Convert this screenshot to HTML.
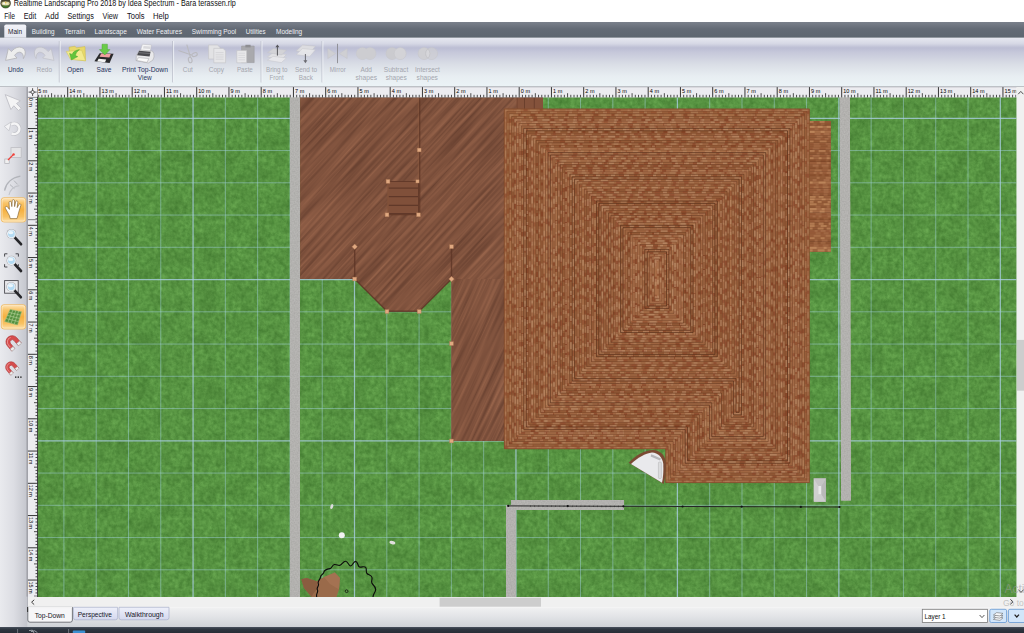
<!DOCTYPE html><html><head><meta charset="utf-8"><title>Realtime Landscaping Pro 2018 by Idea Spectrum - Bara terassen.rlp</title><style>html,body{margin:0;padding:0;background:#fff;overflow:hidden}body{width:1024px;height:633px}</style></head><body><svg width="1024" height="633" viewBox="0 0 1024 633" font-family="'Liberation Sans', sans-serif" style="display:block"><defs>
<filter id="grassF" x="0" y="0" width="100%" height="100%" color-interpolation-filters="sRGB">
 <feTurbulence type="fractalNoise" baseFrequency="0.24" numOctaves="3" seed="3" result="n1"/>
 <feColorMatrix in="n1" type="matrix" values="0.17 0 0 0 0.265  0.19 0 0 0 0.495  0.14 0 0 0 0.195  0 0 0 0 1" result="c1"/>
 <feTurbulence type="fractalNoise" baseFrequency="0.06" numOctaves="3" seed="11" result="n2"/>
 <feColorMatrix in="n2" type="matrix" values="0 0 0 0 0.18  0 0 0 0 0.36  0 0 0 0 0.12  -0.5 0 0 0 0.32" result="c2"/>
 <feComposite in="c2" in2="c1" operator="over"/>
</filter>
<filter id="deckF" x="0" y="0" width="100%" height="100%" color-interpolation-filters="sRGB">
 <feTurbulence type="fractalNoise" baseFrequency="0.35 0.012" numOctaves="2" seed="5" result="n1"/>
 <feColorMatrix in="n1" type="matrix" values="0.27 0 0 0 0.365  0.20 0 0 0 0.222  0.15 0 0 0 0.165  0 0 0 0 1"/>
</filter>
<filter id="pathF" x="0" y="0" width="100%" height="100%" color-interpolation-filters="sRGB">
 <feTurbulence type="fractalNoise" baseFrequency="0.7" numOctaves="1" seed="9" result="n1"/>
 <feColorMatrix in="n1" type="matrix" values="0.1 0 0 0 0.65  0.1 0 0 0 0.645  0.1 0 0 0 0.635  0 0 0 0 1"/>
</filter>
<clipPath id="cv"><rect x="37.5" y="97.3" width="979.1" height="499.7"/></clipPath>
<linearGradient id="tabstrip" x1="0" y1="0" x2="0" y2="1"><stop offset="0" stop-color="#7a808b"/><stop offset="0.45" stop-color="#636a75"/><stop offset="1" stop-color="#5d6670"/></linearGradient>
<linearGradient id="ribbon" x1="0" y1="0" x2="0" y2="1">
 <stop offset="0" stop-color="#e6e8f0"/><stop offset="0.12" stop-color="#d6d8e5"/><stop offset="0.19" stop-color="#c0c2d6"/><stop offset="0.21" stop-color="#bcbed4"/><stop offset="0.3" stop-color="#c6c8da"/><stop offset="0.55" stop-color="#dadee6"/><stop offset="0.8" stop-color="#e8eef2"/><stop offset="1" stop-color="#ebf3f6"/></linearGradient>
<linearGradient id="ltool" x1="0" y1="0" x2="1" y2="0"><stop offset="0" stop-color="#e9eaee"/><stop offset="0.5" stop-color="#dcdde3"/><stop offset="1" stop-color="#c3c5cc"/></linearGradient>
<linearGradient id="btab" x1="0" y1="0" x2="0" y2="1"><stop offset="0" stop-color="#f1f1f2"/><stop offset="0.5" stop-color="#e1e3e6"/><stop offset="1" stop-color="#cfd2d7"/></linearGradient>
<linearGradient id="ptab" x1="0" y1="0" x2="0" y2="1"><stop offset="0" stop-color="#eef0fa"/><stop offset="1" stop-color="#d4d8ee"/></linearGradient>
<linearGradient id="hot" x1="0" y1="0" x2="0" y2="1"><stop offset="0" stop-color="#fde6bc"/><stop offset="0.22" stop-color="#f9c468"/><stop offset="0.5" stop-color="#f5b040"/><stop offset="0.78" stop-color="#f8c264"/><stop offset="1" stop-color="#fde2ae"/></linearGradient>
<linearGradient id="maintab" x1="0" y1="0" x2="0" y2="1"><stop offset="0" stop-color="#f2f3f8"/><stop offset="1" stop-color="#e4e6ef"/></linearGradient>
</defs>
<rect x="0" y="0" width="1024" height="633" fill="#ffffff"/>
<g clip-path="url(#cv)">
<rect x="37.5" y="97.3" width="979.1" height="499.7" fill="#47943c"/>
<rect x="37.5" y="97.3" width="979.1" height="499.7" filter="url(#grassF)"/>
<line x1="63.90" y1="97.3" x2="63.90" y2="597.0" stroke="#a0cfdc" stroke-opacity="0.5" stroke-width="1"/>
<line x1="96.19" y1="97.3" x2="96.19" y2="597.0" stroke="#a0cfdc" stroke-opacity="0.5" stroke-width="1"/>
<line x1="128.48" y1="97.3" x2="128.48" y2="597.0" stroke="#a0cfdc" stroke-opacity="0.5" stroke-width="1"/>
<line x1="160.77" y1="97.3" x2="160.77" y2="597.0" stroke="#a0cfdc" stroke-opacity="0.5" stroke-width="1"/>
<line x1="193.06" y1="97.3" x2="193.06" y2="597.0" stroke="#a9cde2" stroke-opacity="0.8" stroke-width="1.25"/>
<line x1="225.35" y1="97.3" x2="225.35" y2="597.0" stroke="#a0cfdc" stroke-opacity="0.5" stroke-width="1"/>
<line x1="257.64" y1="97.3" x2="257.64" y2="597.0" stroke="#a0cfdc" stroke-opacity="0.5" stroke-width="1"/>
<line x1="289.93" y1="97.3" x2="289.93" y2="597.0" stroke="#a0cfdc" stroke-opacity="0.5" stroke-width="1"/>
<line x1="322.22" y1="97.3" x2="322.22" y2="597.0" stroke="#a0cfdc" stroke-opacity="0.5" stroke-width="1"/>
<line x1="354.51" y1="97.3" x2="354.51" y2="597.0" stroke="#a9cde2" stroke-opacity="0.8" stroke-width="1.25"/>
<line x1="386.80" y1="97.3" x2="386.80" y2="597.0" stroke="#a0cfdc" stroke-opacity="0.5" stroke-width="1"/>
<line x1="419.09" y1="97.3" x2="419.09" y2="597.0" stroke="#a0cfdc" stroke-opacity="0.5" stroke-width="1"/>
<line x1="451.38" y1="97.3" x2="451.38" y2="597.0" stroke="#a0cfdc" stroke-opacity="0.5" stroke-width="1"/>
<line x1="483.67" y1="97.3" x2="483.67" y2="597.0" stroke="#a0cfdc" stroke-opacity="0.5" stroke-width="1"/>
<line x1="515.96" y1="97.3" x2="515.96" y2="597.0" stroke="#a9cde2" stroke-opacity="0.8" stroke-width="1.25"/>
<line x1="548.25" y1="97.3" x2="548.25" y2="597.0" stroke="#a0cfdc" stroke-opacity="0.5" stroke-width="1"/>
<line x1="580.54" y1="97.3" x2="580.54" y2="597.0" stroke="#a0cfdc" stroke-opacity="0.5" stroke-width="1"/>
<line x1="612.83" y1="97.3" x2="612.83" y2="597.0" stroke="#a0cfdc" stroke-opacity="0.5" stroke-width="1"/>
<line x1="645.12" y1="97.3" x2="645.12" y2="597.0" stroke="#a0cfdc" stroke-opacity="0.5" stroke-width="1"/>
<line x1="677.41" y1="97.3" x2="677.41" y2="597.0" stroke="#a9cde2" stroke-opacity="0.8" stroke-width="1.25"/>
<line x1="709.70" y1="97.3" x2="709.70" y2="597.0" stroke="#a0cfdc" stroke-opacity="0.5" stroke-width="1"/>
<line x1="741.99" y1="97.3" x2="741.99" y2="597.0" stroke="#a0cfdc" stroke-opacity="0.5" stroke-width="1"/>
<line x1="774.28" y1="97.3" x2="774.28" y2="597.0" stroke="#a0cfdc" stroke-opacity="0.5" stroke-width="1"/>
<line x1="806.57" y1="97.3" x2="806.57" y2="597.0" stroke="#a0cfdc" stroke-opacity="0.5" stroke-width="1"/>
<line x1="838.86" y1="97.3" x2="838.86" y2="597.0" stroke="#a9cde2" stroke-opacity="0.8" stroke-width="1.25"/>
<line x1="871.15" y1="97.3" x2="871.15" y2="597.0" stroke="#a0cfdc" stroke-opacity="0.5" stroke-width="1"/>
<line x1="903.44" y1="97.3" x2="903.44" y2="597.0" stroke="#a0cfdc" stroke-opacity="0.5" stroke-width="1"/>
<line x1="935.73" y1="97.3" x2="935.73" y2="597.0" stroke="#a0cfdc" stroke-opacity="0.5" stroke-width="1"/>
<line x1="968.02" y1="97.3" x2="968.02" y2="597.0" stroke="#a0cfdc" stroke-opacity="0.5" stroke-width="1"/>
<line x1="1000.31" y1="97.3" x2="1000.31" y2="597.0" stroke="#a9cde2" stroke-opacity="0.8" stroke-width="1.25"/>
<line x1="37.5" y1="118.30" x2="1016.6" y2="118.30" stroke="#a9cde2" stroke-opacity="0.8" stroke-width="1.2"/>
<line x1="37.5" y1="150.55" x2="1016.6" y2="150.55" stroke="#a0cfdc" stroke-opacity="0.5" stroke-width="1"/>
<line x1="37.5" y1="182.80" x2="1016.6" y2="182.80" stroke="#a0cfdc" stroke-opacity="0.5" stroke-width="1"/>
<line x1="37.5" y1="215.05" x2="1016.6" y2="215.05" stroke="#a0cfdc" stroke-opacity="0.5" stroke-width="1"/>
<line x1="37.5" y1="247.30" x2="1016.6" y2="247.30" stroke="#a0cfdc" stroke-opacity="0.5" stroke-width="1"/>
<line x1="37.5" y1="279.55" x2="1016.6" y2="279.55" stroke="#a9cde2" stroke-opacity="0.8" stroke-width="1.2"/>
<line x1="37.5" y1="311.80" x2="1016.6" y2="311.80" stroke="#a0cfdc" stroke-opacity="0.5" stroke-width="1"/>
<line x1="37.5" y1="344.05" x2="1016.6" y2="344.05" stroke="#a0cfdc" stroke-opacity="0.5" stroke-width="1"/>
<line x1="37.5" y1="376.30" x2="1016.6" y2="376.30" stroke="#a0cfdc" stroke-opacity="0.5" stroke-width="1"/>
<line x1="37.5" y1="408.55" x2="1016.6" y2="408.55" stroke="#a0cfdc" stroke-opacity="0.5" stroke-width="1"/>
<line x1="37.5" y1="440.80" x2="1016.6" y2="440.80" stroke="#a9cde2" stroke-opacity="0.8" stroke-width="1.2"/>
<line x1="37.5" y1="473.05" x2="1016.6" y2="473.05" stroke="#a0cfdc" stroke-opacity="0.5" stroke-width="1"/>
<line x1="37.5" y1="505.30" x2="1016.6" y2="505.30" stroke="#a0cfdc" stroke-opacity="0.5" stroke-width="1"/>
<line x1="37.5" y1="537.55" x2="1016.6" y2="537.55" stroke="#a0cfdc" stroke-opacity="0.5" stroke-width="1"/>
<line x1="37.5" y1="569.80" x2="1016.6" y2="569.80" stroke="#a0cfdc" stroke-opacity="0.5" stroke-width="1"/>
<rect x="290" y="97" width="10" height="500" fill="#b2b1ae"/>
<rect x="290" y="97" width="10" height="500" filter="url(#pathF)"/>
<clipPath id="rp"><polygon points="839.8,97 849.9,97 850.9,500.6 841.1,500.6"/></clipPath><g clip-path="url(#rp)">
<rect x="839" y="97" width="13" height="404" fill="#b2b1ae"/>
<rect x="839" y="97" width="13" height="404" filter="url(#pathF)"/>
</g>
<rect x="506.3" y="505" width="9.7" height="92" fill="#b2b1ae"/>
<rect x="506.3" y="505" width="9.7" height="92" filter="url(#pathF)"/>
<rect x="511.1" y="500.2" width="112.5" height="9.7" fill="#b2b1ae"/>
<rect x="511.1" y="500.2" width="112.5" height="9.7" filter="url(#pathF)"/>
<clipPath id="deckc"><polygon points="300.2,97 543,97 543,112 506,112 506,441 451.5,441 451.5,279 419.2,311.3 387,311.3 354.7,279 300.2,279"/></clipPath>
<polygon points="300.2,97 543,97 543,112 506,112 506,441 451.5,441 451.5,279 419.2,311.3 387,311.3 354.7,279 300.2,279" fill="#7f5039"/>
<g clip-path="url(#deckc)">
<g transform="rotate(43 400 250)"><rect x="100" y="-50" width="600" height="600" filter="url(#deckF)"/></g>
<clipPath id="deck2"><rect x="451.5" y="279" width="60" height="165"/></clipPath>
<g clip-path="url(#deck2)"><g transform="rotate(25 480 360)"><rect x="330" y="200" width="300" height="330" filter="url(#deckF)"/></g></g>
<clipPath id="deck3"><rect x="516.7" y="97" width="27" height="15"/></clipPath>
<g clip-path="url(#deck3)"><rect x="500" y="90" width="50" height="30" fill="#84523b"/><path d="M516.9 97 V112 M524.5 97 V112 M534.3 97 V112" stroke="#5d3526" stroke-width="0.8" stroke-opacity="0.8"/></g>
</g>
<line x1="300" y1="97.3" x2="543" y2="97.3" stroke="#4a2b20" stroke-width="1" stroke-opacity="0.8"/>
<line x1="419.6" y1="97" x2="419.6" y2="214.8" stroke="#5d3526" stroke-width="1.6" stroke-opacity="0.75"/>
<line x1="418.3" y1="97" x2="418.3" y2="214.8" stroke="#9a6548" stroke-width="0.6" stroke-opacity="0.8"/>
<rect x="388" y="181.4" width="30.5" height="33.4" fill="#80503a" stroke="#5d3526" stroke-width="0.8"/>
<line x1="388.5" y1="188.1" x2="418" y2="188.1" stroke="#4e2c20" stroke-width="0.9" stroke-opacity="0.85"/>
<line x1="388.5" y1="196.7" x2="418" y2="196.7" stroke="#4e2c20" stroke-width="0.9" stroke-opacity="0.85"/>
<line x1="388.5" y1="205.3" x2="418" y2="205.3" stroke="#4e2c20" stroke-width="0.9" stroke-opacity="0.85"/>
<line x1="388.5" y1="213.7" x2="418" y2="213.7" stroke="#4e2c20" stroke-width="0.9" stroke-opacity="0.85"/>
<line x1="388" y1="181.4" x2="388" y2="214.8" stroke="#9a6548" stroke-width="0.8"/>
<line x1="354.7" y1="246.7" x2="354.7" y2="279" stroke="#5d3526" stroke-width="1.4" stroke-opacity="0.8"/>
<line x1="451.5" y1="246.7" x2="451.5" y2="279" stroke="#5d3526" stroke-width="1.4" stroke-opacity="0.8"/>
<line x1="354.7" y1="279" x2="387" y2="311.3" stroke="#5d3526" stroke-width="1.4" stroke-opacity="0.8"/>
<line x1="387" y1="311.3" x2="419.2" y2="311.3" stroke="#5d3526" stroke-width="1.4" stroke-opacity="0.8"/>
<line x1="419.2" y1="311.3" x2="451.5" y2="279" stroke="#5d3526" stroke-width="1.4" stroke-opacity="0.8"/>
<rect x="417.3" y="148.1" width="3.8" height="3.8" fill="#e0a981" stroke="#b07a55" stroke-width="0.4"/>
<rect x="386.1" y="179.5" width="3.8" height="3.8" fill="#e0a981" stroke="#b07a55" stroke-width="0.4"/>
<rect x="415.9" y="179.8" width="3.2" height="3.2" fill="#e0a981" stroke="#b07a55" stroke-width="0.4"/>
<rect x="385.1" y="212.9" width="3.8" height="3.8" fill="#e0a981" stroke="#b07a55" stroke-width="0.4"/>
<rect x="416.6" y="212.9" width="3.8" height="3.8" fill="#e0a981" stroke="#b07a55" stroke-width="0.4"/>
<rect x="352.8" y="244.8" width="3.8" height="3.8" fill="#e0a981" stroke="#b07a55" stroke-width="0.4" transform="rotate(45 354.7 246.7)"/>
<rect x="449.6" y="244.8" width="3.8" height="3.8" fill="#e0a981" stroke="#b07a55" stroke-width="0.4"/>
<rect x="352.8" y="277.1" width="3.8" height="3.8" fill="#e0a981" stroke="#b07a55" stroke-width="0.4"/>
<rect x="449.6" y="277.1" width="3.8" height="3.8" fill="#e0a981" stroke="#b07a55" stroke-width="0.4" transform="rotate(45 451.5 279)"/>
<rect x="385.1" y="309.6" width="3.8" height="3.8" fill="#e0a981" stroke="#b07a55" stroke-width="0.4"/>
<rect x="417.3" y="309.6" width="3.8" height="3.8" fill="#e0a981" stroke="#b07a55" stroke-width="0.4"/>
<rect x="449.6" y="341.7" width="3.8" height="3.8" fill="#e0a981" stroke="#b07a55" stroke-width="0.4"/>
<rect x="449.6" y="439.1" width="3.8" height="3.8" fill="#e0a981" stroke="#b07a55" stroke-width="0.4"/>
<polygon points="504.4,109.0 809.3,109.0 809.3,482.6 665.8,482.6 665.8,448.8 504.4,448.8" fill="#975e3a"/>
<rect x="809.6" y="121" width="21.2" height="130.8" fill="#975e3a"/>
<polygon points="505.6,110.2 808.1,110.2 808.1,481.4 667.0,481.4 667.0,447.6 505.6,447.6" fill="none" stroke="#a36a46" stroke-width="2.72" stroke-linejoin="miter"/>
<polygon points="505.6,110.2 808.1,110.2 808.1,481.4 667.0,481.4 667.0,447.6 505.6,447.6" fill="none" stroke="#8f4a2e" stroke-opacity="0.65" stroke-width="2.42" stroke-dasharray="4 6 3 7 4 6 5 9 3 7 4 12 3 9 3 12 3 7 3 6" stroke-dashoffset="36"/>
<polygon points="505.6,110.2 808.1,110.2 808.1,481.4 667.0,481.4 667.0,447.6 505.6,447.6" fill="none" stroke="#b68560" stroke-opacity="0.5" stroke-width="2.02" stroke-dasharray="3 8 3 7 5 11 4 6 7 9 7 7 3 8 5 6 7 6 7 5" stroke-dashoffset="39"/>
<polygon points="508.0,112.6 805.7,112.6 805.7,479.0 669.4,479.0 669.4,445.2 508.0,445.2" fill="none" stroke="#975e3a" stroke-width="2.72" stroke-linejoin="miter"/>
<polygon points="508.0,112.6 805.7,112.6 805.7,479.0 669.4,479.0 669.4,445.2 508.0,445.2" fill="none" stroke="#94502f" stroke-opacity="0.65" stroke-width="2.42" stroke-dasharray="5 12 4 13 5 13 4 10 3 8 5 9 3 10 5 13 4 13 4 7" stroke-dashoffset="7"/>
<polygon points="508.0,112.6 805.7,112.6 805.7,479.0 669.4,479.0 669.4,445.2 508.0,445.2" fill="none" stroke="#b68560" stroke-opacity="0.5" stroke-width="2.02" stroke-dasharray="4 10 4 12 6 5 3 10 5 10 7 12 7 12 3 6 5 12 3 5" stroke-dashoffset="46"/>
<polygon points="510.4,115.0 803.2,115.0 803.2,476.6 671.8,476.6 671.8,442.8 510.4,442.8" fill="none" stroke="#a76e48" stroke-width="2.72" stroke-linejoin="miter"/>
<polygon points="510.4,115.0 803.2,115.0 803.2,476.6 671.8,476.6 671.8,442.8 510.4,442.8" fill="none" stroke="#823e22" stroke-opacity="0.65" stroke-width="2.42" stroke-dasharray="5 13 4 12 5 11 3 13 4 8 5 7 4 6 3 10 3 9 4 12" stroke-dashoffset="58"/>
<polygon points="510.4,115.0 803.2,115.0 803.2,476.6 671.8,476.6 671.8,442.8 510.4,442.8" fill="none" stroke="#b68560" stroke-opacity="0.5" stroke-width="2.02" stroke-dasharray="3 7 6 11 7 9 4 11 7 9 6 10 6 8 4 6 4 7 4 8" stroke-dashoffset="0"/>
<polygon points="512.9,117.5 800.8,117.5 800.8,474.1 674.3,474.1 674.3,440.3 512.9,440.3" fill="none" stroke="#925936" stroke-width="2.72" stroke-linejoin="miter"/>
<polygon points="512.9,117.5 800.8,117.5 800.8,474.1 674.3,474.1 674.3,440.3 512.9,440.3" fill="none" stroke="#8f4a2e" stroke-opacity="0.65" stroke-width="2.42" stroke-dasharray="4 10 3 8 4 11 5 11 3 6 4 12 4 12 4 7 4 12 3 9" stroke-dashoffset="4"/>
<polygon points="512.9,117.5 800.8,117.5 800.8,474.1 674.3,474.1 674.3,440.3 512.9,440.3" fill="none" stroke="#bb8b66" stroke-opacity="0.5" stroke-width="2.02" stroke-dasharray="6 7 3 10 7 5 3 5 7 7 7 6 5 5 3 8 7 11 4 9" stroke-dashoffset="22"/>
<polygon points="515.3,119.9 798.4,119.9 798.4,471.7 676.7,471.7 676.7,437.9 515.3,437.9" fill="none" stroke="#9f6642" stroke-width="2.72" stroke-linejoin="miter"/>
<polygon points="515.3,119.9 798.4,119.9 798.4,471.7 676.7,471.7 676.7,437.9 515.3,437.9" fill="none" stroke="#823e22" stroke-opacity="0.65" stroke-width="2.42" stroke-dasharray="4 7 3 13 4 13 4 10 3 8 3 11 5 10 4 8 5 6 3 11" stroke-dashoffset="9"/>
<polygon points="515.3,119.9 798.4,119.9 798.4,471.7 676.7,471.7 676.7,437.9 515.3,437.9" fill="none" stroke="#c29470" stroke-opacity="0.5" stroke-width="2.02" stroke-dasharray="7 9 3 9 7 10 4 10 4 10 4 8 4 11 4 8 7 12 5 5" stroke-dashoffset="1"/>
<polygon points="517.7,122.3 796.0,122.3 796.0,469.3 679.1,469.3 679.1,435.5 517.7,435.5" fill="none" stroke="#a36a46" stroke-width="2.72" stroke-linejoin="miter"/>
<polygon points="517.7,122.3 796.0,122.3 796.0,469.3 679.1,469.3 679.1,435.5 517.7,435.5" fill="none" stroke="#94502f" stroke-opacity="0.65" stroke-width="2.42" stroke-dasharray="4 9 5 11 4 11 4 7 3 7 3 13 3 11 3 13 5 6 4 11" stroke-dashoffset="51"/>
<polygon points="517.7,122.3 796.0,122.3 796.0,469.3 679.1,469.3 679.1,435.5 517.7,435.5" fill="none" stroke="#c29470" stroke-opacity="0.5" stroke-width="2.02" stroke-dasharray="3 11 4 12 4 11 5 6 6 12 6 6 4 7 4 5 4 12 4 12" stroke-dashoffset="42"/>
<polygon points="520.1,124.7 793.6,124.7 793.6,466.9 681.5,466.9 681.5,433.1 520.1,433.1" fill="none" stroke="#a36a46" stroke-width="2.72" stroke-linejoin="miter"/>
<polygon points="520.1,124.7 793.6,124.7 793.6,466.9 681.5,466.9 681.5,433.1 520.1,433.1" fill="none" stroke="#8f4a2e" stroke-opacity="0.65" stroke-width="2.42" stroke-dasharray="5 8 3 6 5 7 5 8 4 9 3 6 4 9 4 9 5 11 4 12" stroke-dashoffset="53"/>
<polygon points="520.1,124.7 793.6,124.7 793.6,466.9 681.5,466.9 681.5,433.1 520.1,433.1" fill="none" stroke="#bb8b66" stroke-opacity="0.5" stroke-width="2.02" stroke-dasharray="3 10 6 11 7 7 7 7 7 5 6 7 7 5 4 7 4 12 7 6" stroke-dashoffset="35"/>
<polygon points="522.5,127.2 791.1,127.2 791.1,464.5 683.9,464.5 683.9,430.7 522.5,430.7" fill="none" stroke="#9d6440" stroke-width="2.72" stroke-linejoin="miter"/>
<polygon points="522.5,127.2 791.1,127.2 791.1,464.5 683.9,464.5 683.9,430.7 522.5,430.7" fill="none" stroke="#823e22" stroke-opacity="0.65" stroke-width="2.42" stroke-dasharray="5 13 3 6 3 9 4 6 3 13 5 6 3 13 4 9 5 10 4 13" stroke-dashoffset="32"/>
<polygon points="522.5,127.2 791.1,127.2 791.1,464.5 683.9,464.5 683.9,430.7 522.5,430.7" fill="none" stroke="#bb8b66" stroke-opacity="0.5" stroke-width="2.02" stroke-dasharray="7 9 7 8 6 7 6 6 6 12 5 6 4 11 3 8 5 6 4 10" stroke-dashoffset="9"/>
<polygon points="525.0,129.6 788.7,129.6 788.7,462.0 686.4,462.0 686.4,428.2 525.0,428.2" fill="none" stroke="#a36a46" stroke-width="2.72" stroke-linejoin="miter"/>
<polygon points="525.0,129.6 788.7,129.6 788.7,462.0 686.4,462.0 686.4,428.2 525.0,428.2" fill="none" stroke="#8f4a2e" stroke-opacity="0.65" stroke-width="2.42" stroke-dasharray="4 9 5 7 4 13 3 9 3 12 5 12 4 12 3 11 4 7 5 11" stroke-dashoffset="1"/>
<polygon points="525.0,129.6 788.7,129.6 788.7,462.0 686.4,462.0 686.4,428.2 525.0,428.2" fill="none" stroke="#c89b78" stroke-opacity="0.5" stroke-width="2.02" stroke-dasharray="7 12 6 5 6 10 7 9 7 6 3 8 3 6 5 9 3 7 5 7" stroke-dashoffset="52"/>
<polygon points="527.4,132.0 786.3,132.0 786.3,459.6 688.8,459.6 688.8,425.8 527.4,425.8" fill="none" stroke="#925936" stroke-width="2.72" stroke-linejoin="miter"/>
<polygon points="527.4,132.0 786.3,132.0 786.3,459.6 688.8,459.6 688.8,425.8 527.4,425.8" fill="none" stroke="#823e22" stroke-opacity="0.65" stroke-width="2.42" stroke-dasharray="4 8 5 13 5 11 3 10 3 8 4 7 4 6 5 7 4 7 5 9" stroke-dashoffset="4"/>
<polygon points="527.4,132.0 786.3,132.0 786.3,459.6 688.8,459.6 688.8,425.8 527.4,425.8" fill="none" stroke="#c89b78" stroke-opacity="0.5" stroke-width="2.02" stroke-dasharray="3 12 3 10 7 11 5 7 3 8 3 7 5 5 4 8 5 9 7 8" stroke-dashoffset="18"/>
<polygon points="529.8,134.4 783.9,134.4 783.9,457.2 691.2,457.2 691.2,423.4 529.8,423.4" fill="none" stroke="#925936" stroke-width="2.72" stroke-linejoin="miter"/>
<polygon points="529.8,134.4 783.9,134.4 783.9,457.2 691.2,457.2 691.2,423.4 529.8,423.4" fill="none" stroke="#8f4a2e" stroke-opacity="0.65" stroke-width="2.42" stroke-dasharray="4 11 3 10 3 6 3 9 5 13 3 13 3 12 5 13 5 12 5 10" stroke-dashoffset="44"/>
<polygon points="529.8,134.4 783.9,134.4 783.9,457.2 691.2,457.2 691.2,423.4 529.8,423.4" fill="none" stroke="#bb8b66" stroke-opacity="0.5" stroke-width="2.02" stroke-dasharray="4 10 4 7 6 10 3 7 3 6 5 11 4 5 3 11 7 9 7 8" stroke-dashoffset="44"/>
<polygon points="532.2,136.8 781.5,136.8 781.5,454.8 693.6,454.8 693.6,421.0 532.2,421.0" fill="none" stroke="#a36a46" stroke-width="2.72" stroke-linejoin="miter"/>
<polygon points="532.2,136.8 781.5,136.8 781.5,454.8 693.6,454.8 693.6,421.0 532.2,421.0" fill="none" stroke="#8a4528" stroke-opacity="0.65" stroke-width="2.42" stroke-dasharray="4 8 3 10 4 6 4 11 4 11 3 6 4 9 4 8 3 11 4 7" stroke-dashoffset="30"/>
<polygon points="532.2,136.8 781.5,136.8 781.5,454.8 693.6,454.8 693.6,421.0 532.2,421.0" fill="none" stroke="#c89b78" stroke-opacity="0.5" stroke-width="2.02" stroke-dasharray="7 8 4 5 3 9 3 7 6 5 6 5 5 9 4 6 7 7 7 11" stroke-dashoffset="48"/>
<polygon points="534.6,139.2 779.0,139.2 779.0,452.4 696.0,452.4 696.0,418.6 534.6,418.6" fill="none" stroke="#a36a46" stroke-width="2.72" stroke-linejoin="miter"/>
<polygon points="534.6,139.2 779.0,139.2 779.0,452.4 696.0,452.4 696.0,418.6 534.6,418.6" fill="none" stroke="#94502f" stroke-opacity="0.65" stroke-width="2.42" stroke-dasharray="3 10 5 8 3 12 5 8 5 6 5 9 3 6 3 8 5 11 3 12" stroke-dashoffset="53"/>
<polygon points="534.6,139.2 779.0,139.2 779.0,452.4 696.0,452.4 696.0,418.6 534.6,418.6" fill="none" stroke="#b68560" stroke-opacity="0.5" stroke-width="2.02" stroke-dasharray="7 5 3 8 6 9 3 12 3 6 7 6 6 9 3 9 4 8 4 12" stroke-dashoffset="31"/>
<polygon points="537.1,141.7 776.6,141.7 776.6,449.9 698.5,449.9 698.5,416.1 537.1,416.1" fill="none" stroke="#925936" stroke-width="2.72" stroke-linejoin="miter"/>
<polygon points="537.1,141.7 776.6,141.7 776.6,449.9 698.5,449.9 698.5,416.1 537.1,416.1" fill="none" stroke="#8a4528" stroke-opacity="0.65" stroke-width="2.42" stroke-dasharray="4 10 3 9 3 8 4 10 5 10 5 8 3 13 3 13 4 7 5 9" stroke-dashoffset="43"/>
<polygon points="537.1,141.7 776.6,141.7 776.6,449.9 698.5,449.9 698.5,416.1 537.1,416.1" fill="none" stroke="#b68560" stroke-opacity="0.5" stroke-width="2.02" stroke-dasharray="5 9 6 12 6 6 7 8 5 6 6 5 5 12 3 12 5 11 4 8" stroke-dashoffset="4"/>
<polygon points="539.5,144.1 774.2,144.1 774.2,447.5 700.9,447.5 700.9,413.7 539.5,413.7" fill="none" stroke="#9f6642" stroke-width="2.72" stroke-linejoin="miter"/>
<polygon points="539.5,144.1 774.2,144.1 774.2,447.5 700.9,447.5 700.9,413.7 539.5,413.7" fill="none" stroke="#8a4528" stroke-opacity="0.65" stroke-width="2.42" stroke-dasharray="3 10 4 8 5 10 3 11 3 13 4 12 3 8 3 13 5 13 4 10" stroke-dashoffset="46"/>
<polygon points="539.5,144.1 774.2,144.1 774.2,447.5 700.9,447.5 700.9,413.7 539.5,413.7" fill="none" stroke="#bb8b66" stroke-opacity="0.5" stroke-width="2.02" stroke-dasharray="6 10 6 10 3 10 3 10 5 11 3 8 3 9 5 10 3 11 6 6" stroke-dashoffset="23"/>
<polygon points="541.9,146.5 771.8,146.5 771.8,445.1 703.3,445.1 703.3,411.3 541.9,411.3" fill="none" stroke="#925936" stroke-width="2.72" stroke-linejoin="miter"/>
<polygon points="541.9,146.5 771.8,146.5 771.8,445.1 703.3,445.1 703.3,411.3 541.9,411.3" fill="none" stroke="#823e22" stroke-opacity="0.65" stroke-width="2.42" stroke-dasharray="3 10 3 6 5 10 5 8 3 10 4 11 3 11 4 6 5 12 5 9" stroke-dashoffset="46"/>
<polygon points="541.9,146.5 771.8,146.5 771.8,445.1 703.3,445.1 703.3,411.3 541.9,411.3" fill="none" stroke="#c29470" stroke-opacity="0.5" stroke-width="2.02" stroke-dasharray="3 11 6 7 5 12 3 7 4 12 6 10 5 9 5 9 6 8 5 12" stroke-dashoffset="35"/>
<polygon points="544.3,148.9 769.4,148.9 769.4,442.7 705.7,442.7 705.7,408.9 544.3,408.9" fill="none" stroke="#a76e48" stroke-width="2.72" stroke-linejoin="miter"/>
<polygon points="544.3,148.9 769.4,148.9 769.4,442.7 705.7,442.7 705.7,408.9 544.3,408.9" fill="none" stroke="#94502f" stroke-opacity="0.65" stroke-width="2.42" stroke-dasharray="3 8 5 8 3 9 5 13 5 9 4 11 4 12 3 9 3 7 3 11" stroke-dashoffset="35"/>
<polygon points="544.3,148.9 769.4,148.9 769.4,442.7 705.7,442.7 705.7,408.9 544.3,408.9" fill="none" stroke="#c29470" stroke-opacity="0.5" stroke-width="2.02" stroke-dasharray="5 8 5 9 7 8 3 11 6 11 7 8 6 9 5 5 6 9 7 10" stroke-dashoffset="8"/>
<polygon points="546.8,151.4 766.9,151.4 766.9,440.2 708.1,440.2 708.1,406.4 546.8,406.4" fill="none" stroke="#a76e48" stroke-width="2.72" stroke-linejoin="miter"/>
<polygon points="546.8,151.4 766.9,151.4 766.9,440.2 708.1,440.2 708.1,406.4 546.8,406.4" fill="none" stroke="#8f4a2e" stroke-opacity="0.65" stroke-width="2.42" stroke-dasharray="3 10 3 12 4 13 4 10 3 8 3 12 5 13 5 13 3 7 4 13" stroke-dashoffset="28"/>
<polygon points="546.8,151.4 766.9,151.4 766.9,440.2 708.1,440.2 708.1,406.4 546.8,406.4" fill="none" stroke="#bb8b66" stroke-opacity="0.5" stroke-width="2.02" stroke-dasharray="3 8 4 7 7 6 6 6 7 5 3 7 4 5 5 7 5 11 3 6" stroke-dashoffset="4"/>
<polygon points="549.2,153.8 764.5,153.8 764.5,437.8 710.6,437.8 710.6,404.0 549.2,404.0" fill="none" stroke="#a36a46" stroke-width="2.72" stroke-linejoin="miter"/>
<polygon points="549.2,153.8 764.5,153.8 764.5,437.8 710.6,437.8 710.6,404.0 549.2,404.0" fill="none" stroke="#8f4a2e" stroke-opacity="0.65" stroke-width="2.42" stroke-dasharray="4 10 3 6 3 10 4 10 4 9 4 9 5 9 3 12 5 10 3 6" stroke-dashoffset="12"/>
<polygon points="549.2,153.8 764.5,153.8 764.5,437.8 710.6,437.8 710.6,404.0 549.2,404.0" fill="none" stroke="#b68560" stroke-opacity="0.5" stroke-width="2.02" stroke-dasharray="6 6 5 8 6 10 4 12 3 10 6 10 6 8 3 9 7 6 4 12" stroke-dashoffset="12"/>
<polygon points="551.6,156.2 762.1,156.2 762.1,435.4 713.0,435.4 713.0,401.6 551.6,401.6" fill="none" stroke="#a36a46" stroke-width="2.72" stroke-linejoin="miter"/>
<polygon points="551.6,156.2 762.1,156.2 762.1,435.4 713.0,435.4 713.0,401.6 551.6,401.6" fill="none" stroke="#8f4a2e" stroke-opacity="0.65" stroke-width="2.42" stroke-dasharray="3 13 3 10 4 7 5 13 5 8 3 13 4 6 5 8 4 6 3 6" stroke-dashoffset="38"/>
<polygon points="551.6,156.2 762.1,156.2 762.1,435.4 713.0,435.4 713.0,401.6 551.6,401.6" fill="none" stroke="#bb8b66" stroke-opacity="0.5" stroke-width="2.02" stroke-dasharray="6 5 3 7 6 12 5 6 3 7 5 8 4 12 3 9 6 10 5 12" stroke-dashoffset="10"/>
<polygon points="554.0,158.6 759.7,158.6 759.7,433.0 715.4,433.0 715.4,399.2 554.0,399.2" fill="none" stroke="#9d6440" stroke-width="2.72" stroke-linejoin="miter"/>
<polygon points="554.0,158.6 759.7,158.6 759.7,433.0 715.4,433.0 715.4,399.2 554.0,399.2" fill="none" stroke="#8a4528" stroke-opacity="0.65" stroke-width="2.42" stroke-dasharray="3 10 3 11 4 7 5 9 4 11 4 12 3 6 5 13 3 11 5 13" stroke-dashoffset="12"/>
<polygon points="554.0,158.6 759.7,158.6 759.7,433.0 715.4,433.0 715.4,399.2 554.0,399.2" fill="none" stroke="#c89b78" stroke-opacity="0.5" stroke-width="2.02" stroke-dasharray="5 12 3 11 4 11 3 11 3 12 3 5 5 8 3 10 5 9 5 5" stroke-dashoffset="16"/>
<polygon points="556.4,161.0 757.3,161.0 757.3,430.6 717.8,430.6 717.8,396.8 556.4,396.8" fill="none" stroke="#a76e48" stroke-width="2.72" stroke-linejoin="miter"/>
<polygon points="556.4,161.0 757.3,161.0 757.3,430.6 717.8,430.6 717.8,396.8 556.4,396.8" fill="none" stroke="#823e22" stroke-opacity="0.65" stroke-width="2.42" stroke-dasharray="4 10 3 7 3 9 3 13 5 13 4 10 4 13 3 13 3 6 5 10" stroke-dashoffset="52"/>
<polygon points="556.4,161.0 757.3,161.0 757.3,430.6 717.8,430.6 717.8,396.8 556.4,396.8" fill="none" stroke="#bb8b66" stroke-opacity="0.5" stroke-width="2.02" stroke-dasharray="7 8 5 10 6 10 7 6 7 8 6 7 4 11 3 5 6 10 4 11" stroke-dashoffset="56"/>
<polygon points="558.9,163.5 754.8,163.5 754.8,428.1 720.2,428.1 720.2,394.3 558.9,394.3" fill="none" stroke="#9d6440" stroke-width="2.72" stroke-linejoin="miter"/>
<polygon points="558.9,163.5 754.8,163.5 754.8,428.1 720.2,428.1 720.2,394.3 558.9,394.3" fill="none" stroke="#8a4528" stroke-opacity="0.65" stroke-width="2.42" stroke-dasharray="4 7 3 7 4 13 5 13 3 9 3 12 4 9 5 7 4 10 4 10" stroke-dashoffset="23"/>
<polygon points="558.9,163.5 754.8,163.5 754.8,428.1 720.2,428.1 720.2,394.3 558.9,394.3" fill="none" stroke="#c89b78" stroke-opacity="0.5" stroke-width="2.02" stroke-dasharray="5 8 6 8 4 8 4 7 5 8 5 6 6 9 4 8 3 12 3 6" stroke-dashoffset="0"/>
<polygon points="561.3,165.9 752.4,165.9 752.4,425.7 722.7,425.7 722.7,391.9 561.3,391.9" fill="none" stroke="#925936" stroke-width="2.72" stroke-linejoin="miter"/>
<polygon points="561.3,165.9 752.4,165.9 752.4,425.7 722.7,425.7 722.7,391.9 561.3,391.9" fill="none" stroke="#8f4a2e" stroke-opacity="0.65" stroke-width="2.42" stroke-dasharray="4 11 3 10 3 7 3 9 5 9 3 11 5 8 4 10 5 6 3 11" stroke-dashoffset="13"/>
<polygon points="561.3,165.9 752.4,165.9 752.4,425.7 722.7,425.7 722.7,391.9 561.3,391.9" fill="none" stroke="#c29470" stroke-opacity="0.5" stroke-width="2.02" stroke-dasharray="5 10 4 5 4 9 3 8 3 10 6 10 4 9 3 8 3 12 7 12" stroke-dashoffset="4"/>
<polygon points="563.7,168.3 750.0,168.3 750.0,423.3 725.1,423.3 725.1,389.5 563.7,389.5" fill="none" stroke="#925936" stroke-width="2.72" stroke-linejoin="miter"/>
<polygon points="563.7,168.3 750.0,168.3 750.0,423.3 725.1,423.3 725.1,389.5 563.7,389.5" fill="none" stroke="#8a4528" stroke-opacity="0.65" stroke-width="2.42" stroke-dasharray="4 8 5 7 5 8 4 10 4 10 5 10 4 6 4 11 4 12 3 11" stroke-dashoffset="41"/>
<polygon points="563.7,168.3 750.0,168.3 750.0,423.3 725.1,423.3 725.1,389.5 563.7,389.5" fill="none" stroke="#bb8b66" stroke-opacity="0.5" stroke-width="2.02" stroke-dasharray="6 11 4 5 6 7 6 6 3 11 7 10 6 7 4 5 3 7 6 6" stroke-dashoffset="36"/>
<polygon points="566.1,170.7 747.6,170.7 747.6,420.9 727.5,420.9 727.5,387.1 566.1,387.1" fill="none" stroke="#9f6642" stroke-width="2.72" stroke-linejoin="miter"/>
<polygon points="566.1,170.7 747.6,170.7 747.6,420.9 727.5,420.9 727.5,387.1 566.1,387.1" fill="none" stroke="#823e22" stroke-opacity="0.65" stroke-width="2.42" stroke-dasharray="5 8 3 11 4 8 5 8 3 7 4 13 3 10 3 6 4 11 3 12" stroke-dashoffset="5"/>
<polygon points="566.1,170.7 747.6,170.7 747.6,420.9 727.5,420.9 727.5,387.1 566.1,387.1" fill="none" stroke="#bb8b66" stroke-opacity="0.5" stroke-width="2.02" stroke-dasharray="4 11 7 8 6 7 7 8 3 11 7 7 6 10 3 7 4 8 3 5" stroke-dashoffset="42"/>
<polygon points="568.5,173.1 745.2,173.1 745.2,418.5 729.9,418.5 729.9,384.7 568.5,384.7" fill="none" stroke="#a36a46" stroke-width="2.72" stroke-linejoin="miter"/>
<polygon points="568.5,173.1 745.2,173.1 745.2,418.5 729.9,418.5 729.9,384.7 568.5,384.7" fill="none" stroke="#8a4528" stroke-opacity="0.65" stroke-width="2.42" stroke-dasharray="4 13 5 10 5 12 4 9 4 12 5 11 4 13 3 6 3 13 4 9" stroke-dashoffset="28"/>
<polygon points="568.5,173.1 745.2,173.1 745.2,418.5 729.9,418.5 729.9,384.7 568.5,384.7" fill="none" stroke="#b68560" stroke-opacity="0.5" stroke-width="2.02" stroke-dasharray="4 12 6 6 3 7 5 11 5 6 6 5 3 7 3 10 7 6 3 11" stroke-dashoffset="41"/>
<polygon points="571.0,175.6 742.7,175.6 742.7,416.1 732.4,416.1 732.4,382.2 571.0,382.2" fill="none" stroke="#975e3a" stroke-width="2.72" stroke-linejoin="miter"/>
<polygon points="571.0,175.6 742.7,175.6 742.7,416.1 732.4,416.1 732.4,382.2 571.0,382.2" fill="none" stroke="#8a4528" stroke-opacity="0.65" stroke-width="2.42" stroke-dasharray="3 7 3 8 4 10 3 9 3 11 5 10 3 11 5 10 4 8 4 13" stroke-dashoffset="13"/>
<polygon points="571.0,175.6 742.7,175.6 742.7,416.1 732.4,416.1 732.4,382.2 571.0,382.2" fill="none" stroke="#c89b78" stroke-opacity="0.5" stroke-width="2.02" stroke-dasharray="7 8 5 10 3 8 4 11 4 9 5 11 4 9 3 5 5 12 7 6" stroke-dashoffset="16"/>
<polygon points="573.4,178.0 740.3,178.0 740.3,413.6 734.8,413.6 734.8,379.8 573.4,379.8" fill="none" stroke="#9f6642" stroke-width="2.72" stroke-linejoin="miter"/>
<polygon points="573.4,178.0 740.3,178.0 740.3,413.6 734.8,413.6 734.8,379.8 573.4,379.8" fill="none" stroke="#94502f" stroke-opacity="0.65" stroke-width="2.42" stroke-dasharray="5 11 4 12 4 8 4 11 3 13 3 8 5 6 4 10 4 11 5 6" stroke-dashoffset="47"/>
<polygon points="573.4,178.0 740.3,178.0 740.3,413.6 734.8,413.6 734.8,379.8 573.4,379.8" fill="none" stroke="#c29470" stroke-opacity="0.5" stroke-width="2.02" stroke-dasharray="4 7 5 11 6 10 3 7 6 8 7 5 3 5 3 10 5 6 7 10" stroke-dashoffset="34"/>
<polygon points="575.8,180.4 737.9,180.4 737.9,411.2 737.2,411.2 737.2,377.4 575.8,377.4" fill="none" stroke="#975e3a" stroke-width="2.72" stroke-linejoin="miter"/>
<polygon points="575.8,180.4 737.9,180.4 737.9,411.2 737.2,411.2 737.2,377.4 575.8,377.4" fill="none" stroke="#94502f" stroke-opacity="0.65" stroke-width="2.42" stroke-dasharray="5 10 5 8 3 11 5 13 3 8 3 9 5 8 4 7 3 8 5 10" stroke-dashoffset="25"/>
<polygon points="575.8,180.4 737.9,180.4 737.9,411.2 737.2,411.2 737.2,377.4 575.8,377.4" fill="none" stroke="#c89b78" stroke-opacity="0.5" stroke-width="2.02" stroke-dasharray="3 5 7 10 7 12 7 12 4 7 3 5 3 5 6 7 4 7 3 6" stroke-dashoffset="0"/>
<polygon points="578.2,182.8 735.5,182.8 735.5,375.0 578.2,375.0" fill="none" stroke="#9f6642" stroke-width="2.72" stroke-linejoin="miter"/>
<polygon points="578.2,182.8 735.5,182.8 735.5,375.0 578.2,375.0" fill="none" stroke="#8f4a2e" stroke-opacity="0.65" stroke-width="2.42" stroke-dasharray="3 12 3 12 5 8 5 10 3 10 5 6 5 13 5 6 4 12 5 13" stroke-dashoffset="5"/>
<polygon points="578.2,182.8 735.5,182.8 735.5,375.0 578.2,375.0" fill="none" stroke="#b68560" stroke-opacity="0.5" stroke-width="2.02" stroke-dasharray="4 8 3 9 4 5 3 10 5 5 5 11 7 9 5 8 3 5 4 9" stroke-dashoffset="57"/>
<polygon points="580.6,185.2 733.1,185.2 733.1,372.6 580.6,372.6" fill="none" stroke="#975e3a" stroke-width="2.72" stroke-linejoin="miter"/>
<polygon points="580.6,185.2 733.1,185.2 733.1,372.6 580.6,372.6" fill="none" stroke="#8f4a2e" stroke-opacity="0.65" stroke-width="2.42" stroke-dasharray="3 11 3 12 4 9 4 13 4 6 3 12 5 9 5 10 3 12 5 7" stroke-dashoffset="36"/>
<polygon points="580.6,185.2 733.1,185.2 733.1,372.6 580.6,372.6" fill="none" stroke="#bb8b66" stroke-opacity="0.5" stroke-width="2.02" stroke-dasharray="4 5 3 6 3 7 5 7 3 5 3 7 3 6 3 6 7 10 4 6" stroke-dashoffset="56"/>
<polygon points="583.0,187.7 730.6,187.7 730.6,370.1 583.0,370.1" fill="none" stroke="#a76e48" stroke-width="2.72" stroke-linejoin="miter"/>
<polygon points="583.0,187.7 730.6,187.7 730.6,370.1 583.0,370.1" fill="none" stroke="#94502f" stroke-opacity="0.65" stroke-width="2.42" stroke-dasharray="3 9 3 9 3 6 3 7 5 10 4 7 3 7 5 9 4 11 4 12" stroke-dashoffset="16"/>
<polygon points="583.0,187.7 730.6,187.7 730.6,370.1 583.0,370.1" fill="none" stroke="#c29470" stroke-opacity="0.5" stroke-width="2.02" stroke-dasharray="5 9 5 5 5 10 7 12 5 5 6 5 6 6 5 12 3 8 3 9" stroke-dashoffset="10"/>
<polygon points="585.5,190.1 728.2,190.1 728.2,367.7 585.5,367.7" fill="none" stroke="#925936" stroke-width="2.72" stroke-linejoin="miter"/>
<polygon points="585.5,190.1 728.2,190.1 728.2,367.7 585.5,367.7" fill="none" stroke="#8a4528" stroke-opacity="0.65" stroke-width="2.42" stroke-dasharray="5 9 4 6 3 11 4 7 4 8 4 11 5 10 5 8 4 9 5 9" stroke-dashoffset="31"/>
<polygon points="585.5,190.1 728.2,190.1 728.2,367.7 585.5,367.7" fill="none" stroke="#bb8b66" stroke-opacity="0.5" stroke-width="2.02" stroke-dasharray="3 6 6 6 5 10 3 11 6 6 6 5 5 8 5 9 6 7 6 8" stroke-dashoffset="60"/>
<polygon points="587.9,192.5 725.8,192.5 725.8,365.3 587.9,365.3" fill="none" stroke="#925936" stroke-width="2.72" stroke-linejoin="miter"/>
<polygon points="587.9,192.5 725.8,192.5 725.8,365.3 587.9,365.3" fill="none" stroke="#8f4a2e" stroke-opacity="0.65" stroke-width="2.42" stroke-dasharray="5 6 4 11 5 8 4 11 3 13 4 10 5 9 3 11 4 9 5 9" stroke-dashoffset="17"/>
<polygon points="587.9,192.5 725.8,192.5 725.8,365.3 587.9,365.3" fill="none" stroke="#c89b78" stroke-opacity="0.5" stroke-width="2.02" stroke-dasharray="7 7 4 8 5 10 4 8 5 8 5 6 4 6 4 11 4 7 5 9" stroke-dashoffset="27"/>
<polygon points="590.3,194.9 723.4,194.9 723.4,362.9 590.3,362.9" fill="none" stroke="#a36a46" stroke-width="2.72" stroke-linejoin="miter"/>
<polygon points="590.3,194.9 723.4,194.9 723.4,362.9 590.3,362.9" fill="none" stroke="#8f4a2e" stroke-opacity="0.65" stroke-width="2.42" stroke-dasharray="3 7 4 9 4 13 3 6 4 12 5 9 5 10 4 6 3 10 5 12" stroke-dashoffset="0"/>
<polygon points="590.3,194.9 723.4,194.9 723.4,362.9 590.3,362.9" fill="none" stroke="#bb8b66" stroke-opacity="0.5" stroke-width="2.02" stroke-dasharray="6 11 4 8 4 6 6 11 5 9 3 11 4 11 4 9 6 12 6 5" stroke-dashoffset="39"/>
<polygon points="592.7,197.3 721.0,197.3 721.0,360.5 592.7,360.5" fill="none" stroke="#925936" stroke-width="2.72" stroke-linejoin="miter"/>
<polygon points="592.7,197.3 721.0,197.3 721.0,360.5 592.7,360.5" fill="none" stroke="#8f4a2e" stroke-opacity="0.65" stroke-width="2.42" stroke-dasharray="5 11 3 12 4 7 3 10 5 9 3 9 5 11 3 13 5 9 5 13" stroke-dashoffset="32"/>
<polygon points="592.7,197.3 721.0,197.3 721.0,360.5 592.7,360.5" fill="none" stroke="#c29470" stroke-opacity="0.5" stroke-width="2.02" stroke-dasharray="5 10 6 12 4 7 6 6 7 10 3 9 5 11 6 5 3 6 6 11" stroke-dashoffset="40"/>
<polygon points="595.1,199.8 718.5,199.8 718.5,358.0 595.1,358.0" fill="none" stroke="#a76e48" stroke-width="2.72" stroke-linejoin="miter"/>
<polygon points="595.1,199.8 718.5,199.8 718.5,358.0 595.1,358.0" fill="none" stroke="#823e22" stroke-opacity="0.65" stroke-width="2.42" stroke-dasharray="5 10 3 9 4 12 5 9 4 13 3 8 3 7 5 9 4 9 3 11" stroke-dashoffset="42"/>
<polygon points="595.1,199.8 718.5,199.8 718.5,358.0 595.1,358.0" fill="none" stroke="#b68560" stroke-opacity="0.5" stroke-width="2.02" stroke-dasharray="6 9 7 7 6 10 4 9 6 9 6 7 6 5 5 10 4 9 5 12" stroke-dashoffset="31"/>
<polygon points="597.6,202.2 716.1,202.2 716.1,355.6 597.6,355.6" fill="none" stroke="#925936" stroke-width="2.72" stroke-linejoin="miter"/>
<polygon points="597.6,202.2 716.1,202.2 716.1,355.6 597.6,355.6" fill="none" stroke="#8a4528" stroke-opacity="0.65" stroke-width="2.42" stroke-dasharray="5 11 3 10 4 6 3 11 3 11 5 6 5 6 3 7 5 10 4 7" stroke-dashoffset="37"/>
<polygon points="597.6,202.2 716.1,202.2 716.1,355.6 597.6,355.6" fill="none" stroke="#bb8b66" stroke-opacity="0.5" stroke-width="2.02" stroke-dasharray="4 7 6 10 4 8 6 7 7 6 7 9 4 12 4 6 6 6 7 6" stroke-dashoffset="16"/>
<polygon points="600.0,204.6 713.7,204.6 713.7,353.2 600.0,353.2" fill="none" stroke="#925936" stroke-width="2.72" stroke-linejoin="miter"/>
<polygon points="600.0,204.6 713.7,204.6 713.7,353.2 600.0,353.2" fill="none" stroke="#8f4a2e" stroke-opacity="0.65" stroke-width="2.42" stroke-dasharray="3 13 4 6 4 13 3 13 3 13 3 6 3 11 4 13 5 10 4 11" stroke-dashoffset="27"/>
<polygon points="600.0,204.6 713.7,204.6 713.7,353.2 600.0,353.2" fill="none" stroke="#b68560" stroke-opacity="0.5" stroke-width="2.02" stroke-dasharray="3 7 5 5 3 5 5 6 7 12 6 7 3 8 6 7 5 6 5 10" stroke-dashoffset="30"/>
<polygon points="602.4,207.0 711.3,207.0 711.3,350.8 602.4,350.8" fill="none" stroke="#9f6642" stroke-width="2.72" stroke-linejoin="miter"/>
<polygon points="602.4,207.0 711.3,207.0 711.3,350.8 602.4,350.8" fill="none" stroke="#8f4a2e" stroke-opacity="0.65" stroke-width="2.42" stroke-dasharray="4 12 4 12 4 6 4 10 4 13 4 11 5 10 5 11 3 13 3 11" stroke-dashoffset="12"/>
<polygon points="602.4,207.0 711.3,207.0 711.3,350.8 602.4,350.8" fill="none" stroke="#c89b78" stroke-opacity="0.5" stroke-width="2.02" stroke-dasharray="5 7 7 6 3 11 7 11 7 5 6 9 3 5 3 8 6 5 7 11" stroke-dashoffset="39"/>
<polygon points="604.8,209.4 708.9,209.4 708.9,348.4 604.8,348.4" fill="none" stroke="#975e3a" stroke-width="2.72" stroke-linejoin="miter"/>
<polygon points="604.8,209.4 708.9,209.4 708.9,348.4 604.8,348.4" fill="none" stroke="#8a4528" stroke-opacity="0.65" stroke-width="2.42" stroke-dasharray="3 6 5 13 5 8 3 8 3 12 3 6 4 8 4 10 4 8 4 6" stroke-dashoffset="20"/>
<polygon points="604.8,209.4 708.9,209.4 708.9,348.4 604.8,348.4" fill="none" stroke="#c29470" stroke-opacity="0.5" stroke-width="2.02" stroke-dasharray="6 5 6 5 3 11 7 11 6 6 3 11 7 7 6 11 7 6 3 12" stroke-dashoffset="13"/>
<polygon points="607.2,211.9 706.4,211.9 706.4,345.9 607.2,345.9" fill="none" stroke="#975e3a" stroke-width="2.72" stroke-linejoin="miter"/>
<polygon points="607.2,211.9 706.4,211.9 706.4,345.9 607.2,345.9" fill="none" stroke="#8a4528" stroke-opacity="0.65" stroke-width="2.42" stroke-dasharray="4 6 3 7 3 9 3 8 4 6 4 9 4 8 3 11 5 8 5 7" stroke-dashoffset="18"/>
<polygon points="607.2,211.9 706.4,211.9 706.4,345.9 607.2,345.9" fill="none" stroke="#b68560" stroke-opacity="0.5" stroke-width="2.02" stroke-dasharray="6 9 3 5 3 5 3 6 6 9 5 7 6 5 5 10 7 12 6 7" stroke-dashoffset="9"/>
<polygon points="609.7,214.3 704.0,214.3 704.0,343.5 609.7,343.5" fill="none" stroke="#9d6440" stroke-width="2.72" stroke-linejoin="miter"/>
<polygon points="609.7,214.3 704.0,214.3 704.0,343.5 609.7,343.5" fill="none" stroke="#823e22" stroke-opacity="0.65" stroke-width="2.42" stroke-dasharray="5 8 5 12 4 12 4 10 5 11 4 10 3 11 5 6 3 10 5 12" stroke-dashoffset="56"/>
<polygon points="609.7,214.3 704.0,214.3 704.0,343.5 609.7,343.5" fill="none" stroke="#bb8b66" stroke-opacity="0.5" stroke-width="2.02" stroke-dasharray="6 11 6 8 6 9 3 10 5 9 6 7 7 5 5 7 7 7 5 12" stroke-dashoffset="22"/>
<polygon points="612.1,216.7 701.6,216.7 701.6,341.1 612.1,341.1" fill="none" stroke="#9f6642" stroke-width="2.72" stroke-linejoin="miter"/>
<polygon points="612.1,216.7 701.6,216.7 701.6,341.1 612.1,341.1" fill="none" stroke="#8a4528" stroke-opacity="0.65" stroke-width="2.42" stroke-dasharray="5 13 4 9 5 9 4 6 5 12 4 9 4 6 4 13 5 7 5 11" stroke-dashoffset="49"/>
<polygon points="612.1,216.7 701.6,216.7 701.6,341.1 612.1,341.1" fill="none" stroke="#c29470" stroke-opacity="0.5" stroke-width="2.02" stroke-dasharray="4 11 7 9 7 10 6 8 4 8 4 6 4 9 5 10 6 7 4 5" stroke-dashoffset="59"/>
<polygon points="614.5,219.1 699.2,219.1 699.2,338.7 614.5,338.7" fill="none" stroke="#925936" stroke-width="2.72" stroke-linejoin="miter"/>
<polygon points="614.5,219.1 699.2,219.1 699.2,338.7 614.5,338.7" fill="none" stroke="#823e22" stroke-opacity="0.65" stroke-width="2.42" stroke-dasharray="3 11 5 13 3 8 4 6 4 10 5 6 3 6 3 13 5 9 4 10" stroke-dashoffset="27"/>
<polygon points="614.5,219.1 699.2,219.1 699.2,338.7 614.5,338.7" fill="none" stroke="#c29470" stroke-opacity="0.5" stroke-width="2.02" stroke-dasharray="6 7 5 5 5 8 4 11 3 5 3 5 7 10 6 12 3 11 3 6" stroke-dashoffset="16"/>
<polygon points="616.9,221.5 696.8,221.5 696.8,336.3 616.9,336.3" fill="none" stroke="#a36a46" stroke-width="2.72" stroke-linejoin="miter"/>
<polygon points="616.9,221.5 696.8,221.5 696.8,336.3 616.9,336.3" fill="none" stroke="#8f4a2e" stroke-opacity="0.65" stroke-width="2.42" stroke-dasharray="5 7 5 12 3 13 3 11 3 9 3 6 4 11 3 6 3 10 5 13" stroke-dashoffset="3"/>
<polygon points="616.9,221.5 696.8,221.5 696.8,336.3 616.9,336.3" fill="none" stroke="#c29470" stroke-opacity="0.5" stroke-width="2.02" stroke-dasharray="4 10 3 8 5 12 3 12 5 10 5 11 3 10 6 11 4 12 4 7" stroke-dashoffset="58"/>
<polygon points="619.4,224.0 694.3,224.0 694.3,333.8 619.4,333.8" fill="none" stroke="#a76e48" stroke-width="2.72" stroke-linejoin="miter"/>
<polygon points="619.4,224.0 694.3,224.0 694.3,333.8 619.4,333.8" fill="none" stroke="#8a4528" stroke-opacity="0.65" stroke-width="2.42" stroke-dasharray="4 9 3 8 3 7 5 11 5 8 4 7 4 6 5 7 4 11 4 9" stroke-dashoffset="30"/>
<polygon points="619.4,224.0 694.3,224.0 694.3,333.8 619.4,333.8" fill="none" stroke="#c29470" stroke-opacity="0.5" stroke-width="2.02" stroke-dasharray="5 7 5 8 3 7 6 7 6 7 5 11 6 8 4 5 5 9 5 7" stroke-dashoffset="16"/>
<polygon points="621.8,226.4 691.9,226.4 691.9,331.4 621.8,331.4" fill="none" stroke="#925936" stroke-width="2.72" stroke-linejoin="miter"/>
<polygon points="621.8,226.4 691.9,226.4 691.9,331.4 621.8,331.4" fill="none" stroke="#8a4528" stroke-opacity="0.65" stroke-width="2.42" stroke-dasharray="4 13 4 7 3 6 5 9 5 13 4 7 4 9 4 12 4 9 3 7" stroke-dashoffset="24"/>
<polygon points="621.8,226.4 691.9,226.4 691.9,331.4 621.8,331.4" fill="none" stroke="#c89b78" stroke-opacity="0.5" stroke-width="2.02" stroke-dasharray="6 7 3 9 4 5 6 10 7 7 6 5 7 9 4 10 6 5 6 8" stroke-dashoffset="17"/>
<polygon points="624.2,228.8 689.5,228.8 689.5,329.0 624.2,329.0" fill="none" stroke="#9f6642" stroke-width="2.72" stroke-linejoin="miter"/>
<polygon points="624.2,228.8 689.5,228.8 689.5,329.0 624.2,329.0" fill="none" stroke="#8f4a2e" stroke-opacity="0.65" stroke-width="2.42" stroke-dasharray="3 8 5 9 5 8 3 7 3 13 4 8 3 8 5 9 5 10 3 6" stroke-dashoffset="4"/>
<polygon points="624.2,228.8 689.5,228.8 689.5,329.0 624.2,329.0" fill="none" stroke="#b68560" stroke-opacity="0.5" stroke-width="2.02" stroke-dasharray="3 10 5 9 6 6 3 11 6 7 5 8 4 10 3 7 5 5 5 12" stroke-dashoffset="33"/>
<polygon points="626.6,231.2 687.1,231.2 687.1,326.6 626.6,326.6" fill="none" stroke="#9d6440" stroke-width="2.72" stroke-linejoin="miter"/>
<polygon points="626.6,231.2 687.1,231.2 687.1,326.6 626.6,326.6" fill="none" stroke="#8a4528" stroke-opacity="0.65" stroke-width="2.42" stroke-dasharray="4 9 4 12 5 6 4 7 5 13 4 6 5 8 3 9 3 9 5 8" stroke-dashoffset="10"/>
<polygon points="626.6,231.2 687.1,231.2 687.1,326.6 626.6,326.6" fill="none" stroke="#c29470" stroke-opacity="0.5" stroke-width="2.02" stroke-dasharray="5 9 7 5 3 6 4 9 3 12 7 8 6 6 5 6 4 5 5 6" stroke-dashoffset="29"/>
<polygon points="629.0,233.6 684.7,233.6 684.7,324.2 629.0,324.2" fill="none" stroke="#925936" stroke-width="2.72" stroke-linejoin="miter"/>
<polygon points="629.0,233.6 684.7,233.6 684.7,324.2 629.0,324.2" fill="none" stroke="#823e22" stroke-opacity="0.65" stroke-width="2.42" stroke-dasharray="3 7 3 12 3 9 3 8 5 13 5 12 3 6 5 12 5 12 5 6" stroke-dashoffset="25"/>
<polygon points="629.0,233.6 684.7,233.6 684.7,324.2 629.0,324.2" fill="none" stroke="#c29470" stroke-opacity="0.5" stroke-width="2.02" stroke-dasharray="5 10 6 8 5 11 7 10 6 5 5 7 5 8 6 5 5 6 7 7" stroke-dashoffset="4"/>
<polygon points="631.5,236.1 682.2,236.1 682.2,321.7 631.5,321.7" fill="none" stroke="#a36a46" stroke-width="2.72" stroke-linejoin="miter"/>
<polygon points="631.5,236.1 682.2,236.1 682.2,321.7 631.5,321.7" fill="none" stroke="#94502f" stroke-opacity="0.65" stroke-width="2.42" stroke-dasharray="3 6 3 8 4 12 4 6 3 6 5 10 5 10 5 6 5 7 4 7" stroke-dashoffset="33"/>
<polygon points="631.5,236.1 682.2,236.1 682.2,321.7 631.5,321.7" fill="none" stroke="#c29470" stroke-opacity="0.5" stroke-width="2.02" stroke-dasharray="6 8 3 9 3 9 5 7 3 5 7 9 3 12 7 7 6 6 7 7" stroke-dashoffset="56"/>
<polygon points="633.9,238.5 679.8,238.5 679.8,319.3 633.9,319.3" fill="none" stroke="#a36a46" stroke-width="2.72" stroke-linejoin="miter"/>
<polygon points="633.9,238.5 679.8,238.5 679.8,319.3 633.9,319.3" fill="none" stroke="#94502f" stroke-opacity="0.65" stroke-width="2.42" stroke-dasharray="5 10 4 9 5 7 5 10 4 9 5 12 3 11 4 10 5 13 4 10" stroke-dashoffset="1"/>
<polygon points="633.9,238.5 679.8,238.5 679.8,319.3 633.9,319.3" fill="none" stroke="#bb8b66" stroke-opacity="0.5" stroke-width="2.02" stroke-dasharray="5 8 4 11 7 11 3 10 4 8 5 10 6 9 5 8 5 5 3 7" stroke-dashoffset="35"/>
<polygon points="636.3,240.9 677.4,240.9 677.4,316.9 636.3,316.9" fill="none" stroke="#9d6440" stroke-width="2.72" stroke-linejoin="miter"/>
<polygon points="636.3,240.9 677.4,240.9 677.4,316.9 636.3,316.9" fill="none" stroke="#823e22" stroke-opacity="0.65" stroke-width="2.42" stroke-dasharray="4 6 5 12 4 11 5 7 5 9 5 8 4 11 5 11 3 9 5 10" stroke-dashoffset="52"/>
<polygon points="636.3,240.9 677.4,240.9 677.4,316.9 636.3,316.9" fill="none" stroke="#c29470" stroke-opacity="0.5" stroke-width="2.02" stroke-dasharray="6 9 4 11 3 5 6 6 6 11 7 7 6 9 7 6 6 12 6 9" stroke-dashoffset="46"/>
<polygon points="638.7,243.3 675.0,243.3 675.0,314.5 638.7,314.5" fill="none" stroke="#a36a46" stroke-width="2.72" stroke-linejoin="miter"/>
<polygon points="638.7,243.3 675.0,243.3 675.0,314.5 638.7,314.5" fill="none" stroke="#823e22" stroke-opacity="0.65" stroke-width="2.42" stroke-dasharray="4 12 5 12 5 11 3 13 4 13 4 8 5 10 3 12 5 12 5 9" stroke-dashoffset="5"/>
<polygon points="638.7,243.3 675.0,243.3 675.0,314.5 638.7,314.5" fill="none" stroke="#c89b78" stroke-opacity="0.5" stroke-width="2.02" stroke-dasharray="5 8 5 8 6 5 3 5 5 12 5 9 7 11 7 11 6 12 5 5" stroke-dashoffset="38"/>
<polygon points="641.1,245.7 672.6,245.7 672.6,312.1 641.1,312.1" fill="none" stroke="#a76e48" stroke-width="2.72" stroke-linejoin="miter"/>
<polygon points="641.1,245.7 672.6,245.7 672.6,312.1 641.1,312.1" fill="none" stroke="#823e22" stroke-opacity="0.65" stroke-width="2.42" stroke-dasharray="4 6 5 7 5 9 3 12 4 12 5 8 3 12 4 12 4 11 5 7" stroke-dashoffset="10"/>
<polygon points="641.1,245.7 672.6,245.7 672.6,312.1 641.1,312.1" fill="none" stroke="#c89b78" stroke-opacity="0.5" stroke-width="2.02" stroke-dasharray="5 10 3 9 7 7 3 9 5 11 4 9 7 8 7 8 6 7 3 6" stroke-dashoffset="22"/>
<polygon points="643.5,248.2 670.1,248.2 670.1,309.6 643.5,309.6" fill="none" stroke="#9f6642" stroke-width="2.72" stroke-linejoin="miter"/>
<polygon points="643.5,248.2 670.1,248.2 670.1,309.6 643.5,309.6" fill="none" stroke="#8a4528" stroke-opacity="0.65" stroke-width="2.42" stroke-dasharray="5 12 3 6 4 6 4 12 3 6 5 6 3 8 4 10 5 8 5 9" stroke-dashoffset="26"/>
<polygon points="643.5,248.2 670.1,248.2 670.1,309.6 643.5,309.6" fill="none" stroke="#c29470" stroke-opacity="0.5" stroke-width="2.02" stroke-dasharray="4 7 7 6 3 6 3 7 7 12 6 11 3 5 7 10 4 8 5 9" stroke-dashoffset="10"/>
<polygon points="646.0,250.6 667.7,250.6 667.7,307.2 646.0,307.2" fill="none" stroke="#9d6440" stroke-width="2.72" stroke-linejoin="miter"/>
<polygon points="646.0,250.6 667.7,250.6 667.7,307.2 646.0,307.2" fill="none" stroke="#823e22" stroke-opacity="0.65" stroke-width="2.42" stroke-dasharray="5 7 5 7 4 9 4 12 3 6 3 12 5 6 4 6 5 9 3 9" stroke-dashoffset="2"/>
<polygon points="646.0,250.6 667.7,250.6 667.7,307.2 646.0,307.2" fill="none" stroke="#bb8b66" stroke-opacity="0.5" stroke-width="2.02" stroke-dasharray="7 7 5 5 6 9 6 9 6 6 4 11 7 8 6 9 6 12 3 8" stroke-dashoffset="5"/>
<polygon points="648.4,253.0 665.3,253.0 665.3,304.8 648.4,304.8" fill="none" stroke="#975e3a" stroke-width="2.72" stroke-linejoin="miter"/>
<polygon points="648.4,253.0 665.3,253.0 665.3,304.8 648.4,304.8" fill="none" stroke="#8f4a2e" stroke-opacity="0.65" stroke-width="2.42" stroke-dasharray="4 12 3 6 4 12 5 11 3 11 5 12 4 12 5 7 3 12 4 9" stroke-dashoffset="24"/>
<polygon points="648.4,253.0 665.3,253.0 665.3,304.8 648.4,304.8" fill="none" stroke="#bb8b66" stroke-opacity="0.5" stroke-width="2.02" stroke-dasharray="6 9 5 8 6 5 5 5 5 7 4 7 3 8 5 7 7 12 6 8" stroke-dashoffset="10"/>
<polygon points="650.8,255.4 662.9,255.4 662.9,302.4 650.8,302.4" fill="none" stroke="#a36a46" stroke-width="2.72" stroke-linejoin="miter"/>
<polygon points="650.8,255.4 662.9,255.4 662.9,302.4 650.8,302.4" fill="none" stroke="#823e22" stroke-opacity="0.65" stroke-width="2.42" stroke-dasharray="3 12 4 9 4 13 5 9 3 13 5 8 5 10 5 13 5 11 5 9" stroke-dashoffset="25"/>
<polygon points="650.8,255.4 662.9,255.4 662.9,302.4 650.8,302.4" fill="none" stroke="#bb8b66" stroke-opacity="0.5" stroke-width="2.02" stroke-dasharray="4 6 7 6 7 9 6 5 7 7 5 5 6 6 4 8 5 8 3 6" stroke-dashoffset="35"/>
<polygon points="653.2,257.8 660.5,257.8 660.5,300.0 653.2,300.0" fill="none" stroke="#a36a46" stroke-width="2.72" stroke-linejoin="miter"/>
<polygon points="653.2,257.8 660.5,257.8 660.5,300.0 653.2,300.0" fill="none" stroke="#823e22" stroke-opacity="0.65" stroke-width="2.42" stroke-dasharray="3 7 5 10 3 9 4 8 5 12 4 11 4 13 5 8 4 8 3 11" stroke-dashoffset="43"/>
<polygon points="653.2,257.8 660.5,257.8 660.5,300.0 653.2,300.0" fill="none" stroke="#c89b78" stroke-opacity="0.5" stroke-width="2.02" stroke-dasharray="6 5 6 8 6 10 3 7 5 6 5 8 3 11 3 7 6 8 5 7" stroke-dashoffset="24"/>
<polygon points="655.6,260.2 658.0,260.2 658.0,297.6 655.6,297.6" fill="none" stroke="#a76e48" stroke-width="2.72" stroke-linejoin="miter"/>
<polygon points="655.6,260.2 658.0,260.2 658.0,297.6 655.6,297.6" fill="none" stroke="#8a4528" stroke-opacity="0.65" stroke-width="2.42" stroke-dasharray="5 10 5 8 5 9 5 13 5 10 4 11 3 7 5 10 3 6 3 7" stroke-dashoffset="2"/>
<polygon points="655.6,260.2 658.0,260.2 658.0,297.6 655.6,297.6" fill="none" stroke="#c89b78" stroke-opacity="0.5" stroke-width="2.02" stroke-dasharray="4 10 3 11 6 8 5 6 5 11 6 10 7 12 7 5 4 11 7 7" stroke-dashoffset="31"/>
<polygon points="504.4,109.0 809.3,109.0 809.3,482.6 665.8,482.6 665.8,448.8 504.4,448.8" fill="none" stroke="#3a1c0e" stroke-opacity="0.32" stroke-width="0.6"/>
<polygon points="506.8,111.4 806.9,111.4 806.9,480.2 668.2,480.2 668.2,446.4 506.8,446.4" fill="none" stroke="#3a1c0e" stroke-opacity="0.25" stroke-width="0.6"/>
<polygon points="509.2,113.8 804.5,113.8 804.5,477.8 670.6,477.8 670.6,444.0 509.2,444.0" fill="none" stroke="#3a1c0e" stroke-opacity="0.4" stroke-width="0.6"/>
<polygon points="511.7,116.3 802.0,116.3 802.0,475.3 673.1,475.3 673.1,441.5 511.7,441.5" fill="none" stroke="#3a1c0e" stroke-opacity="0.32" stroke-width="0.6"/>
<polygon points="514.1,118.7 799.6,118.7 799.6,472.9 675.5,472.9 675.5,439.1 514.1,439.1" fill="none" stroke="#3a1c0e" stroke-opacity="0.32" stroke-width="0.6"/>
<polygon points="516.5,121.1 797.2,121.1 797.2,470.5 677.9,470.5 677.9,436.7 516.5,436.7" fill="none" stroke="#3a1c0e" stroke-opacity="0.32" stroke-width="0.6"/>
<polygon points="518.9,123.5 794.8,123.5 794.8,468.1 680.3,468.1 680.3,434.3 518.9,434.3" fill="none" stroke="#3a1c0e" stroke-opacity="0.4" stroke-width="0.6"/>
<polygon points="521.3,125.9 792.4,125.9 792.4,465.7 682.7,465.7 682.7,431.9 521.3,431.9" fill="none" stroke="#3a1c0e" stroke-opacity="0.32" stroke-width="0.6"/>
<polygon points="523.8,128.4 789.9,128.4 789.9,463.2 685.2,463.2 685.2,429.4 523.8,429.4" fill="none" stroke="#3a1c0e" stroke-opacity="0.7" stroke-width="0.65"/>
<polygon points="526.2,130.8 787.5,130.8 787.5,460.8 687.6,460.8 687.6,427.0 526.2,427.0" fill="none" stroke="#3a1c0e" stroke-opacity="0.7" stroke-width="0.65"/>
<polygon points="528.6,133.2 785.1,133.2 785.1,458.4 690.0,458.4 690.0,424.6 528.6,424.6" fill="none" stroke="#3a1c0e" stroke-opacity="0.25" stroke-width="0.6"/>
<polygon points="531.0,135.6 782.7,135.6 782.7,456.0 692.4,456.0 692.4,422.2 531.0,422.2" fill="none" stroke="#3a1c0e" stroke-opacity="0.32" stroke-width="0.6"/>
<polygon points="533.4,138.0 780.3,138.0 780.3,453.6 694.8,453.6 694.8,419.8 533.4,419.8" fill="none" stroke="#3a1c0e" stroke-opacity="0.4" stroke-width="0.6"/>
<polygon points="535.9,140.5 777.8,140.5 777.8,451.1 697.3,451.1 697.3,417.3 535.9,417.3" fill="none" stroke="#3a1c0e" stroke-opacity="0.4" stroke-width="0.6"/>
<polygon points="538.3,142.9 775.4,142.9 775.4,448.7 699.7,448.7 699.7,414.9 538.3,414.9" fill="none" stroke="#3a1c0e" stroke-opacity="0.48" stroke-width="0.6"/>
<polygon points="540.7,145.3 773.0,145.3 773.0,446.3 702.1,446.3 702.1,412.5 540.7,412.5" fill="none" stroke="#3a1c0e" stroke-opacity="0.25" stroke-width="0.6"/>
<polygon points="543.1,147.7 770.6,147.7 770.6,443.9 704.5,443.9 704.5,410.1 543.1,410.1" fill="none" stroke="#3a1c0e" stroke-opacity="0.32" stroke-width="0.6"/>
<polygon points="545.5,150.1 768.2,150.1 768.2,441.5 706.9,441.5 706.9,407.7 545.5,407.7" fill="none" stroke="#3a1c0e" stroke-opacity="0.4" stroke-width="0.6"/>
<polygon points="548.0,152.6 765.7,152.6 765.7,439.0 709.4,439.0 709.4,405.2 548.0,405.2" fill="none" stroke="#3a1c0e" stroke-opacity="0.7" stroke-width="0.65"/>
<polygon points="550.4,155.0 763.3,155.0 763.3,436.6 711.8,436.6 711.8,402.8 550.4,402.8" fill="none" stroke="#3a1c0e" stroke-opacity="0.7" stroke-width="0.65"/>
<polygon points="552.8,157.4 760.9,157.4 760.9,434.2 714.2,434.2 714.2,400.4 552.8,400.4" fill="none" stroke="#3a1c0e" stroke-opacity="0.32" stroke-width="0.6"/>
<polygon points="555.2,159.8 758.5,159.8 758.5,431.8 716.6,431.8 716.6,398.0 555.2,398.0" fill="none" stroke="#3a1c0e" stroke-opacity="0.32" stroke-width="0.6"/>
<polygon points="557.6,162.2 756.1,162.2 756.1,429.4 719.0,429.4 719.0,395.6 557.6,395.6" fill="none" stroke="#3a1c0e" stroke-opacity="0.48" stroke-width="0.6"/>
<polygon points="560.1,164.7 753.6,164.7 753.6,426.9 721.5,426.9 721.5,393.1 560.1,393.1" fill="none" stroke="#3a1c0e" stroke-opacity="0.48" stroke-width="0.6"/>
<polygon points="562.5,167.1 751.2,167.1 751.2,424.5 723.9,424.5 723.9,390.7 562.5,390.7" fill="none" stroke="#3a1c0e" stroke-opacity="0.32" stroke-width="0.6"/>
<polygon points="564.9,169.5 748.8,169.5 748.8,422.1 726.3,422.1 726.3,388.3 564.9,388.3" fill="none" stroke="#3a1c0e" stroke-opacity="0.32" stroke-width="0.6"/>
<polygon points="567.3,171.9 746.4,171.9 746.4,419.7 728.7,419.7 728.7,385.9 567.3,385.9" fill="none" stroke="#3a1c0e" stroke-opacity="0.25" stroke-width="0.6"/>
<polygon points="569.7,174.3 744.0,174.3 744.0,417.3 731.1,417.3 731.1,383.5 569.7,383.5" fill="none" stroke="#3a1c0e" stroke-opacity="0.48" stroke-width="0.6"/>
<polygon points="572.2,176.8 741.5,176.8 741.5,414.8 733.6,414.8 733.6,381.0 572.2,381.0" fill="none" stroke="#3a1c0e" stroke-opacity="0.7" stroke-width="0.65"/>
<polygon points="574.6,179.2 739.1,179.2 739.1,412.4 736.0,412.4 736.0,378.6 574.6,378.6" fill="none" stroke="#3a1c0e" stroke-opacity="0.7" stroke-width="0.65"/>
<polygon points="577.0,181.6 736.7,181.6 736.7,376.2 577.0,376.2" fill="none" stroke="#3a1c0e" stroke-opacity="0.32" stroke-width="0.6"/>
<polygon points="579.4,184.0 734.3,184.0 734.3,373.8 579.4,373.8" fill="none" stroke="#3a1c0e" stroke-opacity="0.4" stroke-width="0.6"/>
<polygon points="581.8,186.4 731.9,186.4 731.9,371.4 581.8,371.4" fill="none" stroke="#3a1c0e" stroke-opacity="0.4" stroke-width="0.6"/>
<polygon points="584.3,188.9 729.4,188.9 729.4,368.9 584.3,368.9" fill="none" stroke="#3a1c0e" stroke-opacity="0.32" stroke-width="0.6"/>
<polygon points="586.7,191.3 727.0,191.3 727.0,366.5 586.7,366.5" fill="none" stroke="#3a1c0e" stroke-opacity="0.32" stroke-width="0.6"/>
<polygon points="589.1,193.7 724.6,193.7 724.6,364.1 589.1,364.1" fill="none" stroke="#3a1c0e" stroke-opacity="0.32" stroke-width="0.6"/>
<polygon points="591.5,196.1 722.2,196.1 722.2,361.7 591.5,361.7" fill="none" stroke="#3a1c0e" stroke-opacity="0.4" stroke-width="0.6"/>
<polygon points="593.9,198.5 719.8,198.5 719.8,359.3 593.9,359.3" fill="none" stroke="#3a1c0e" stroke-opacity="0.25" stroke-width="0.6"/>
<polygon points="596.4,201.0 717.3,201.0 717.3,356.8 596.4,356.8" fill="none" stroke="#3a1c0e" stroke-opacity="0.7" stroke-width="0.65"/>
<polygon points="598.8,203.4 714.9,203.4 714.9,354.4 598.8,354.4" fill="none" stroke="#3a1c0e" stroke-opacity="0.7" stroke-width="0.65"/>
<polygon points="601.2,205.8 712.5,205.8 712.5,352.0 601.2,352.0" fill="none" stroke="#3a1c0e" stroke-opacity="0.48" stroke-width="0.6"/>
<polygon points="603.6,208.2 710.1,208.2 710.1,349.6 603.6,349.6" fill="none" stroke="#3a1c0e" stroke-opacity="0.32" stroke-width="0.6"/>
<polygon points="606.0,210.6 707.7,210.6 707.7,347.2 606.0,347.2" fill="none" stroke="#3a1c0e" stroke-opacity="0.32" stroke-width="0.6"/>
<polygon points="608.5,213.1 705.2,213.1 705.2,344.7 608.5,344.7" fill="none" stroke="#3a1c0e" stroke-opacity="0.48" stroke-width="0.6"/>
<polygon points="610.9,215.5 702.8,215.5 702.8,342.3 610.9,342.3" fill="none" stroke="#3a1c0e" stroke-opacity="0.48" stroke-width="0.6"/>
<polygon points="613.3,217.9 700.4,217.9 700.4,339.9 613.3,339.9" fill="none" stroke="#3a1c0e" stroke-opacity="0.32" stroke-width="0.6"/>
<polygon points="615.7,220.3 698.0,220.3 698.0,337.5 615.7,337.5" fill="none" stroke="#3a1c0e" stroke-opacity="0.25" stroke-width="0.6"/>
<polygon points="618.1,222.7 695.6,222.7 695.6,335.1 618.1,335.1" fill="none" stroke="#3a1c0e" stroke-opacity="0.4" stroke-width="0.6"/>
<polygon points="620.6,225.2 693.1,225.2 693.1,332.6 620.6,332.6" fill="none" stroke="#3a1c0e" stroke-opacity="0.7" stroke-width="0.65"/>
<polygon points="623.0,227.6 690.7,227.6 690.7,330.2 623.0,330.2" fill="none" stroke="#3a1c0e" stroke-opacity="0.7" stroke-width="0.65"/>
<polygon points="625.4,230.0 688.3,230.0 688.3,327.8 625.4,327.8" fill="none" stroke="#3a1c0e" stroke-opacity="0.25" stroke-width="0.6"/>
<polygon points="627.8,232.4 685.9,232.4 685.9,325.4 627.8,325.4" fill="none" stroke="#3a1c0e" stroke-opacity="0.4" stroke-width="0.6"/>
<polygon points="630.2,234.8 683.5,234.8 683.5,323.0 630.2,323.0" fill="none" stroke="#3a1c0e" stroke-opacity="0.48" stroke-width="0.6"/>
<polygon points="632.7,237.3 681.0,237.3 681.0,320.5 632.7,320.5" fill="none" stroke="#3a1c0e" stroke-opacity="0.32" stroke-width="0.6"/>
<polygon points="635.1,239.7 678.6,239.7 678.6,318.1 635.1,318.1" fill="none" stroke="#3a1c0e" stroke-opacity="0.25" stroke-width="0.6"/>
<polygon points="637.5,242.1 676.2,242.1 676.2,315.7 637.5,315.7" fill="none" stroke="#3a1c0e" stroke-opacity="0.25" stroke-width="0.6"/>
<polygon points="639.9,244.5 673.8,244.5 673.8,313.3 639.9,313.3" fill="none" stroke="#3a1c0e" stroke-opacity="0.4" stroke-width="0.6"/>
<polygon points="642.3,246.9 671.4,246.9 671.4,310.9 642.3,310.9" fill="none" stroke="#3a1c0e" stroke-opacity="0.4" stroke-width="0.6"/>
<polygon points="644.8,249.4 668.9,249.4 668.9,308.4 644.8,308.4" fill="none" stroke="#3a1c0e" stroke-opacity="0.7" stroke-width="0.65"/>
<polygon points="647.2,251.8 666.5,251.8 666.5,306.0 647.2,306.0" fill="none" stroke="#3a1c0e" stroke-opacity="0.7" stroke-width="0.65"/>
<polygon points="649.6,254.2 664.1,254.2 664.1,303.6 649.6,303.6" fill="none" stroke="#3a1c0e" stroke-opacity="0.32" stroke-width="0.6"/>
<polygon points="652.0,256.6 661.7,256.6 661.7,301.2 652.0,301.2" fill="none" stroke="#3a1c0e" stroke-opacity="0.25" stroke-width="0.6"/>
<polygon points="654.4,259.0 659.3,259.0 659.3,298.8 654.4,298.8" fill="none" stroke="#3a1c0e" stroke-opacity="0.4" stroke-width="0.6"/>
<line x1="809.6" y1="122.2" x2="830.8" y2="122.2" stroke="#925936" stroke-width="2.6"/>
<line x1="809.6" y1="122.2" x2="830.8" y2="122.2" stroke="#cf9a6a" stroke-opacity="0.5" stroke-width="2.4" stroke-dasharray="4 6 5 7 7 3"/>
<line x1="809.6" y1="123.4" x2="830.8" y2="123.4" stroke="#3d1d0e" stroke-opacity="0.3" stroke-width="0.6"/>
<line x1="809.6" y1="124.6" x2="830.8" y2="124.6" stroke="#975e3a" stroke-width="2.6"/>
<line x1="809.6" y1="124.6" x2="830.8" y2="124.6" stroke="#7e4526" stroke-opacity="0.5" stroke-width="2.4" stroke-dasharray="3 4 4 4 7 7"/>
<line x1="809.6" y1="125.8" x2="830.8" y2="125.8" stroke="#3d1d0e" stroke-opacity="0.5" stroke-width="0.6"/>
<line x1="809.6" y1="127.0" x2="830.8" y2="127.0" stroke="#a76e48" stroke-width="2.6"/>
<line x1="809.6" y1="127.0" x2="830.8" y2="127.0" stroke="#cf9a6a" stroke-opacity="0.5" stroke-width="2.4" stroke-dasharray="5 3 5 4 7 7"/>
<line x1="809.6" y1="128.2" x2="830.8" y2="128.2" stroke="#3d1d0e" stroke-opacity="0.15" stroke-width="0.6"/>
<line x1="809.6" y1="129.5" x2="830.8" y2="129.5" stroke="#9f6642" stroke-width="2.6"/>
<line x1="809.6" y1="129.5" x2="830.8" y2="129.5" stroke="#8a4c2b" stroke-opacity="0.5" stroke-width="2.4" stroke-dasharray="5 4 5 4 5 3"/>
<line x1="809.6" y1="130.7" x2="830.8" y2="130.7" stroke="#3d1d0e" stroke-opacity="0.5" stroke-width="0.6"/>
<line x1="809.6" y1="131.9" x2="830.8" y2="131.9" stroke="#a76e48" stroke-width="2.6"/>
<line x1="809.6" y1="131.9" x2="830.8" y2="131.9" stroke="#cf9a6a" stroke-opacity="0.5" stroke-width="2.4" stroke-dasharray="5 6 4 6 4 4"/>
<line x1="809.6" y1="133.1" x2="830.8" y2="133.1" stroke="#3d1d0e" stroke-opacity="0.15" stroke-width="0.6"/>
<line x1="809.6" y1="134.3" x2="830.8" y2="134.3" stroke="#a36a46" stroke-width="2.6"/>
<line x1="809.6" y1="134.3" x2="830.8" y2="134.3" stroke="#8a4c2b" stroke-opacity="0.5" stroke-width="2.4" stroke-dasharray="5 6 3 6 4 5"/>
<line x1="809.6" y1="135.5" x2="830.8" y2="135.5" stroke="#3d1d0e" stroke-opacity="0.5" stroke-width="0.6"/>
<line x1="809.6" y1="136.7" x2="830.8" y2="136.7" stroke="#a36a46" stroke-width="2.6"/>
<line x1="809.6" y1="136.7" x2="830.8" y2="136.7" stroke="#7e4526" stroke-opacity="0.5" stroke-width="2.4" stroke-dasharray="7 6 5 5 6 5"/>
<line x1="809.6" y1="137.9" x2="830.8" y2="137.9" stroke="#3d1d0e" stroke-opacity="0.5" stroke-width="0.6"/>
<line x1="809.6" y1="139.1" x2="830.8" y2="139.1" stroke="#a36a46" stroke-width="2.6"/>
<line x1="809.6" y1="139.1" x2="830.8" y2="139.1" stroke="#8a4c2b" stroke-opacity="0.5" stroke-width="2.4" stroke-dasharray="5 6 4 4 4 3"/>
<line x1="809.6" y1="140.3" x2="830.8" y2="140.3" stroke="#3d1d0e" stroke-opacity="0.5" stroke-width="0.6"/>
<line x1="809.6" y1="141.6" x2="830.8" y2="141.6" stroke="#925936" stroke-width="2.6"/>
<line x1="809.6" y1="141.6" x2="830.8" y2="141.6" stroke="#cf9a6a" stroke-opacity="0.5" stroke-width="2.4" stroke-dasharray="4 6 7 7 7 6"/>
<line x1="809.6" y1="142.8" x2="830.8" y2="142.8" stroke="#3d1d0e" stroke-opacity="0.5" stroke-width="0.6"/>
<line x1="809.6" y1="144.0" x2="830.8" y2="144.0" stroke="#9f6642" stroke-width="2.6"/>
<line x1="809.6" y1="144.0" x2="830.8" y2="144.0" stroke="#8a4c2b" stroke-opacity="0.5" stroke-width="2.4" stroke-dasharray="4 6 6 6 6 7"/>
<line x1="809.6" y1="145.2" x2="830.8" y2="145.2" stroke="#3d1d0e" stroke-opacity="0.3" stroke-width="0.6"/>
<line x1="809.6" y1="146.4" x2="830.8" y2="146.4" stroke="#9d6440" stroke-width="2.6"/>
<line x1="809.6" y1="146.4" x2="830.8" y2="146.4" stroke="#7e4526" stroke-opacity="0.5" stroke-width="2.4" stroke-dasharray="4 7 7 6 6 5"/>
<line x1="809.6" y1="147.6" x2="830.8" y2="147.6" stroke="#3d1d0e" stroke-opacity="0.15" stroke-width="0.6"/>
<line x1="809.6" y1="148.8" x2="830.8" y2="148.8" stroke="#9f6642" stroke-width="2.6"/>
<line x1="809.6" y1="148.8" x2="830.8" y2="148.8" stroke="#8a4c2b" stroke-opacity="0.5" stroke-width="2.4" stroke-dasharray="3 7 6 5 4 4"/>
<line x1="809.6" y1="150.0" x2="830.8" y2="150.0" stroke="#3d1d0e" stroke-opacity="0.5" stroke-width="0.6"/>
<line x1="809.6" y1="151.2" x2="830.8" y2="151.2" stroke="#925936" stroke-width="2.6"/>
<line x1="809.6" y1="151.2" x2="830.8" y2="151.2" stroke="#cf9a6a" stroke-opacity="0.5" stroke-width="2.4" stroke-dasharray="5 4 7 4 6 6"/>
<line x1="809.6" y1="152.4" x2="830.8" y2="152.4" stroke="#3d1d0e" stroke-opacity="0.3" stroke-width="0.6"/>
<line x1="809.6" y1="153.7" x2="830.8" y2="153.7" stroke="#9d6440" stroke-width="2.6"/>
<line x1="809.6" y1="153.7" x2="830.8" y2="153.7" stroke="#7e4526" stroke-opacity="0.5" stroke-width="2.4" stroke-dasharray="7 3 5 3 6 7"/>
<line x1="809.6" y1="154.9" x2="830.8" y2="154.9" stroke="#3d1d0e" stroke-opacity="0.5" stroke-width="0.6"/>
<line x1="809.6" y1="156.1" x2="830.8" y2="156.1" stroke="#a36a46" stroke-width="2.6"/>
<line x1="809.6" y1="156.1" x2="830.8" y2="156.1" stroke="#8a4c2b" stroke-opacity="0.5" stroke-width="2.4" stroke-dasharray="3 7 7 3 6 7"/>
<line x1="809.6" y1="157.3" x2="830.8" y2="157.3" stroke="#3d1d0e" stroke-opacity="0.5" stroke-width="0.6"/>
<line x1="809.6" y1="158.5" x2="830.8" y2="158.5" stroke="#9d6440" stroke-width="2.6"/>
<line x1="809.6" y1="158.5" x2="830.8" y2="158.5" stroke="#cf9a6a" stroke-opacity="0.5" stroke-width="2.4" stroke-dasharray="4 5 3 5 3 3"/>
<line x1="809.6" y1="159.7" x2="830.8" y2="159.7" stroke="#3d1d0e" stroke-opacity="0.3" stroke-width="0.6"/>
<line x1="809.6" y1="160.9" x2="830.8" y2="160.9" stroke="#925936" stroke-width="2.6"/>
<line x1="809.6" y1="160.9" x2="830.8" y2="160.9" stroke="#7e4526" stroke-opacity="0.5" stroke-width="2.4" stroke-dasharray="6 5 5 3 4 6"/>
<line x1="809.6" y1="162.1" x2="830.8" y2="162.1" stroke="#3d1d0e" stroke-opacity="0.5" stroke-width="0.6"/>
<line x1="809.6" y1="163.3" x2="830.8" y2="163.3" stroke="#a76e48" stroke-width="2.6"/>
<line x1="809.6" y1="163.3" x2="830.8" y2="163.3" stroke="#8a4c2b" stroke-opacity="0.5" stroke-width="2.4" stroke-dasharray="7 4 6 3 5 3"/>
<line x1="809.6" y1="164.5" x2="830.8" y2="164.5" stroke="#3d1d0e" stroke-opacity="0.3" stroke-width="0.6"/>
<line x1="809.6" y1="165.8" x2="830.8" y2="165.8" stroke="#a36a46" stroke-width="2.6"/>
<line x1="809.6" y1="165.8" x2="830.8" y2="165.8" stroke="#7e4526" stroke-opacity="0.5" stroke-width="2.4" stroke-dasharray="3 6 3 7 7 5"/>
<line x1="809.6" y1="167.0" x2="830.8" y2="167.0" stroke="#3d1d0e" stroke-opacity="0.15" stroke-width="0.6"/>
<line x1="809.6" y1="168.2" x2="830.8" y2="168.2" stroke="#975e3a" stroke-width="2.6"/>
<line x1="809.6" y1="168.2" x2="830.8" y2="168.2" stroke="#7e4526" stroke-opacity="0.5" stroke-width="2.4" stroke-dasharray="6 3 4 6 5 4"/>
<line x1="809.6" y1="169.4" x2="830.8" y2="169.4" stroke="#3d1d0e" stroke-opacity="0.5" stroke-width="0.6"/>
<line x1="809.6" y1="170.6" x2="830.8" y2="170.6" stroke="#a76e48" stroke-width="2.6"/>
<line x1="809.6" y1="170.6" x2="830.8" y2="170.6" stroke="#8a4c2b" stroke-opacity="0.5" stroke-width="2.4" stroke-dasharray="5 7 6 3 7 6"/>
<line x1="809.6" y1="171.8" x2="830.8" y2="171.8" stroke="#3d1d0e" stroke-opacity="0.5" stroke-width="0.6"/>
<line x1="809.6" y1="173.0" x2="830.8" y2="173.0" stroke="#a76e48" stroke-width="2.6"/>
<line x1="809.6" y1="173.0" x2="830.8" y2="173.0" stroke="#8a4c2b" stroke-opacity="0.5" stroke-width="2.4" stroke-dasharray="4 3 3 3 4 7"/>
<line x1="809.6" y1="174.2" x2="830.8" y2="174.2" stroke="#3d1d0e" stroke-opacity="0.15" stroke-width="0.6"/>
<line x1="809.6" y1="175.4" x2="830.8" y2="175.4" stroke="#925936" stroke-width="2.6"/>
<line x1="809.6" y1="175.4" x2="830.8" y2="175.4" stroke="#7e4526" stroke-opacity="0.5" stroke-width="2.4" stroke-dasharray="6 3 3 3 4 3"/>
<line x1="809.6" y1="176.6" x2="830.8" y2="176.6" stroke="#3d1d0e" stroke-opacity="0.3" stroke-width="0.6"/>
<line x1="809.6" y1="177.9" x2="830.8" y2="177.9" stroke="#a76e48" stroke-width="2.6"/>
<line x1="809.6" y1="177.9" x2="830.8" y2="177.9" stroke="#7e4526" stroke-opacity="0.5" stroke-width="2.4" stroke-dasharray="7 3 6 6 3 7"/>
<line x1="809.6" y1="179.1" x2="830.8" y2="179.1" stroke="#3d1d0e" stroke-opacity="0.15" stroke-width="0.6"/>
<line x1="809.6" y1="180.3" x2="830.8" y2="180.3" stroke="#a36a46" stroke-width="2.6"/>
<line x1="809.6" y1="180.3" x2="830.8" y2="180.3" stroke="#7e4526" stroke-opacity="0.5" stroke-width="2.4" stroke-dasharray="3 4 7 6 4 5"/>
<line x1="809.6" y1="181.5" x2="830.8" y2="181.5" stroke="#3d1d0e" stroke-opacity="0.15" stroke-width="0.6"/>
<line x1="809.6" y1="182.7" x2="830.8" y2="182.7" stroke="#a76e48" stroke-width="2.6"/>
<line x1="809.6" y1="182.7" x2="830.8" y2="182.7" stroke="#cf9a6a" stroke-opacity="0.5" stroke-width="2.4" stroke-dasharray="3 6 7 5 4 6"/>
<line x1="809.6" y1="183.9" x2="830.8" y2="183.9" stroke="#3d1d0e" stroke-opacity="0.15" stroke-width="0.6"/>
<line x1="809.6" y1="185.1" x2="830.8" y2="185.1" stroke="#9f6642" stroke-width="2.6"/>
<line x1="809.6" y1="185.1" x2="830.8" y2="185.1" stroke="#8a4c2b" stroke-opacity="0.5" stroke-width="2.4" stroke-dasharray="6 3 4 5 6 5"/>
<line x1="809.6" y1="186.3" x2="830.8" y2="186.3" stroke="#3d1d0e" stroke-opacity="0.3" stroke-width="0.6"/>
<line x1="809.6" y1="187.5" x2="830.8" y2="187.5" stroke="#a76e48" stroke-width="2.6"/>
<line x1="809.6" y1="187.5" x2="830.8" y2="187.5" stroke="#8a4c2b" stroke-opacity="0.5" stroke-width="2.4" stroke-dasharray="4 5 4 6 5 3"/>
<line x1="809.6" y1="188.7" x2="830.8" y2="188.7" stroke="#3d1d0e" stroke-opacity="0.5" stroke-width="0.6"/>
<line x1="809.6" y1="190.0" x2="830.8" y2="190.0" stroke="#a36a46" stroke-width="2.6"/>
<line x1="809.6" y1="190.0" x2="830.8" y2="190.0" stroke="#8a4c2b" stroke-opacity="0.5" stroke-width="2.4" stroke-dasharray="7 4 3 5 4 5"/>
<line x1="809.6" y1="191.2" x2="830.8" y2="191.2" stroke="#3d1d0e" stroke-opacity="0.3" stroke-width="0.6"/>
<line x1="809.6" y1="192.4" x2="830.8" y2="192.4" stroke="#9f6642" stroke-width="2.6"/>
<line x1="809.6" y1="192.4" x2="830.8" y2="192.4" stroke="#8a4c2b" stroke-opacity="0.5" stroke-width="2.4" stroke-dasharray="4 4 6 5 5 6"/>
<line x1="809.6" y1="193.6" x2="830.8" y2="193.6" stroke="#3d1d0e" stroke-opacity="0.3" stroke-width="0.6"/>
<line x1="809.6" y1="194.8" x2="830.8" y2="194.8" stroke="#9d6440" stroke-width="2.6"/>
<line x1="809.6" y1="194.8" x2="830.8" y2="194.8" stroke="#7e4526" stroke-opacity="0.5" stroke-width="2.4" stroke-dasharray="3 7 4 4 7 4"/>
<line x1="809.6" y1="196.0" x2="830.8" y2="196.0" stroke="#3d1d0e" stroke-opacity="0.3" stroke-width="0.6"/>
<line x1="809.6" y1="197.2" x2="830.8" y2="197.2" stroke="#975e3a" stroke-width="2.6"/>
<line x1="809.6" y1="197.2" x2="830.8" y2="197.2" stroke="#cf9a6a" stroke-opacity="0.5" stroke-width="2.4" stroke-dasharray="6 3 5 7 6 3"/>
<line x1="809.6" y1="198.4" x2="830.8" y2="198.4" stroke="#3d1d0e" stroke-opacity="0.5" stroke-width="0.6"/>
<line x1="809.6" y1="199.6" x2="830.8" y2="199.6" stroke="#a76e48" stroke-width="2.6"/>
<line x1="809.6" y1="199.6" x2="830.8" y2="199.6" stroke="#cf9a6a" stroke-opacity="0.5" stroke-width="2.4" stroke-dasharray="5 7 4 4 5 6"/>
<line x1="809.6" y1="200.8" x2="830.8" y2="200.8" stroke="#3d1d0e" stroke-opacity="0.5" stroke-width="0.6"/>
<line x1="809.6" y1="202.1" x2="830.8" y2="202.1" stroke="#925936" stroke-width="2.6"/>
<line x1="809.6" y1="202.1" x2="830.8" y2="202.1" stroke="#cf9a6a" stroke-opacity="0.5" stroke-width="2.4" stroke-dasharray="4 4 4 6 3 3"/>
<line x1="809.6" y1="203.3" x2="830.8" y2="203.3" stroke="#3d1d0e" stroke-opacity="0.3" stroke-width="0.6"/>
<line x1="809.6" y1="204.5" x2="830.8" y2="204.5" stroke="#975e3a" stroke-width="2.6"/>
<line x1="809.6" y1="204.5" x2="830.8" y2="204.5" stroke="#cf9a6a" stroke-opacity="0.5" stroke-width="2.4" stroke-dasharray="7 7 6 3 3 4"/>
<line x1="809.6" y1="205.7" x2="830.8" y2="205.7" stroke="#3d1d0e" stroke-opacity="0.3" stroke-width="0.6"/>
<line x1="809.6" y1="206.9" x2="830.8" y2="206.9" stroke="#9f6642" stroke-width="2.6"/>
<line x1="809.6" y1="206.9" x2="830.8" y2="206.9" stroke="#7e4526" stroke-opacity="0.5" stroke-width="2.4" stroke-dasharray="6 5 6 3 3 4"/>
<line x1="809.6" y1="208.1" x2="830.8" y2="208.1" stroke="#3d1d0e" stroke-opacity="0.15" stroke-width="0.6"/>
<line x1="809.6" y1="209.3" x2="830.8" y2="209.3" stroke="#a36a46" stroke-width="2.6"/>
<line x1="809.6" y1="209.3" x2="830.8" y2="209.3" stroke="#cf9a6a" stroke-opacity="0.5" stroke-width="2.4" stroke-dasharray="7 5 3 7 7 5"/>
<line x1="809.6" y1="210.5" x2="830.8" y2="210.5" stroke="#3d1d0e" stroke-opacity="0.15" stroke-width="0.6"/>
<line x1="809.6" y1="211.7" x2="830.8" y2="211.7" stroke="#a36a46" stroke-width="2.6"/>
<line x1="809.6" y1="211.7" x2="830.8" y2="211.7" stroke="#cf9a6a" stroke-opacity="0.5" stroke-width="2.4" stroke-dasharray="3 7 5 6 4 6"/>
<line x1="809.6" y1="212.9" x2="830.8" y2="212.9" stroke="#3d1d0e" stroke-opacity="0.5" stroke-width="0.6"/>
<line x1="809.6" y1="214.2" x2="830.8" y2="214.2" stroke="#9d6440" stroke-width="2.6"/>
<line x1="809.6" y1="214.2" x2="830.8" y2="214.2" stroke="#8a4c2b" stroke-opacity="0.5" stroke-width="2.4" stroke-dasharray="6 6 5 7 5 4"/>
<line x1="809.6" y1="215.4" x2="830.8" y2="215.4" stroke="#3d1d0e" stroke-opacity="0.3" stroke-width="0.6"/>
<line x1="809.6" y1="216.6" x2="830.8" y2="216.6" stroke="#a36a46" stroke-width="2.6"/>
<line x1="809.6" y1="216.6" x2="830.8" y2="216.6" stroke="#8a4c2b" stroke-opacity="0.5" stroke-width="2.4" stroke-dasharray="3 3 3 3 6 4"/>
<line x1="809.6" y1="217.8" x2="830.8" y2="217.8" stroke="#3d1d0e" stroke-opacity="0.15" stroke-width="0.6"/>
<line x1="809.6" y1="219.0" x2="830.8" y2="219.0" stroke="#975e3a" stroke-width="2.6"/>
<line x1="809.6" y1="219.0" x2="830.8" y2="219.0" stroke="#7e4526" stroke-opacity="0.5" stroke-width="2.4" stroke-dasharray="7 3 4 5 5 6"/>
<line x1="809.6" y1="220.2" x2="830.8" y2="220.2" stroke="#3d1d0e" stroke-opacity="0.5" stroke-width="0.6"/>
<line x1="809.6" y1="221.4" x2="830.8" y2="221.4" stroke="#9d6440" stroke-width="2.6"/>
<line x1="809.6" y1="221.4" x2="830.8" y2="221.4" stroke="#8a4c2b" stroke-opacity="0.5" stroke-width="2.4" stroke-dasharray="5 5 5 3 6 5"/>
<line x1="809.6" y1="222.6" x2="830.8" y2="222.6" stroke="#3d1d0e" stroke-opacity="0.5" stroke-width="0.6"/>
<line x1="809.6" y1="223.8" x2="830.8" y2="223.8" stroke="#925936" stroke-width="2.6"/>
<line x1="809.6" y1="223.8" x2="830.8" y2="223.8" stroke="#cf9a6a" stroke-opacity="0.5" stroke-width="2.4" stroke-dasharray="5 4 5 5 7 3"/>
<line x1="809.6" y1="225.0" x2="830.8" y2="225.0" stroke="#3d1d0e" stroke-opacity="0.15" stroke-width="0.6"/>
<line x1="809.6" y1="226.3" x2="830.8" y2="226.3" stroke="#975e3a" stroke-width="2.6"/>
<line x1="809.6" y1="226.3" x2="830.8" y2="226.3" stroke="#cf9a6a" stroke-opacity="0.5" stroke-width="2.4" stroke-dasharray="5 6 6 6 4 7"/>
<line x1="809.6" y1="227.5" x2="830.8" y2="227.5" stroke="#3d1d0e" stroke-opacity="0.3" stroke-width="0.6"/>
<line x1="809.6" y1="228.7" x2="830.8" y2="228.7" stroke="#925936" stroke-width="2.6"/>
<line x1="809.6" y1="228.7" x2="830.8" y2="228.7" stroke="#cf9a6a" stroke-opacity="0.5" stroke-width="2.4" stroke-dasharray="3 5 6 3 4 6"/>
<line x1="809.6" y1="229.9" x2="830.8" y2="229.9" stroke="#3d1d0e" stroke-opacity="0.5" stroke-width="0.6"/>
<line x1="809.6" y1="231.1" x2="830.8" y2="231.1" stroke="#a36a46" stroke-width="2.6"/>
<line x1="809.6" y1="231.1" x2="830.8" y2="231.1" stroke="#8a4c2b" stroke-opacity="0.5" stroke-width="2.4" stroke-dasharray="5 3 3 5 4 6"/>
<line x1="809.6" y1="232.3" x2="830.8" y2="232.3" stroke="#3d1d0e" stroke-opacity="0.15" stroke-width="0.6"/>
<line x1="809.6" y1="233.5" x2="830.8" y2="233.5" stroke="#9f6642" stroke-width="2.6"/>
<line x1="809.6" y1="233.5" x2="830.8" y2="233.5" stroke="#8a4c2b" stroke-opacity="0.5" stroke-width="2.4" stroke-dasharray="6 5 3 5 7 5"/>
<line x1="809.6" y1="234.7" x2="830.8" y2="234.7" stroke="#3d1d0e" stroke-opacity="0.3" stroke-width="0.6"/>
<line x1="809.6" y1="235.9" x2="830.8" y2="235.9" stroke="#a76e48" stroke-width="2.6"/>
<line x1="809.6" y1="235.9" x2="830.8" y2="235.9" stroke="#8a4c2b" stroke-opacity="0.5" stroke-width="2.4" stroke-dasharray="4 7 5 6 5 5"/>
<line x1="809.6" y1="237.1" x2="830.8" y2="237.1" stroke="#3d1d0e" stroke-opacity="0.15" stroke-width="0.6"/>
<line x1="809.6" y1="238.4" x2="830.8" y2="238.4" stroke="#975e3a" stroke-width="2.6"/>
<line x1="809.6" y1="238.4" x2="830.8" y2="238.4" stroke="#cf9a6a" stroke-opacity="0.5" stroke-width="2.4" stroke-dasharray="5 6 4 6 4 7"/>
<line x1="809.6" y1="239.6" x2="830.8" y2="239.6" stroke="#3d1d0e" stroke-opacity="0.15" stroke-width="0.6"/>
<line x1="809.6" y1="240.8" x2="830.8" y2="240.8" stroke="#9f6642" stroke-width="2.6"/>
<line x1="809.6" y1="240.8" x2="830.8" y2="240.8" stroke="#7e4526" stroke-opacity="0.5" stroke-width="2.4" stroke-dasharray="5 3 4 6 6 4"/>
<line x1="809.6" y1="242.0" x2="830.8" y2="242.0" stroke="#3d1d0e" stroke-opacity="0.5" stroke-width="0.6"/>
<line x1="809.6" y1="243.2" x2="830.8" y2="243.2" stroke="#9d6440" stroke-width="2.6"/>
<line x1="809.6" y1="243.2" x2="830.8" y2="243.2" stroke="#7e4526" stroke-opacity="0.5" stroke-width="2.4" stroke-dasharray="4 4 3 5 6 4"/>
<line x1="809.6" y1="244.4" x2="830.8" y2="244.4" stroke="#3d1d0e" stroke-opacity="0.3" stroke-width="0.6"/>
<line x1="809.6" y1="245.6" x2="830.8" y2="245.6" stroke="#9f6642" stroke-width="2.6"/>
<line x1="809.6" y1="245.6" x2="830.8" y2="245.6" stroke="#8a4c2b" stroke-opacity="0.5" stroke-width="2.4" stroke-dasharray="4 5 4 6 5 5"/>
<line x1="809.6" y1="246.8" x2="830.8" y2="246.8" stroke="#3d1d0e" stroke-opacity="0.15" stroke-width="0.6"/>
<line x1="809.6" y1="248.0" x2="830.8" y2="248.0" stroke="#a76e48" stroke-width="2.6"/>
<line x1="809.6" y1="248.0" x2="830.8" y2="248.0" stroke="#cf9a6a" stroke-opacity="0.5" stroke-width="2.4" stroke-dasharray="7 7 3 5 6 4"/>
<line x1="809.6" y1="249.2" x2="830.8" y2="249.2" stroke="#3d1d0e" stroke-opacity="0.15" stroke-width="0.6"/>
<line x1="809.6" y1="250.5" x2="830.8" y2="250.5" stroke="#9d6440" stroke-width="2.6"/>
<line x1="809.6" y1="250.5" x2="830.8" y2="250.5" stroke="#cf9a6a" stroke-opacity="0.5" stroke-width="2.4" stroke-dasharray="3 5 7 3 7 5"/>
<line x1="809.6" y1="251.7" x2="830.8" y2="251.7" stroke="#3d1d0e" stroke-opacity="0.15" stroke-width="0.6"/>
<polygon points="504.4,109.0 809.3,109.0 809.3,482.6 665.8,482.6 665.8,448.8 504.4,448.8" fill="none" stroke="#8a4f2c" stroke-width="0.8" stroke-opacity="0.7"/>
<line x1="508.2" y1="505.9" x2="839.5" y2="507" stroke="#262626" stroke-width="1"/>
<circle cx="508.2" cy="505.9" r="1.1" fill="#111"/>
<circle cx="567.7" cy="506.1" r="1.1" fill="#111"/>
<circle cx="623.4" cy="506.3" r="1.1" fill="#111"/>
<circle cx="682.6" cy="506.5" r="1.1" fill="#111"/>
<circle cx="741.7" cy="506.7" r="1.1" fill="#111"/>
<circle cx="800.8" cy="506.9" r="1.1" fill="#111"/>
<circle cx="839.5" cy="507.0" r="1.1" fill="#111"/>
<line x1="530" y1="506.1" x2="620" y2="506.4" stroke="#222" stroke-opacity="0.5" stroke-width="1.6" stroke-dasharray="0.8 3.4"/>
<rect x="813.9" y="478.5" width="11.9" height="23.2" fill="#c9c9c9" stroke="#a6a6a6" stroke-width="0.5"/>
<path d="M813.9 478.5 L818.4 486 L818.4 494.2 L813.9 501.7 Z" fill="#d0d0d0"/>
<path d="M825.8 478.5 L821.2 486 L821.2 494.2 L825.8 501.7 Z" fill="#b9b9b9"/>
<path d="M813.9 478.5 L825.8 478.5 L821.2 486 L818.4 486 Z" fill="#c4c4c4"/>
<path d="M813.9 501.7 L825.8 501.7 L821.2 494.2 L818.4 494.2 Z" fill="#cdcdcd"/>
<rect x="818.4" y="486" width="2.8" height="8.2" fill="#e9e9e9"/>
<path d="M628.7 462.7 C636 455 645 450.2 653 450 C661 450.2 665.5 456 666 464 C666.3 472 665 479 663.6 484 Z" fill="#7a4a33"/>
<path d="M631 463.9 C637.4 457.8 645.5 453 652 452.4 C658 452.8 662.5 457 663.3 464 C663.6 471 663.2 477.4 662 482.8 Z" fill="#e9e9ec"/>
<path d="M651.3 454.2 L661 458.6 L660 460.6 L650.6 456.6 Z" fill="#b5b5b8"/>
<rect x="658.4" y="462" width="3" height="16.5" rx="1" fill="#dcdcde" stroke="#b0b0b3" stroke-width="0.5"/>
<ellipse cx="331.8" cy="506.6" rx="1.4" ry="2.6" fill="#dcdcdc" transform="rotate(20 331.8 506.6)"/>
<circle cx="341.8" cy="535.2" r="3" fill="#f2f2f2"/>
<ellipse cx="392.4" cy="542.6" rx="3" ry="1.7" fill="#e2dede" transform="rotate(15 392.4 542.6)"/>
<path d="M301.3 579.3 L306.6 578 L316.6 581.2 L324 577 L334.8 572.6 L340 578 L339 589.5 L336.5 597 L311.6 597 L304 588 Z" fill="#9a6a4a"/>
<path d="M301.3 579.3 L306.6 578 L316.6 581.2 L318 588 L313 594 L311.6 597 L304 588 Z" fill="#8a5c40"/>
<path d="M324 577 L334.8 572.6 L340 578 L339 589.5 L330 584 Z" fill="#a87656" fill-opacity="0.7"/>
<path d="M316.8 597 C315.5 594 318.5 592.5 317.5 590 C316 587.5 319.5 586 318.3 583.5 C317.2 581 320.5 579.5 320.5 577 C320.5 574.5 323.5 574.5 324 572 C324.3 569.5 327.5 569 330 568.6 C332 568.3 332 565 334.5 564.5 C337 564.2 338.5 566.2 340.5 565 C342.5 563.8 343.5 561.2 345.5 561.3 C348 561.5 348.5 565.5 350.6 566 C352.8 565.6 353.2 561.4 355.6 561.4 C358.2 561.6 357.5 566.3 359.5 567 C361.5 567.6 364.5 565.8 365.8 567.5 C367 569.3 365.5 572 367 573.5 C368.5 575 371.5 575 372 577.5 C372.5 580 370.5 582 372.5 584 C374.5 586 376 587.5 375.6 590 C375.3 592.5 373 594 373 597" fill="none" stroke="#0c0c0c" stroke-width="1.15"/>
<circle cx="346.6" cy="591.2" r="1.4" fill="none" stroke="#0c0c0c" stroke-width="0.8"/>
</g>
<rect x="27.5" y="87" width="989.1" height="10.4" fill="#ececf0"/>
<rect x="27.5" y="87" width="10" height="510.0" fill="#ececf0"/>
<clipPath id="rulc"><rect x="37.5" y="87" width="979" height="10"/></clipPath>
<clipPath id="rulall"><rect x="27.5" y="87" width="989" height="509.6"/></clipPath>
<g clip-path="url(#rulall)"><line x1="38.68" y1="94.8" x2="38.68" y2="97.4" stroke="#222" stroke-width="0.8"/>
<line x1="41.90" y1="94.8" x2="41.90" y2="97.4" stroke="#222" stroke-width="0.8"/>
<line x1="45.13" y1="94.8" x2="45.13" y2="97.4" stroke="#222" stroke-width="0.8"/>
<line x1="48.35" y1="94.8" x2="48.35" y2="97.4" stroke="#222" stroke-width="0.8"/>
<line x1="51.58" y1="93.2" x2="51.58" y2="97.4" stroke="#222" stroke-width="0.8"/>
<line x1="54.80" y1="94.8" x2="54.80" y2="97.4" stroke="#222" stroke-width="0.8"/>
<line x1="58.03" y1="94.8" x2="58.03" y2="97.4" stroke="#222" stroke-width="0.8"/>
<line x1="61.25" y1="94.8" x2="61.25" y2="97.4" stroke="#222" stroke-width="0.8"/>
<line x1="64.48" y1="94.8" x2="64.48" y2="97.4" stroke="#222" stroke-width="0.8"/>
<text x="38.3" y="92.7" font-size="6.2" fill="#000" textLength="9" lengthAdjust="spacingAndGlyphs">5 m</text>
<line x1="67.70" y1="87" x2="67.70" y2="97.4" stroke="#222" stroke-width="0.9"/>
<line x1="70.93" y1="94.8" x2="70.93" y2="97.4" stroke="#222" stroke-width="0.8"/>
<line x1="74.15" y1="94.8" x2="74.15" y2="97.4" stroke="#222" stroke-width="0.8"/>
<line x1="77.38" y1="94.8" x2="77.38" y2="97.4" stroke="#222" stroke-width="0.8"/>
<line x1="80.60" y1="94.8" x2="80.60" y2="97.4" stroke="#222" stroke-width="0.8"/>
<line x1="83.83" y1="93.2" x2="83.83" y2="97.4" stroke="#222" stroke-width="0.8"/>
<line x1="87.05" y1="94.8" x2="87.05" y2="97.4" stroke="#222" stroke-width="0.8"/>
<line x1="90.28" y1="94.8" x2="90.28" y2="97.4" stroke="#222" stroke-width="0.8"/>
<line x1="93.50" y1="94.8" x2="93.50" y2="97.4" stroke="#222" stroke-width="0.8"/>
<line x1="96.73" y1="94.8" x2="96.73" y2="97.4" stroke="#222" stroke-width="0.8"/>
<text x="69.3" y="92.7" font-size="6.2" fill="#000" textLength="12.2" lengthAdjust="spacingAndGlyphs">14 m</text>
<line x1="99.95" y1="87" x2="99.95" y2="97.4" stroke="#222" stroke-width="0.9"/>
<line x1="103.18" y1="94.8" x2="103.18" y2="97.4" stroke="#222" stroke-width="0.8"/>
<line x1="106.40" y1="94.8" x2="106.40" y2="97.4" stroke="#222" stroke-width="0.8"/>
<line x1="109.63" y1="94.8" x2="109.63" y2="97.4" stroke="#222" stroke-width="0.8"/>
<line x1="112.85" y1="94.8" x2="112.85" y2="97.4" stroke="#222" stroke-width="0.8"/>
<line x1="116.08" y1="93.2" x2="116.08" y2="97.4" stroke="#222" stroke-width="0.8"/>
<line x1="119.30" y1="94.8" x2="119.30" y2="97.4" stroke="#222" stroke-width="0.8"/>
<line x1="122.53" y1="94.8" x2="122.53" y2="97.4" stroke="#222" stroke-width="0.8"/>
<line x1="125.75" y1="94.8" x2="125.75" y2="97.4" stroke="#222" stroke-width="0.8"/>
<line x1="128.98" y1="94.8" x2="128.98" y2="97.4" stroke="#222" stroke-width="0.8"/>
<text x="101.6" y="92.7" font-size="6.2" fill="#000" textLength="12.2" lengthAdjust="spacingAndGlyphs">13 m</text>
<line x1="132.20" y1="87" x2="132.20" y2="97.4" stroke="#222" stroke-width="0.9"/>
<line x1="135.43" y1="94.8" x2="135.43" y2="97.4" stroke="#222" stroke-width="0.8"/>
<line x1="138.65" y1="94.8" x2="138.65" y2="97.4" stroke="#222" stroke-width="0.8"/>
<line x1="141.88" y1="94.8" x2="141.88" y2="97.4" stroke="#222" stroke-width="0.8"/>
<line x1="145.10" y1="94.8" x2="145.10" y2="97.4" stroke="#222" stroke-width="0.8"/>
<line x1="148.33" y1="93.2" x2="148.33" y2="97.4" stroke="#222" stroke-width="0.8"/>
<line x1="151.55" y1="94.8" x2="151.55" y2="97.4" stroke="#222" stroke-width="0.8"/>
<line x1="154.78" y1="94.8" x2="154.78" y2="97.4" stroke="#222" stroke-width="0.8"/>
<line x1="158.00" y1="94.8" x2="158.00" y2="97.4" stroke="#222" stroke-width="0.8"/>
<line x1="161.23" y1="94.8" x2="161.23" y2="97.4" stroke="#222" stroke-width="0.8"/>
<text x="133.8" y="92.7" font-size="6.2" fill="#000" textLength="12.2" lengthAdjust="spacingAndGlyphs">12 m</text>
<line x1="164.45" y1="87" x2="164.45" y2="97.4" stroke="#222" stroke-width="0.9"/>
<line x1="167.68" y1="94.8" x2="167.68" y2="97.4" stroke="#222" stroke-width="0.8"/>
<line x1="170.90" y1="94.8" x2="170.90" y2="97.4" stroke="#222" stroke-width="0.8"/>
<line x1="174.13" y1="94.8" x2="174.13" y2="97.4" stroke="#222" stroke-width="0.8"/>
<line x1="177.35" y1="94.8" x2="177.35" y2="97.4" stroke="#222" stroke-width="0.8"/>
<line x1="180.58" y1="93.2" x2="180.58" y2="97.4" stroke="#222" stroke-width="0.8"/>
<line x1="183.80" y1="94.8" x2="183.80" y2="97.4" stroke="#222" stroke-width="0.8"/>
<line x1="187.03" y1="94.8" x2="187.03" y2="97.4" stroke="#222" stroke-width="0.8"/>
<line x1="190.25" y1="94.8" x2="190.25" y2="97.4" stroke="#222" stroke-width="0.8"/>
<line x1="193.48" y1="94.8" x2="193.48" y2="97.4" stroke="#222" stroke-width="0.8"/>
<text x="166.1" y="92.7" font-size="6.2" fill="#000" textLength="12.2" lengthAdjust="spacingAndGlyphs">11 m</text>
<line x1="196.70" y1="87" x2="196.70" y2="97.4" stroke="#222" stroke-width="0.9"/>
<line x1="199.93" y1="94.8" x2="199.93" y2="97.4" stroke="#222" stroke-width="0.8"/>
<line x1="203.15" y1="94.8" x2="203.15" y2="97.4" stroke="#222" stroke-width="0.8"/>
<line x1="206.38" y1="94.8" x2="206.38" y2="97.4" stroke="#222" stroke-width="0.8"/>
<line x1="209.60" y1="94.8" x2="209.60" y2="97.4" stroke="#222" stroke-width="0.8"/>
<line x1="212.83" y1="93.2" x2="212.83" y2="97.4" stroke="#222" stroke-width="0.8"/>
<line x1="216.05" y1="94.8" x2="216.05" y2="97.4" stroke="#222" stroke-width="0.8"/>
<line x1="219.28" y1="94.8" x2="219.28" y2="97.4" stroke="#222" stroke-width="0.8"/>
<line x1="222.50" y1="94.8" x2="222.50" y2="97.4" stroke="#222" stroke-width="0.8"/>
<line x1="225.73" y1="94.8" x2="225.73" y2="97.4" stroke="#222" stroke-width="0.8"/>
<text x="198.3" y="92.7" font-size="6.2" fill="#000" textLength="12.2" lengthAdjust="spacingAndGlyphs">10 m</text>
<line x1="228.95" y1="87" x2="228.95" y2="97.4" stroke="#222" stroke-width="0.9"/>
<line x1="232.18" y1="94.8" x2="232.18" y2="97.4" stroke="#222" stroke-width="0.8"/>
<line x1="235.40" y1="94.8" x2="235.40" y2="97.4" stroke="#222" stroke-width="0.8"/>
<line x1="238.63" y1="94.8" x2="238.63" y2="97.4" stroke="#222" stroke-width="0.8"/>
<line x1="241.85" y1="94.8" x2="241.85" y2="97.4" stroke="#222" stroke-width="0.8"/>
<line x1="245.08" y1="93.2" x2="245.08" y2="97.4" stroke="#222" stroke-width="0.8"/>
<line x1="248.30" y1="94.8" x2="248.30" y2="97.4" stroke="#222" stroke-width="0.8"/>
<line x1="251.53" y1="94.8" x2="251.53" y2="97.4" stroke="#222" stroke-width="0.8"/>
<line x1="254.75" y1="94.8" x2="254.75" y2="97.4" stroke="#222" stroke-width="0.8"/>
<line x1="257.98" y1="94.8" x2="257.98" y2="97.4" stroke="#222" stroke-width="0.8"/>
<text x="230.6" y="92.7" font-size="6.2" fill="#000" textLength="9.2" lengthAdjust="spacingAndGlyphs">9 m</text>
<line x1="261.20" y1="87" x2="261.20" y2="97.4" stroke="#222" stroke-width="0.9"/>
<line x1="264.43" y1="94.8" x2="264.43" y2="97.4" stroke="#222" stroke-width="0.8"/>
<line x1="267.65" y1="94.8" x2="267.65" y2="97.4" stroke="#222" stroke-width="0.8"/>
<line x1="270.88" y1="94.8" x2="270.88" y2="97.4" stroke="#222" stroke-width="0.8"/>
<line x1="274.10" y1="94.8" x2="274.10" y2="97.4" stroke="#222" stroke-width="0.8"/>
<line x1="277.33" y1="93.2" x2="277.33" y2="97.4" stroke="#222" stroke-width="0.8"/>
<line x1="280.55" y1="94.8" x2="280.55" y2="97.4" stroke="#222" stroke-width="0.8"/>
<line x1="283.78" y1="94.8" x2="283.78" y2="97.4" stroke="#222" stroke-width="0.8"/>
<line x1="287.00" y1="94.8" x2="287.00" y2="97.4" stroke="#222" stroke-width="0.8"/>
<line x1="290.23" y1="94.8" x2="290.23" y2="97.4" stroke="#222" stroke-width="0.8"/>
<text x="262.8" y="92.7" font-size="6.2" fill="#000" textLength="9.2" lengthAdjust="spacingAndGlyphs">8 m</text>
<line x1="293.45" y1="87" x2="293.45" y2="97.4" stroke="#222" stroke-width="0.9"/>
<line x1="296.68" y1="94.8" x2="296.68" y2="97.4" stroke="#222" stroke-width="0.8"/>
<line x1="299.90" y1="94.8" x2="299.90" y2="97.4" stroke="#222" stroke-width="0.8"/>
<line x1="303.13" y1="94.8" x2="303.13" y2="97.4" stroke="#222" stroke-width="0.8"/>
<line x1="306.35" y1="94.8" x2="306.35" y2="97.4" stroke="#222" stroke-width="0.8"/>
<line x1="309.58" y1="93.2" x2="309.58" y2="97.4" stroke="#222" stroke-width="0.8"/>
<line x1="312.80" y1="94.8" x2="312.80" y2="97.4" stroke="#222" stroke-width="0.8"/>
<line x1="316.03" y1="94.8" x2="316.03" y2="97.4" stroke="#222" stroke-width="0.8"/>
<line x1="319.25" y1="94.8" x2="319.25" y2="97.4" stroke="#222" stroke-width="0.8"/>
<line x1="322.48" y1="94.8" x2="322.48" y2="97.4" stroke="#222" stroke-width="0.8"/>
<text x="295.1" y="92.7" font-size="6.2" fill="#000" textLength="9.2" lengthAdjust="spacingAndGlyphs">7 m</text>
<line x1="325.70" y1="87" x2="325.70" y2="97.4" stroke="#222" stroke-width="0.9"/>
<line x1="328.93" y1="94.8" x2="328.93" y2="97.4" stroke="#222" stroke-width="0.8"/>
<line x1="332.15" y1="94.8" x2="332.15" y2="97.4" stroke="#222" stroke-width="0.8"/>
<line x1="335.38" y1="94.8" x2="335.38" y2="97.4" stroke="#222" stroke-width="0.8"/>
<line x1="338.60" y1="94.8" x2="338.60" y2="97.4" stroke="#222" stroke-width="0.8"/>
<line x1="341.83" y1="93.2" x2="341.83" y2="97.4" stroke="#222" stroke-width="0.8"/>
<line x1="345.05" y1="94.8" x2="345.05" y2="97.4" stroke="#222" stroke-width="0.8"/>
<line x1="348.28" y1="94.8" x2="348.28" y2="97.4" stroke="#222" stroke-width="0.8"/>
<line x1="351.50" y1="94.8" x2="351.50" y2="97.4" stroke="#222" stroke-width="0.8"/>
<line x1="354.73" y1="94.8" x2="354.73" y2="97.4" stroke="#222" stroke-width="0.8"/>
<text x="327.3" y="92.7" font-size="6.2" fill="#000" textLength="9.2" lengthAdjust="spacingAndGlyphs">6 m</text>
<line x1="357.95" y1="87" x2="357.95" y2="97.4" stroke="#222" stroke-width="0.9"/>
<line x1="361.18" y1="94.8" x2="361.18" y2="97.4" stroke="#222" stroke-width="0.8"/>
<line x1="364.40" y1="94.8" x2="364.40" y2="97.4" stroke="#222" stroke-width="0.8"/>
<line x1="367.63" y1="94.8" x2="367.63" y2="97.4" stroke="#222" stroke-width="0.8"/>
<line x1="370.85" y1="94.8" x2="370.85" y2="97.4" stroke="#222" stroke-width="0.8"/>
<line x1="374.08" y1="93.2" x2="374.08" y2="97.4" stroke="#222" stroke-width="0.8"/>
<line x1="377.30" y1="94.8" x2="377.30" y2="97.4" stroke="#222" stroke-width="0.8"/>
<line x1="380.53" y1="94.8" x2="380.53" y2="97.4" stroke="#222" stroke-width="0.8"/>
<line x1="383.75" y1="94.8" x2="383.75" y2="97.4" stroke="#222" stroke-width="0.8"/>
<line x1="386.98" y1="94.8" x2="386.98" y2="97.4" stroke="#222" stroke-width="0.8"/>
<text x="359.6" y="92.7" font-size="6.2" fill="#000" textLength="9.2" lengthAdjust="spacingAndGlyphs">5 m</text>
<line x1="390.20" y1="87" x2="390.20" y2="97.4" stroke="#222" stroke-width="0.9"/>
<line x1="393.43" y1="94.8" x2="393.43" y2="97.4" stroke="#222" stroke-width="0.8"/>
<line x1="396.65" y1="94.8" x2="396.65" y2="97.4" stroke="#222" stroke-width="0.8"/>
<line x1="399.88" y1="94.8" x2="399.88" y2="97.4" stroke="#222" stroke-width="0.8"/>
<line x1="403.10" y1="94.8" x2="403.10" y2="97.4" stroke="#222" stroke-width="0.8"/>
<line x1="406.33" y1="93.2" x2="406.33" y2="97.4" stroke="#222" stroke-width="0.8"/>
<line x1="409.55" y1="94.8" x2="409.55" y2="97.4" stroke="#222" stroke-width="0.8"/>
<line x1="412.78" y1="94.8" x2="412.78" y2="97.4" stroke="#222" stroke-width="0.8"/>
<line x1="416.00" y1="94.8" x2="416.00" y2="97.4" stroke="#222" stroke-width="0.8"/>
<line x1="419.23" y1="94.8" x2="419.23" y2="97.4" stroke="#222" stroke-width="0.8"/>
<text x="391.8" y="92.7" font-size="6.2" fill="#000" textLength="9.2" lengthAdjust="spacingAndGlyphs">4 m</text>
<line x1="422.45" y1="87" x2="422.45" y2="97.4" stroke="#222" stroke-width="0.9"/>
<line x1="425.68" y1="94.8" x2="425.68" y2="97.4" stroke="#222" stroke-width="0.8"/>
<line x1="428.90" y1="94.8" x2="428.90" y2="97.4" stroke="#222" stroke-width="0.8"/>
<line x1="432.13" y1="94.8" x2="432.13" y2="97.4" stroke="#222" stroke-width="0.8"/>
<line x1="435.35" y1="94.8" x2="435.35" y2="97.4" stroke="#222" stroke-width="0.8"/>
<line x1="438.58" y1="93.2" x2="438.58" y2="97.4" stroke="#222" stroke-width="0.8"/>
<line x1="441.80" y1="94.8" x2="441.80" y2="97.4" stroke="#222" stroke-width="0.8"/>
<line x1="445.03" y1="94.8" x2="445.03" y2="97.4" stroke="#222" stroke-width="0.8"/>
<line x1="448.25" y1="94.8" x2="448.25" y2="97.4" stroke="#222" stroke-width="0.8"/>
<line x1="451.48" y1="94.8" x2="451.48" y2="97.4" stroke="#222" stroke-width="0.8"/>
<text x="424.1" y="92.7" font-size="6.2" fill="#000" textLength="9.2" lengthAdjust="spacingAndGlyphs">3 m</text>
<line x1="454.70" y1="87" x2="454.70" y2="97.4" stroke="#222" stroke-width="0.9"/>
<line x1="457.93" y1="94.8" x2="457.93" y2="97.4" stroke="#222" stroke-width="0.8"/>
<line x1="461.15" y1="94.8" x2="461.15" y2="97.4" stroke="#222" stroke-width="0.8"/>
<line x1="464.38" y1="94.8" x2="464.38" y2="97.4" stroke="#222" stroke-width="0.8"/>
<line x1="467.60" y1="94.8" x2="467.60" y2="97.4" stroke="#222" stroke-width="0.8"/>
<line x1="470.83" y1="93.2" x2="470.83" y2="97.4" stroke="#222" stroke-width="0.8"/>
<line x1="474.05" y1="94.8" x2="474.05" y2="97.4" stroke="#222" stroke-width="0.8"/>
<line x1="477.28" y1="94.8" x2="477.28" y2="97.4" stroke="#222" stroke-width="0.8"/>
<line x1="480.50" y1="94.8" x2="480.50" y2="97.4" stroke="#222" stroke-width="0.8"/>
<line x1="483.73" y1="94.8" x2="483.73" y2="97.4" stroke="#222" stroke-width="0.8"/>
<text x="456.3" y="92.7" font-size="6.2" fill="#000" textLength="9.2" lengthAdjust="spacingAndGlyphs">2 m</text>
<line x1="486.95" y1="87" x2="486.95" y2="97.4" stroke="#222" stroke-width="0.9"/>
<line x1="490.18" y1="94.8" x2="490.18" y2="97.4" stroke="#222" stroke-width="0.8"/>
<line x1="493.40" y1="94.8" x2="493.40" y2="97.4" stroke="#222" stroke-width="0.8"/>
<line x1="496.63" y1="94.8" x2="496.63" y2="97.4" stroke="#222" stroke-width="0.8"/>
<line x1="499.85" y1="94.8" x2="499.85" y2="97.4" stroke="#222" stroke-width="0.8"/>
<line x1="503.08" y1="93.2" x2="503.08" y2="97.4" stroke="#222" stroke-width="0.8"/>
<line x1="506.30" y1="94.8" x2="506.30" y2="97.4" stroke="#222" stroke-width="0.8"/>
<line x1="509.53" y1="94.8" x2="509.53" y2="97.4" stroke="#222" stroke-width="0.8"/>
<line x1="512.75" y1="94.8" x2="512.75" y2="97.4" stroke="#222" stroke-width="0.8"/>
<line x1="515.98" y1="94.8" x2="515.98" y2="97.4" stroke="#222" stroke-width="0.8"/>
<text x="488.6" y="92.7" font-size="6.2" fill="#000" textLength="9.2" lengthAdjust="spacingAndGlyphs">1 m</text>
<line x1="519.20" y1="87" x2="519.20" y2="97.4" stroke="#222" stroke-width="0.9"/>
<line x1="522.43" y1="94.8" x2="522.43" y2="97.4" stroke="#222" stroke-width="0.8"/>
<line x1="525.65" y1="94.8" x2="525.65" y2="97.4" stroke="#222" stroke-width="0.8"/>
<line x1="528.88" y1="94.8" x2="528.88" y2="97.4" stroke="#222" stroke-width="0.8"/>
<line x1="532.10" y1="94.8" x2="532.10" y2="97.4" stroke="#222" stroke-width="0.8"/>
<line x1="535.33" y1="93.2" x2="535.33" y2="97.4" stroke="#222" stroke-width="0.8"/>
<line x1="538.55" y1="94.8" x2="538.55" y2="97.4" stroke="#222" stroke-width="0.8"/>
<line x1="541.78" y1="94.8" x2="541.78" y2="97.4" stroke="#222" stroke-width="0.8"/>
<line x1="545.00" y1="94.8" x2="545.00" y2="97.4" stroke="#222" stroke-width="0.8"/>
<line x1="548.23" y1="94.8" x2="548.23" y2="97.4" stroke="#222" stroke-width="0.8"/>
<text x="520.8" y="92.7" font-size="6.2" fill="#000" textLength="9.2" lengthAdjust="spacingAndGlyphs">0 m</text>
<line x1="551.45" y1="87" x2="551.45" y2="97.4" stroke="#222" stroke-width="0.9"/>
<line x1="554.68" y1="94.8" x2="554.68" y2="97.4" stroke="#222" stroke-width="0.8"/>
<line x1="557.90" y1="94.8" x2="557.90" y2="97.4" stroke="#222" stroke-width="0.8"/>
<line x1="561.12" y1="94.8" x2="561.12" y2="97.4" stroke="#222" stroke-width="0.8"/>
<line x1="564.35" y1="94.8" x2="564.35" y2="97.4" stroke="#222" stroke-width="0.8"/>
<line x1="567.58" y1="93.2" x2="567.58" y2="97.4" stroke="#222" stroke-width="0.8"/>
<line x1="570.80" y1="94.8" x2="570.80" y2="97.4" stroke="#222" stroke-width="0.8"/>
<line x1="574.03" y1="94.8" x2="574.03" y2="97.4" stroke="#222" stroke-width="0.8"/>
<line x1="577.25" y1="94.8" x2="577.25" y2="97.4" stroke="#222" stroke-width="0.8"/>
<line x1="580.48" y1="94.8" x2="580.48" y2="97.4" stroke="#222" stroke-width="0.8"/>
<text x="553.1" y="92.7" font-size="6.2" fill="#000" textLength="9.2" lengthAdjust="spacingAndGlyphs">1 m</text>
<line x1="583.70" y1="87" x2="583.70" y2="97.4" stroke="#222" stroke-width="0.9"/>
<line x1="586.93" y1="94.8" x2="586.93" y2="97.4" stroke="#222" stroke-width="0.8"/>
<line x1="590.15" y1="94.8" x2="590.15" y2="97.4" stroke="#222" stroke-width="0.8"/>
<line x1="593.38" y1="94.8" x2="593.38" y2="97.4" stroke="#222" stroke-width="0.8"/>
<line x1="596.60" y1="94.8" x2="596.60" y2="97.4" stroke="#222" stroke-width="0.8"/>
<line x1="599.83" y1="93.2" x2="599.83" y2="97.4" stroke="#222" stroke-width="0.8"/>
<line x1="603.05" y1="94.8" x2="603.05" y2="97.4" stroke="#222" stroke-width="0.8"/>
<line x1="606.28" y1="94.8" x2="606.28" y2="97.4" stroke="#222" stroke-width="0.8"/>
<line x1="609.50" y1="94.8" x2="609.50" y2="97.4" stroke="#222" stroke-width="0.8"/>
<line x1="612.73" y1="94.8" x2="612.73" y2="97.4" stroke="#222" stroke-width="0.8"/>
<text x="585.3" y="92.7" font-size="6.2" fill="#000" textLength="9.2" lengthAdjust="spacingAndGlyphs">2 m</text>
<line x1="615.95" y1="87" x2="615.95" y2="97.4" stroke="#222" stroke-width="0.9"/>
<line x1="619.18" y1="94.8" x2="619.18" y2="97.4" stroke="#222" stroke-width="0.8"/>
<line x1="622.40" y1="94.8" x2="622.40" y2="97.4" stroke="#222" stroke-width="0.8"/>
<line x1="625.62" y1="94.8" x2="625.62" y2="97.4" stroke="#222" stroke-width="0.8"/>
<line x1="628.85" y1="94.8" x2="628.85" y2="97.4" stroke="#222" stroke-width="0.8"/>
<line x1="632.08" y1="93.2" x2="632.08" y2="97.4" stroke="#222" stroke-width="0.8"/>
<line x1="635.30" y1="94.8" x2="635.30" y2="97.4" stroke="#222" stroke-width="0.8"/>
<line x1="638.53" y1="94.8" x2="638.53" y2="97.4" stroke="#222" stroke-width="0.8"/>
<line x1="641.75" y1="94.8" x2="641.75" y2="97.4" stroke="#222" stroke-width="0.8"/>
<line x1="644.98" y1="94.8" x2="644.98" y2="97.4" stroke="#222" stroke-width="0.8"/>
<text x="617.6" y="92.7" font-size="6.2" fill="#000" textLength="9.2" lengthAdjust="spacingAndGlyphs">3 m</text>
<line x1="648.20" y1="87" x2="648.20" y2="97.4" stroke="#222" stroke-width="0.9"/>
<line x1="651.43" y1="94.8" x2="651.43" y2="97.4" stroke="#222" stroke-width="0.8"/>
<line x1="654.65" y1="94.8" x2="654.65" y2="97.4" stroke="#222" stroke-width="0.8"/>
<line x1="657.88" y1="94.8" x2="657.88" y2="97.4" stroke="#222" stroke-width="0.8"/>
<line x1="661.10" y1="94.8" x2="661.10" y2="97.4" stroke="#222" stroke-width="0.8"/>
<line x1="664.33" y1="93.2" x2="664.33" y2="97.4" stroke="#222" stroke-width="0.8"/>
<line x1="667.55" y1="94.8" x2="667.55" y2="97.4" stroke="#222" stroke-width="0.8"/>
<line x1="670.78" y1="94.8" x2="670.78" y2="97.4" stroke="#222" stroke-width="0.8"/>
<line x1="674.00" y1="94.8" x2="674.00" y2="97.4" stroke="#222" stroke-width="0.8"/>
<line x1="677.23" y1="94.8" x2="677.23" y2="97.4" stroke="#222" stroke-width="0.8"/>
<text x="649.8" y="92.7" font-size="6.2" fill="#000" textLength="9.2" lengthAdjust="spacingAndGlyphs">4 m</text>
<line x1="680.45" y1="87" x2="680.45" y2="97.4" stroke="#222" stroke-width="0.9"/>
<line x1="683.68" y1="94.8" x2="683.68" y2="97.4" stroke="#222" stroke-width="0.8"/>
<line x1="686.90" y1="94.8" x2="686.90" y2="97.4" stroke="#222" stroke-width="0.8"/>
<line x1="690.12" y1="94.8" x2="690.12" y2="97.4" stroke="#222" stroke-width="0.8"/>
<line x1="693.35" y1="94.8" x2="693.35" y2="97.4" stroke="#222" stroke-width="0.8"/>
<line x1="696.58" y1="93.2" x2="696.58" y2="97.4" stroke="#222" stroke-width="0.8"/>
<line x1="699.80" y1="94.8" x2="699.80" y2="97.4" stroke="#222" stroke-width="0.8"/>
<line x1="703.03" y1="94.8" x2="703.03" y2="97.4" stroke="#222" stroke-width="0.8"/>
<line x1="706.25" y1="94.8" x2="706.25" y2="97.4" stroke="#222" stroke-width="0.8"/>
<line x1="709.48" y1="94.8" x2="709.48" y2="97.4" stroke="#222" stroke-width="0.8"/>
<text x="682.1" y="92.7" font-size="6.2" fill="#000" textLength="9.2" lengthAdjust="spacingAndGlyphs">5 m</text>
<line x1="712.70" y1="87" x2="712.70" y2="97.4" stroke="#222" stroke-width="0.9"/>
<line x1="715.93" y1="94.8" x2="715.93" y2="97.4" stroke="#222" stroke-width="0.8"/>
<line x1="719.15" y1="94.8" x2="719.15" y2="97.4" stroke="#222" stroke-width="0.8"/>
<line x1="722.38" y1="94.8" x2="722.38" y2="97.4" stroke="#222" stroke-width="0.8"/>
<line x1="725.60" y1="94.8" x2="725.60" y2="97.4" stroke="#222" stroke-width="0.8"/>
<line x1="728.83" y1="93.2" x2="728.83" y2="97.4" stroke="#222" stroke-width="0.8"/>
<line x1="732.05" y1="94.8" x2="732.05" y2="97.4" stroke="#222" stroke-width="0.8"/>
<line x1="735.28" y1="94.8" x2="735.28" y2="97.4" stroke="#222" stroke-width="0.8"/>
<line x1="738.50" y1="94.8" x2="738.50" y2="97.4" stroke="#222" stroke-width="0.8"/>
<line x1="741.73" y1="94.8" x2="741.73" y2="97.4" stroke="#222" stroke-width="0.8"/>
<text x="714.3" y="92.7" font-size="6.2" fill="#000" textLength="9.2" lengthAdjust="spacingAndGlyphs">6 m</text>
<line x1="744.95" y1="87" x2="744.95" y2="97.4" stroke="#222" stroke-width="0.9"/>
<line x1="748.18" y1="94.8" x2="748.18" y2="97.4" stroke="#222" stroke-width="0.8"/>
<line x1="751.40" y1="94.8" x2="751.40" y2="97.4" stroke="#222" stroke-width="0.8"/>
<line x1="754.62" y1="94.8" x2="754.62" y2="97.4" stroke="#222" stroke-width="0.8"/>
<line x1="757.85" y1="94.8" x2="757.85" y2="97.4" stroke="#222" stroke-width="0.8"/>
<line x1="761.08" y1="93.2" x2="761.08" y2="97.4" stroke="#222" stroke-width="0.8"/>
<line x1="764.30" y1="94.8" x2="764.30" y2="97.4" stroke="#222" stroke-width="0.8"/>
<line x1="767.53" y1="94.8" x2="767.53" y2="97.4" stroke="#222" stroke-width="0.8"/>
<line x1="770.75" y1="94.8" x2="770.75" y2="97.4" stroke="#222" stroke-width="0.8"/>
<line x1="773.98" y1="94.8" x2="773.98" y2="97.4" stroke="#222" stroke-width="0.8"/>
<text x="746.6" y="92.7" font-size="6.2" fill="#000" textLength="9.2" lengthAdjust="spacingAndGlyphs">7 m</text>
<line x1="777.20" y1="87" x2="777.20" y2="97.4" stroke="#222" stroke-width="0.9"/>
<line x1="780.43" y1="94.8" x2="780.43" y2="97.4" stroke="#222" stroke-width="0.8"/>
<line x1="783.65" y1="94.8" x2="783.65" y2="97.4" stroke="#222" stroke-width="0.8"/>
<line x1="786.88" y1="94.8" x2="786.88" y2="97.4" stroke="#222" stroke-width="0.8"/>
<line x1="790.10" y1="94.8" x2="790.10" y2="97.4" stroke="#222" stroke-width="0.8"/>
<line x1="793.33" y1="93.2" x2="793.33" y2="97.4" stroke="#222" stroke-width="0.8"/>
<line x1="796.55" y1="94.8" x2="796.55" y2="97.4" stroke="#222" stroke-width="0.8"/>
<line x1="799.78" y1="94.8" x2="799.78" y2="97.4" stroke="#222" stroke-width="0.8"/>
<line x1="803.00" y1="94.8" x2="803.00" y2="97.4" stroke="#222" stroke-width="0.8"/>
<line x1="806.23" y1="94.8" x2="806.23" y2="97.4" stroke="#222" stroke-width="0.8"/>
<text x="778.8" y="92.7" font-size="6.2" fill="#000" textLength="9.2" lengthAdjust="spacingAndGlyphs">8 m</text>
<line x1="809.45" y1="87" x2="809.45" y2="97.4" stroke="#222" stroke-width="0.9"/>
<line x1="812.68" y1="94.8" x2="812.68" y2="97.4" stroke="#222" stroke-width="0.8"/>
<line x1="815.90" y1="94.8" x2="815.90" y2="97.4" stroke="#222" stroke-width="0.8"/>
<line x1="819.12" y1="94.8" x2="819.12" y2="97.4" stroke="#222" stroke-width="0.8"/>
<line x1="822.35" y1="94.8" x2="822.35" y2="97.4" stroke="#222" stroke-width="0.8"/>
<line x1="825.58" y1="93.2" x2="825.58" y2="97.4" stroke="#222" stroke-width="0.8"/>
<line x1="828.80" y1="94.8" x2="828.80" y2="97.4" stroke="#222" stroke-width="0.8"/>
<line x1="832.03" y1="94.8" x2="832.03" y2="97.4" stroke="#222" stroke-width="0.8"/>
<line x1="835.25" y1="94.8" x2="835.25" y2="97.4" stroke="#222" stroke-width="0.8"/>
<line x1="838.48" y1="94.8" x2="838.48" y2="97.4" stroke="#222" stroke-width="0.8"/>
<text x="811.1" y="92.7" font-size="6.2" fill="#000" textLength="9.2" lengthAdjust="spacingAndGlyphs">9 m</text>
<line x1="841.70" y1="87" x2="841.70" y2="97.4" stroke="#222" stroke-width="0.9"/>
<line x1="844.93" y1="94.8" x2="844.93" y2="97.4" stroke="#222" stroke-width="0.8"/>
<line x1="848.15" y1="94.8" x2="848.15" y2="97.4" stroke="#222" stroke-width="0.8"/>
<line x1="851.38" y1="94.8" x2="851.38" y2="97.4" stroke="#222" stroke-width="0.8"/>
<line x1="854.60" y1="94.8" x2="854.60" y2="97.4" stroke="#222" stroke-width="0.8"/>
<line x1="857.83" y1="93.2" x2="857.83" y2="97.4" stroke="#222" stroke-width="0.8"/>
<line x1="861.05" y1="94.8" x2="861.05" y2="97.4" stroke="#222" stroke-width="0.8"/>
<line x1="864.28" y1="94.8" x2="864.28" y2="97.4" stroke="#222" stroke-width="0.8"/>
<line x1="867.50" y1="94.8" x2="867.50" y2="97.4" stroke="#222" stroke-width="0.8"/>
<line x1="870.73" y1="94.8" x2="870.73" y2="97.4" stroke="#222" stroke-width="0.8"/>
<text x="843.3" y="92.7" font-size="6.2" fill="#000" textLength="12.2" lengthAdjust="spacingAndGlyphs">10 m</text>
<line x1="873.95" y1="87" x2="873.95" y2="97.4" stroke="#222" stroke-width="0.9"/>
<line x1="877.18" y1="94.8" x2="877.18" y2="97.4" stroke="#222" stroke-width="0.8"/>
<line x1="880.40" y1="94.8" x2="880.40" y2="97.4" stroke="#222" stroke-width="0.8"/>
<line x1="883.62" y1="94.8" x2="883.62" y2="97.4" stroke="#222" stroke-width="0.8"/>
<line x1="886.85" y1="94.8" x2="886.85" y2="97.4" stroke="#222" stroke-width="0.8"/>
<line x1="890.08" y1="93.2" x2="890.08" y2="97.4" stroke="#222" stroke-width="0.8"/>
<line x1="893.30" y1="94.8" x2="893.30" y2="97.4" stroke="#222" stroke-width="0.8"/>
<line x1="896.53" y1="94.8" x2="896.53" y2="97.4" stroke="#222" stroke-width="0.8"/>
<line x1="899.75" y1="94.8" x2="899.75" y2="97.4" stroke="#222" stroke-width="0.8"/>
<line x1="902.98" y1="94.8" x2="902.98" y2="97.4" stroke="#222" stroke-width="0.8"/>
<text x="875.6" y="92.7" font-size="6.2" fill="#000" textLength="12.2" lengthAdjust="spacingAndGlyphs">11 m</text>
<line x1="906.20" y1="87" x2="906.20" y2="97.4" stroke="#222" stroke-width="0.9"/>
<line x1="909.43" y1="94.8" x2="909.43" y2="97.4" stroke="#222" stroke-width="0.8"/>
<line x1="912.65" y1="94.8" x2="912.65" y2="97.4" stroke="#222" stroke-width="0.8"/>
<line x1="915.88" y1="94.8" x2="915.88" y2="97.4" stroke="#222" stroke-width="0.8"/>
<line x1="919.10" y1="94.8" x2="919.10" y2="97.4" stroke="#222" stroke-width="0.8"/>
<line x1="922.33" y1="93.2" x2="922.33" y2="97.4" stroke="#222" stroke-width="0.8"/>
<line x1="925.55" y1="94.8" x2="925.55" y2="97.4" stroke="#222" stroke-width="0.8"/>
<line x1="928.78" y1="94.8" x2="928.78" y2="97.4" stroke="#222" stroke-width="0.8"/>
<line x1="932.00" y1="94.8" x2="932.00" y2="97.4" stroke="#222" stroke-width="0.8"/>
<line x1="935.23" y1="94.8" x2="935.23" y2="97.4" stroke="#222" stroke-width="0.8"/>
<text x="907.8" y="92.7" font-size="6.2" fill="#000" textLength="12.2" lengthAdjust="spacingAndGlyphs">12 m</text>
<line x1="938.45" y1="87" x2="938.45" y2="97.4" stroke="#222" stroke-width="0.9"/>
<line x1="941.68" y1="94.8" x2="941.68" y2="97.4" stroke="#222" stroke-width="0.8"/>
<line x1="944.90" y1="94.8" x2="944.90" y2="97.4" stroke="#222" stroke-width="0.8"/>
<line x1="948.12" y1="94.8" x2="948.12" y2="97.4" stroke="#222" stroke-width="0.8"/>
<line x1="951.35" y1="94.8" x2="951.35" y2="97.4" stroke="#222" stroke-width="0.8"/>
<line x1="954.58" y1="93.2" x2="954.58" y2="97.4" stroke="#222" stroke-width="0.8"/>
<line x1="957.80" y1="94.8" x2="957.80" y2="97.4" stroke="#222" stroke-width="0.8"/>
<line x1="961.03" y1="94.8" x2="961.03" y2="97.4" stroke="#222" stroke-width="0.8"/>
<line x1="964.25" y1="94.8" x2="964.25" y2="97.4" stroke="#222" stroke-width="0.8"/>
<line x1="967.48" y1="94.8" x2="967.48" y2="97.4" stroke="#222" stroke-width="0.8"/>
<text x="940.1" y="92.7" font-size="6.2" fill="#000" textLength="12.2" lengthAdjust="spacingAndGlyphs">13 m</text>
<line x1="970.70" y1="87" x2="970.70" y2="97.4" stroke="#222" stroke-width="0.9"/>
<line x1="973.93" y1="94.8" x2="973.93" y2="97.4" stroke="#222" stroke-width="0.8"/>
<line x1="977.15" y1="94.8" x2="977.15" y2="97.4" stroke="#222" stroke-width="0.8"/>
<line x1="980.38" y1="94.8" x2="980.38" y2="97.4" stroke="#222" stroke-width="0.8"/>
<line x1="983.60" y1="94.8" x2="983.60" y2="97.4" stroke="#222" stroke-width="0.8"/>
<line x1="986.83" y1="93.2" x2="986.83" y2="97.4" stroke="#222" stroke-width="0.8"/>
<line x1="990.05" y1="94.8" x2="990.05" y2="97.4" stroke="#222" stroke-width="0.8"/>
<line x1="993.28" y1="94.8" x2="993.28" y2="97.4" stroke="#222" stroke-width="0.8"/>
<line x1="996.50" y1="94.8" x2="996.50" y2="97.4" stroke="#222" stroke-width="0.8"/>
<line x1="999.73" y1="94.8" x2="999.73" y2="97.4" stroke="#222" stroke-width="0.8"/>
<text x="972.3" y="92.7" font-size="6.2" fill="#000" textLength="12.2" lengthAdjust="spacingAndGlyphs">14 m</text>
<line x1="1002.95" y1="87" x2="1002.95" y2="97.4" stroke="#222" stroke-width="0.9"/>
<line x1="1006.18" y1="94.8" x2="1006.18" y2="97.4" stroke="#222" stroke-width="0.8"/>
<line x1="1009.40" y1="94.8" x2="1009.40" y2="97.4" stroke="#222" stroke-width="0.8"/>
<line x1="1012.62" y1="94.8" x2="1012.62" y2="97.4" stroke="#222" stroke-width="0.8"/>
<line x1="1015.85" y1="94.8" x2="1015.85" y2="97.4" stroke="#222" stroke-width="0.8"/>
<text x="1004.6" y="92.7" font-size="6.2" fill="#000" textLength="12.2" lengthAdjust="spacingAndGlyphs">15 m</text>
<line x1="35.5" y1="99.52" x2="37.5" y2="99.52" stroke="#222" stroke-width="0.8"/>
<line x1="35.5" y1="102.75" x2="37.5" y2="102.75" stroke="#222" stroke-width="0.8"/>
<line x1="35.5" y1="105.97" x2="37.5" y2="105.97" stroke="#222" stroke-width="0.8"/>
<line x1="35.5" y1="109.20" x2="37.5" y2="109.20" stroke="#222" stroke-width="0.8"/>
<line x1="34" y1="112.42" x2="37.5" y2="112.42" stroke="#222" stroke-width="0.8"/>
<line x1="35.5" y1="115.65" x2="37.5" y2="115.65" stroke="#222" stroke-width="0.8"/>
<line x1="35.5" y1="118.88" x2="37.5" y2="118.88" stroke="#222" stroke-width="0.8"/>
<line x1="35.5" y1="122.10" x2="37.5" y2="122.10" stroke="#222" stroke-width="0.8"/>
<line x1="35.5" y1="125.32" x2="37.5" y2="125.32" stroke="#222" stroke-width="0.8"/>
<text transform="translate(28.9 97.7) rotate(90)" font-size="6.2" fill="#000" textLength="9.2" lengthAdjust="spacingAndGlyphs">0 m</text>
<line x1="27.5" y1="128.55" x2="37.5" y2="128.55" stroke="#222" stroke-width="0.9"/>
<line x1="35.5" y1="131.78" x2="37.5" y2="131.78" stroke="#222" stroke-width="0.8"/>
<line x1="35.5" y1="135.00" x2="37.5" y2="135.00" stroke="#222" stroke-width="0.8"/>
<line x1="35.5" y1="138.23" x2="37.5" y2="138.23" stroke="#222" stroke-width="0.8"/>
<line x1="35.5" y1="141.45" x2="37.5" y2="141.45" stroke="#222" stroke-width="0.8"/>
<line x1="34" y1="144.68" x2="37.5" y2="144.68" stroke="#222" stroke-width="0.8"/>
<line x1="35.5" y1="147.90" x2="37.5" y2="147.90" stroke="#222" stroke-width="0.8"/>
<line x1="35.5" y1="151.12" x2="37.5" y2="151.12" stroke="#222" stroke-width="0.8"/>
<line x1="35.5" y1="154.35" x2="37.5" y2="154.35" stroke="#222" stroke-width="0.8"/>
<line x1="35.5" y1="157.58" x2="37.5" y2="157.58" stroke="#222" stroke-width="0.8"/>
<text transform="translate(28.9 130.0) rotate(90)" font-size="6.2" fill="#000" textLength="9.2" lengthAdjust="spacingAndGlyphs">1 m</text>
<line x1="27.5" y1="160.80" x2="37.5" y2="160.80" stroke="#222" stroke-width="0.9"/>
<line x1="35.5" y1="164.03" x2="37.5" y2="164.03" stroke="#222" stroke-width="0.8"/>
<line x1="35.5" y1="167.25" x2="37.5" y2="167.25" stroke="#222" stroke-width="0.8"/>
<line x1="35.5" y1="170.48" x2="37.5" y2="170.48" stroke="#222" stroke-width="0.8"/>
<line x1="35.5" y1="173.70" x2="37.5" y2="173.70" stroke="#222" stroke-width="0.8"/>
<line x1="34" y1="176.93" x2="37.5" y2="176.93" stroke="#222" stroke-width="0.8"/>
<line x1="35.5" y1="180.15" x2="37.5" y2="180.15" stroke="#222" stroke-width="0.8"/>
<line x1="35.5" y1="183.38" x2="37.5" y2="183.38" stroke="#222" stroke-width="0.8"/>
<line x1="35.5" y1="186.60" x2="37.5" y2="186.60" stroke="#222" stroke-width="0.8"/>
<line x1="35.5" y1="189.83" x2="37.5" y2="189.83" stroke="#222" stroke-width="0.8"/>
<text transform="translate(28.9 162.2) rotate(90)" font-size="6.2" fill="#000" textLength="9.2" lengthAdjust="spacingAndGlyphs">2 m</text>
<line x1="27.5" y1="193.05" x2="37.5" y2="193.05" stroke="#222" stroke-width="0.9"/>
<line x1="35.5" y1="196.28" x2="37.5" y2="196.28" stroke="#222" stroke-width="0.8"/>
<line x1="35.5" y1="199.50" x2="37.5" y2="199.50" stroke="#222" stroke-width="0.8"/>
<line x1="35.5" y1="202.73" x2="37.5" y2="202.73" stroke="#222" stroke-width="0.8"/>
<line x1="35.5" y1="205.95" x2="37.5" y2="205.95" stroke="#222" stroke-width="0.8"/>
<line x1="34" y1="209.18" x2="37.5" y2="209.18" stroke="#222" stroke-width="0.8"/>
<line x1="35.5" y1="212.40" x2="37.5" y2="212.40" stroke="#222" stroke-width="0.8"/>
<line x1="35.5" y1="215.62" x2="37.5" y2="215.62" stroke="#222" stroke-width="0.8"/>
<line x1="35.5" y1="218.85" x2="37.5" y2="218.85" stroke="#222" stroke-width="0.8"/>
<line x1="35.5" y1="222.08" x2="37.5" y2="222.08" stroke="#222" stroke-width="0.8"/>
<text transform="translate(28.9 194.5) rotate(90)" font-size="6.2" fill="#000" textLength="9.2" lengthAdjust="spacingAndGlyphs">3 m</text>
<line x1="27.5" y1="225.30" x2="37.5" y2="225.30" stroke="#222" stroke-width="0.9"/>
<line x1="35.5" y1="228.53" x2="37.5" y2="228.53" stroke="#222" stroke-width="0.8"/>
<line x1="35.5" y1="231.75" x2="37.5" y2="231.75" stroke="#222" stroke-width="0.8"/>
<line x1="35.5" y1="234.98" x2="37.5" y2="234.98" stroke="#222" stroke-width="0.8"/>
<line x1="35.5" y1="238.20" x2="37.5" y2="238.20" stroke="#222" stroke-width="0.8"/>
<line x1="34" y1="241.43" x2="37.5" y2="241.43" stroke="#222" stroke-width="0.8"/>
<line x1="35.5" y1="244.65" x2="37.5" y2="244.65" stroke="#222" stroke-width="0.8"/>
<line x1="35.5" y1="247.88" x2="37.5" y2="247.88" stroke="#222" stroke-width="0.8"/>
<line x1="35.5" y1="251.10" x2="37.5" y2="251.10" stroke="#222" stroke-width="0.8"/>
<line x1="35.5" y1="254.33" x2="37.5" y2="254.33" stroke="#222" stroke-width="0.8"/>
<text transform="translate(28.9 226.7) rotate(90)" font-size="6.2" fill="#000" textLength="9.2" lengthAdjust="spacingAndGlyphs">4 m</text>
<line x1="27.5" y1="257.55" x2="37.5" y2="257.55" stroke="#222" stroke-width="0.9"/>
<line x1="35.5" y1="260.78" x2="37.5" y2="260.78" stroke="#222" stroke-width="0.8"/>
<line x1="35.5" y1="264.00" x2="37.5" y2="264.00" stroke="#222" stroke-width="0.8"/>
<line x1="35.5" y1="267.23" x2="37.5" y2="267.23" stroke="#222" stroke-width="0.8"/>
<line x1="35.5" y1="270.45" x2="37.5" y2="270.45" stroke="#222" stroke-width="0.8"/>
<line x1="34" y1="273.68" x2="37.5" y2="273.68" stroke="#222" stroke-width="0.8"/>
<line x1="35.5" y1="276.90" x2="37.5" y2="276.90" stroke="#222" stroke-width="0.8"/>
<line x1="35.5" y1="280.12" x2="37.5" y2="280.12" stroke="#222" stroke-width="0.8"/>
<line x1="35.5" y1="283.35" x2="37.5" y2="283.35" stroke="#222" stroke-width="0.8"/>
<line x1="35.5" y1="286.57" x2="37.5" y2="286.57" stroke="#222" stroke-width="0.8"/>
<text transform="translate(28.9 258.9) rotate(90)" font-size="6.2" fill="#000" textLength="9.2" lengthAdjust="spacingAndGlyphs">5 m</text>
<line x1="27.5" y1="289.80" x2="37.5" y2="289.80" stroke="#222" stroke-width="0.9"/>
<line x1="35.5" y1="293.03" x2="37.5" y2="293.03" stroke="#222" stroke-width="0.8"/>
<line x1="35.5" y1="296.25" x2="37.5" y2="296.25" stroke="#222" stroke-width="0.8"/>
<line x1="35.5" y1="299.48" x2="37.5" y2="299.48" stroke="#222" stroke-width="0.8"/>
<line x1="35.5" y1="302.70" x2="37.5" y2="302.70" stroke="#222" stroke-width="0.8"/>
<line x1="34" y1="305.93" x2="37.5" y2="305.93" stroke="#222" stroke-width="0.8"/>
<line x1="35.5" y1="309.15" x2="37.5" y2="309.15" stroke="#222" stroke-width="0.8"/>
<line x1="35.5" y1="312.38" x2="37.5" y2="312.38" stroke="#222" stroke-width="0.8"/>
<line x1="35.5" y1="315.60" x2="37.5" y2="315.60" stroke="#222" stroke-width="0.8"/>
<line x1="35.5" y1="318.82" x2="37.5" y2="318.82" stroke="#222" stroke-width="0.8"/>
<text transform="translate(28.9 291.2) rotate(90)" font-size="6.2" fill="#000" textLength="9.2" lengthAdjust="spacingAndGlyphs">6 m</text>
<line x1="27.5" y1="322.05" x2="37.5" y2="322.05" stroke="#222" stroke-width="0.9"/>
<line x1="35.5" y1="325.28" x2="37.5" y2="325.28" stroke="#222" stroke-width="0.8"/>
<line x1="35.5" y1="328.50" x2="37.5" y2="328.50" stroke="#222" stroke-width="0.8"/>
<line x1="35.5" y1="331.73" x2="37.5" y2="331.73" stroke="#222" stroke-width="0.8"/>
<line x1="35.5" y1="334.95" x2="37.5" y2="334.95" stroke="#222" stroke-width="0.8"/>
<line x1="34" y1="338.18" x2="37.5" y2="338.18" stroke="#222" stroke-width="0.8"/>
<line x1="35.5" y1="341.40" x2="37.5" y2="341.40" stroke="#222" stroke-width="0.8"/>
<line x1="35.5" y1="344.62" x2="37.5" y2="344.62" stroke="#222" stroke-width="0.8"/>
<line x1="35.5" y1="347.85" x2="37.5" y2="347.85" stroke="#222" stroke-width="0.8"/>
<line x1="35.5" y1="351.07" x2="37.5" y2="351.07" stroke="#222" stroke-width="0.8"/>
<text transform="translate(28.9 323.4) rotate(90)" font-size="6.2" fill="#000" textLength="9.2" lengthAdjust="spacingAndGlyphs">7 m</text>
<line x1="27.5" y1="354.30" x2="37.5" y2="354.30" stroke="#222" stroke-width="0.9"/>
<line x1="35.5" y1="357.53" x2="37.5" y2="357.53" stroke="#222" stroke-width="0.8"/>
<line x1="35.5" y1="360.75" x2="37.5" y2="360.75" stroke="#222" stroke-width="0.8"/>
<line x1="35.5" y1="363.98" x2="37.5" y2="363.98" stroke="#222" stroke-width="0.8"/>
<line x1="35.5" y1="367.20" x2="37.5" y2="367.20" stroke="#222" stroke-width="0.8"/>
<line x1="34" y1="370.43" x2="37.5" y2="370.43" stroke="#222" stroke-width="0.8"/>
<line x1="35.5" y1="373.65" x2="37.5" y2="373.65" stroke="#222" stroke-width="0.8"/>
<line x1="35.5" y1="376.88" x2="37.5" y2="376.88" stroke="#222" stroke-width="0.8"/>
<line x1="35.5" y1="380.10" x2="37.5" y2="380.10" stroke="#222" stroke-width="0.8"/>
<line x1="35.5" y1="383.32" x2="37.5" y2="383.32" stroke="#222" stroke-width="0.8"/>
<text transform="translate(28.9 355.7) rotate(90)" font-size="6.2" fill="#000" textLength="9.2" lengthAdjust="spacingAndGlyphs">8 m</text>
<line x1="27.5" y1="386.55" x2="37.5" y2="386.55" stroke="#222" stroke-width="0.9"/>
<line x1="35.5" y1="389.78" x2="37.5" y2="389.78" stroke="#222" stroke-width="0.8"/>
<line x1="35.5" y1="393.00" x2="37.5" y2="393.00" stroke="#222" stroke-width="0.8"/>
<line x1="35.5" y1="396.23" x2="37.5" y2="396.23" stroke="#222" stroke-width="0.8"/>
<line x1="35.5" y1="399.45" x2="37.5" y2="399.45" stroke="#222" stroke-width="0.8"/>
<line x1="34" y1="402.68" x2="37.5" y2="402.68" stroke="#222" stroke-width="0.8"/>
<line x1="35.5" y1="405.90" x2="37.5" y2="405.90" stroke="#222" stroke-width="0.8"/>
<line x1="35.5" y1="409.12" x2="37.5" y2="409.12" stroke="#222" stroke-width="0.8"/>
<line x1="35.5" y1="412.35" x2="37.5" y2="412.35" stroke="#222" stroke-width="0.8"/>
<line x1="35.5" y1="415.57" x2="37.5" y2="415.57" stroke="#222" stroke-width="0.8"/>
<text transform="translate(28.9 387.9) rotate(90)" font-size="6.2" fill="#000" textLength="9.2" lengthAdjust="spacingAndGlyphs">9 m</text>
<line x1="27.5" y1="418.80" x2="37.5" y2="418.80" stroke="#222" stroke-width="0.9"/>
<line x1="35.5" y1="422.03" x2="37.5" y2="422.03" stroke="#222" stroke-width="0.8"/>
<line x1="35.5" y1="425.25" x2="37.5" y2="425.25" stroke="#222" stroke-width="0.8"/>
<line x1="35.5" y1="428.48" x2="37.5" y2="428.48" stroke="#222" stroke-width="0.8"/>
<line x1="35.5" y1="431.70" x2="37.5" y2="431.70" stroke="#222" stroke-width="0.8"/>
<line x1="34" y1="434.93" x2="37.5" y2="434.93" stroke="#222" stroke-width="0.8"/>
<line x1="35.5" y1="438.15" x2="37.5" y2="438.15" stroke="#222" stroke-width="0.8"/>
<line x1="35.5" y1="441.38" x2="37.5" y2="441.38" stroke="#222" stroke-width="0.8"/>
<line x1="35.5" y1="444.60" x2="37.5" y2="444.60" stroke="#222" stroke-width="0.8"/>
<line x1="35.5" y1="447.82" x2="37.5" y2="447.82" stroke="#222" stroke-width="0.8"/>
<text transform="translate(28.9 420.2) rotate(90)" font-size="6.2" fill="#000" textLength="12.2" lengthAdjust="spacingAndGlyphs">10 m</text>
<line x1="27.5" y1="451.05" x2="37.5" y2="451.05" stroke="#222" stroke-width="0.9"/>
<line x1="35.5" y1="454.28" x2="37.5" y2="454.28" stroke="#222" stroke-width="0.8"/>
<line x1="35.5" y1="457.50" x2="37.5" y2="457.50" stroke="#222" stroke-width="0.8"/>
<line x1="35.5" y1="460.73" x2="37.5" y2="460.73" stroke="#222" stroke-width="0.8"/>
<line x1="35.5" y1="463.95" x2="37.5" y2="463.95" stroke="#222" stroke-width="0.8"/>
<line x1="34" y1="467.18" x2="37.5" y2="467.18" stroke="#222" stroke-width="0.8"/>
<line x1="35.5" y1="470.40" x2="37.5" y2="470.40" stroke="#222" stroke-width="0.8"/>
<line x1="35.5" y1="473.62" x2="37.5" y2="473.62" stroke="#222" stroke-width="0.8"/>
<line x1="35.5" y1="476.85" x2="37.5" y2="476.85" stroke="#222" stroke-width="0.8"/>
<line x1="35.5" y1="480.07" x2="37.5" y2="480.07" stroke="#222" stroke-width="0.8"/>
<text transform="translate(28.9 452.4) rotate(90)" font-size="6.2" fill="#000" textLength="12.2" lengthAdjust="spacingAndGlyphs">11 m</text>
<line x1="27.5" y1="483.30" x2="37.5" y2="483.30" stroke="#222" stroke-width="0.9"/>
<line x1="35.5" y1="486.53" x2="37.5" y2="486.53" stroke="#222" stroke-width="0.8"/>
<line x1="35.5" y1="489.75" x2="37.5" y2="489.75" stroke="#222" stroke-width="0.8"/>
<line x1="35.5" y1="492.98" x2="37.5" y2="492.98" stroke="#222" stroke-width="0.8"/>
<line x1="35.5" y1="496.20" x2="37.5" y2="496.20" stroke="#222" stroke-width="0.8"/>
<line x1="34" y1="499.43" x2="37.5" y2="499.43" stroke="#222" stroke-width="0.8"/>
<line x1="35.5" y1="502.65" x2="37.5" y2="502.65" stroke="#222" stroke-width="0.8"/>
<line x1="35.5" y1="505.88" x2="37.5" y2="505.88" stroke="#222" stroke-width="0.8"/>
<line x1="35.5" y1="509.10" x2="37.5" y2="509.10" stroke="#222" stroke-width="0.8"/>
<line x1="35.5" y1="512.33" x2="37.5" y2="512.33" stroke="#222" stroke-width="0.8"/>
<text transform="translate(28.9 484.7) rotate(90)" font-size="6.2" fill="#000" textLength="12.2" lengthAdjust="spacingAndGlyphs">12 m</text>
<line x1="27.5" y1="515.55" x2="37.5" y2="515.55" stroke="#222" stroke-width="0.9"/>
<line x1="35.5" y1="518.77" x2="37.5" y2="518.77" stroke="#222" stroke-width="0.8"/>
<line x1="35.5" y1="522.00" x2="37.5" y2="522.00" stroke="#222" stroke-width="0.8"/>
<line x1="35.5" y1="525.22" x2="37.5" y2="525.22" stroke="#222" stroke-width="0.8"/>
<line x1="35.5" y1="528.45" x2="37.5" y2="528.45" stroke="#222" stroke-width="0.8"/>
<line x1="34" y1="531.67" x2="37.5" y2="531.67" stroke="#222" stroke-width="0.8"/>
<line x1="35.5" y1="534.90" x2="37.5" y2="534.90" stroke="#222" stroke-width="0.8"/>
<line x1="35.5" y1="538.12" x2="37.5" y2="538.12" stroke="#222" stroke-width="0.8"/>
<line x1="35.5" y1="541.35" x2="37.5" y2="541.35" stroke="#222" stroke-width="0.8"/>
<line x1="35.5" y1="544.57" x2="37.5" y2="544.57" stroke="#222" stroke-width="0.8"/>
<text transform="translate(28.9 516.9) rotate(90)" font-size="6.2" fill="#000" textLength="12.2" lengthAdjust="spacingAndGlyphs">13 m</text>
<line x1="27.5" y1="547.80" x2="37.5" y2="547.80" stroke="#222" stroke-width="0.9"/>
<line x1="35.5" y1="551.02" x2="37.5" y2="551.02" stroke="#222" stroke-width="0.8"/>
<line x1="35.5" y1="554.25" x2="37.5" y2="554.25" stroke="#222" stroke-width="0.8"/>
<line x1="35.5" y1="557.47" x2="37.5" y2="557.47" stroke="#222" stroke-width="0.8"/>
<line x1="35.5" y1="560.70" x2="37.5" y2="560.70" stroke="#222" stroke-width="0.8"/>
<line x1="34" y1="563.92" x2="37.5" y2="563.92" stroke="#222" stroke-width="0.8"/>
<line x1="35.5" y1="567.15" x2="37.5" y2="567.15" stroke="#222" stroke-width="0.8"/>
<line x1="35.5" y1="570.38" x2="37.5" y2="570.38" stroke="#222" stroke-width="0.8"/>
<line x1="35.5" y1="573.60" x2="37.5" y2="573.60" stroke="#222" stroke-width="0.8"/>
<line x1="35.5" y1="576.82" x2="37.5" y2="576.82" stroke="#222" stroke-width="0.8"/>
<text transform="translate(28.9 549.2) rotate(90)" font-size="6.2" fill="#000" textLength="12.2" lengthAdjust="spacingAndGlyphs">14 m</text>
<line x1="27.5" y1="580.05" x2="37.5" y2="580.05" stroke="#222" stroke-width="0.9"/>
<line x1="35.5" y1="583.27" x2="37.5" y2="583.27" stroke="#222" stroke-width="0.8"/>
<line x1="35.5" y1="586.50" x2="37.5" y2="586.50" stroke="#222" stroke-width="0.8"/>
<line x1="35.5" y1="589.72" x2="37.5" y2="589.72" stroke="#222" stroke-width="0.8"/>
<line x1="35.5" y1="592.95" x2="37.5" y2="592.95" stroke="#222" stroke-width="0.8"/>
<line x1="34" y1="596.17" x2="37.5" y2="596.17" stroke="#222" stroke-width="0.8"/>
<text transform="translate(28.9 581.4) rotate(90)" font-size="6.2" fill="#000" textLength="12.2" lengthAdjust="spacingAndGlyphs">15 m</text></g>
<line x1="28" y1="219.6" x2="37" y2="219.6" stroke="#8e8e92" stroke-width="1.2"/>
<line x1="37.5" y1="87" x2="37.5" y2="597.0" stroke="#222" stroke-width="0.8"/>
<line x1="27.5" y1="97.1" x2="37.5" y2="97.1" stroke="#222" stroke-width="0.7"/>
<line x1="0" y1="86.7" x2="1024" y2="86.7" stroke="#888a92" stroke-width="1"/>
<rect x="27.5" y="87.2" width="10" height="9.6" fill="#f2f2f5"/>
<path d="M32.6 88.2 V96 M28.6 92.1 H36.6" stroke="#111" stroke-width="0.7"/><circle cx="32.6" cy="92.1" r="1.6" fill="#f2f2f5" stroke="#111" stroke-width="0.6"/>
<rect x="1016.6" y="87" width="7.399999999999977" height="520.3" fill="#f0f0f0"/>
<rect x="1017" y="339.9" width="7" height="50.8" fill="#cdcdcd"/>
<path d="M1018.2 94.2 L1020.8 91.4 L1023.4 94.2" fill="none" stroke="#505050" stroke-width="1"/>
<path d="M1018.4 589.6 L1021 592.4 L1023.6 589.6" fill="none" stroke="#505050" stroke-width="1"/>
<rect x="27.5" y="597.0" width="996.5" height="10.299999999999955" fill="#f0f0f0"/>
<rect x="439.6" y="597.7" width="101.4" height="9" fill="#cdcdcd"/>
<path d="M34.2 599.8 L31.6 602.2 L34.2 604.6" fill="none" stroke="#404040" stroke-width="1"/>
<path d="M1010.4 599.4 L1013 601.8 L1010.4 604.2" fill="none" stroke="#404040" stroke-width="1"/>
<g clip-path="url(#wm)" fill="#9a9a9a" fill-opacity="0.55"><text x="1004.5" y="593" font-size="12">Activate Windows</text><text x="1003" y="605.5" font-size="8.5">Go to Settings to activate Windows.</text></g>
<clipPath id="wm"><rect x="1000" y="578" width="24" height="30"/></clipPath>
<rect x="0" y="87" width="27.5" height="540" fill="url(#ltool)"/>
<line x1="27.2" y1="87" x2="27.2" y2="607" stroke="#7d7f87" stroke-width="0.9"/>
<rect x="1.3" y="197.70000000000002" width="24.4" height="24.3" rx="2.6" fill="url(#hot)" stroke="#efb860" stroke-width="0.8"/><rect x="2.2" y="198.60000000000002" width="22.6" height="22.5" rx="2" fill="none" stroke="#fff3d8" stroke-opacity="0.7" stroke-width="0.7"/>
<rect x="1.3" y="304.7" width="24.4" height="24.3" rx="2.6" fill="url(#hot)" stroke="#efb860" stroke-width="0.8"/><rect x="2.2" y="305.6" width="22.6" height="22.5" rx="2" fill="none" stroke="#fff3d8" stroke-opacity="0.7" stroke-width="0.7"/>
<path d="M5.2 94.6 L20.4 100.8 L16.5 103.5 L21.3 108.4 L18.5 110.5 L13.8 105.8 L10.9 109.6 Z" fill="#f4f4f5" stroke="#bfc0c6" stroke-width="0.9" stroke-linejoin="round"/>
<path d="M11.0 124.7 A5.2 5.2 0 1 1 11.6 133.3" fill="none" stroke="#c0c1c7" stroke-width="3.8" stroke-linecap="butt"/>
<path d="M11.0 124.7 A5.2 5.2 0 1 1 11.6 133.3" fill="none" stroke="#f5f5f6" stroke-width="2.5" stroke-linecap="butt"/>
<path d="M4.3 126.4 L11.2 122 L9 130.8 Z" fill="#f3f3f5" stroke="#c0c1c7" stroke-width="0.7" stroke-linejoin="round"/>
<rect x="11" y="147.6" width="10.2" height="9.8" fill="#e4e4e6" stroke="#bdbdc2" stroke-width="0.8"/>
<rect x="4.8" y="159" width="4.4" height="4.4" fill="#f0f0f0" stroke="#b0b0b6" stroke-width="0.7"/>
<line x1="8" y1="160" x2="13.6" y2="154.4" stroke="#f0403a" stroke-width="1.3"/><circle cx="13.6" cy="154.4" r="1.2" fill="#f0403a"/>
<path d="M4.6 190.6 C6 183 12 177.6 20.4 176.2" fill="none" stroke="#b2b4ba" stroke-width="1.3"/><path d="M10 184.6 L14.4 188.6 M14 180.6 L17.6 184.4" stroke="#b2b4ba" stroke-width="1"/><path d="M9 195 C10 190 14 186.4 19.4 185.6" fill="none" stroke="#c2c4ca" stroke-width="1.1"/>
<path d="M8.2 213.4 L5.4 208.4 C4.6 206.6 6.8 205.6 7.8 207.2 L9.4 209.4 L9 202.6 C9 200.8 11.2 200.8 11.4 202.6 L11.8 206.6 L12.2 200.8 C12.4 199 14.6 199.2 14.6 201 L14.6 206.6 L15.6 201.8 C16 200.2 18 200.6 17.8 202.4 L17.2 207.6 L18.8 204.6 C19.6 203.2 21.4 204 20.8 205.6 L18.8 212 C18.4 214.6 17.4 216.6 17 218.6 L10.2 218.6 C10 216.6 9.2 215 8.2 213.4 Z" fill="#ffffff" stroke="#8a6a3a" stroke-width="0.7" stroke-linejoin="round"/>
<line x1="14.0" y1="236.60000000000002" x2="21.0" y2="244.20000000000002" stroke="#26262a" stroke-width="2.7" stroke-linecap="round"/>
<circle cx="11.4" cy="233.8" r="4.9" fill="#a9adb4"/><circle cx="11.4" cy="233.8" r="4.4" fill="#eef1f5"/><circle cx="11.4" cy="233.8" r="3.4" fill="#b4dbf4"/>
<ellipse cx="10.8" cy="232.60000000000002" rx="2.6" ry="1.6" fill="#ffffff" fill-opacity="0.75"/>
<path d="M4.6 256.6 V253.8 H7.4 M15.6 253.8 H18.4 V256.6 M4.6 264.2 V267 H7.4 M18.4 264.2 V266" fill="none" stroke="#3a3a40" stroke-width="0.9"/>
<line x1="14.0" y1="263.40000000000003" x2="21.0" y2="271.0" stroke="#26262a" stroke-width="2.7" stroke-linecap="round"/>
<circle cx="11.4" cy="260.6" r="4.9" fill="#a9adb4"/><circle cx="11.4" cy="260.6" r="4.4" fill="#eef1f5"/><circle cx="11.4" cy="260.6" r="3.4" fill="#b4dbf4"/>
<ellipse cx="10.8" cy="259.40000000000003" rx="2.6" ry="1.6" fill="#ffffff" fill-opacity="0.75"/>
<rect x="4.6" y="280.6" width="13.6" height="12.6" fill="#ebebee" stroke="#4a4a50" stroke-width="0.9"/>
<line x1="13.799999999999999" y1="289.6" x2="20.799999999999997" y2="297.2" stroke="#26262a" stroke-width="2.7" stroke-linecap="round"/>
<circle cx="11.2" cy="286.8" r="4.9" fill="#a9adb4"/><circle cx="11.2" cy="286.8" r="4.4" fill="#eef1f5"/><circle cx="11.2" cy="286.8" r="3.4" fill="#b4dbf4"/>
<ellipse cx="10.6" cy="285.6" rx="2.6" ry="1.6" fill="#ffffff" fill-opacity="0.75"/>
<path d="M10.1 309.4 L21.5 311.8 L17.5 324.9 L4.7 321.5 Z" fill="#55913f" stroke="#9dbb7c" stroke-width="0.6"/>
<path d="M8.8 312.4 L20.5 315.1 M12.9 310.0 L7.9 322.4 M7.4 315.4 L19.5 318.4 M15.8 310.6 L11.1 323.2 M6.0 318.5 L18.5 321.6 M18.6 311.2 L14.3 324.0" stroke="#b7d29a" stroke-width="0.6" fill="none"/>
<g transform="translate(12.6 342.4) rotate(-40) scale(1.15)"><path d="M-5.4 5.2 V-0.6 A5.4 5.4 0 0 1 5.4 -0.6 V5.2 H2 V-0.4 A2 2 0 0 0 -2 -0.4 V5.2 Z" fill="#d64c4c" stroke="#a83434" stroke-width="0.5"/><path d="M-4.2 2 V-0.6 A4.2 4.2 0 0 1 1.6 -4.4" fill="none" stroke="#f0a0a0" stroke-width="0.8" stroke-opacity="0.8"/><rect x="-5.4" y="3" width="3.4" height="2.6" fill="#ececec" stroke="#999" stroke-width="0.4"/><rect x="2" y="3" width="3.4" height="2.6" fill="#ececec" stroke="#999" stroke-width="0.4"/></g>
<g transform="translate(11.4 367.6) rotate(-40) scale(1.0)"><path d="M-5.4 5.2 V-0.6 A5.4 5.4 0 0 1 5.4 -0.6 V5.2 H2 V-0.4 A2 2 0 0 0 -2 -0.4 V5.2 Z" fill="#d64c4c" stroke="#a83434" stroke-width="0.5"/><path d="M-4.2 2 V-0.6 A4.2 4.2 0 0 1 1.6 -4.4" fill="none" stroke="#f0a0a0" stroke-width="0.8" stroke-opacity="0.8"/><rect x="-5.4" y="3" width="3.4" height="2.6" fill="#ececec" stroke="#999" stroke-width="0.4"/><rect x="2" y="3" width="3.4" height="2.6" fill="#ececec" stroke="#999" stroke-width="0.4"/></g>
<path d="M15 377.2 h1.4 M17.6 377.2 h1.4 M20.2 377.2 h1.4" stroke="#111" stroke-width="1.2"/>
<rect x="0" y="0" width="1024" height="22" fill="#ffffff"/>
<clipPath id="aic"><circle cx="5.6" cy="3.2" r="4.9"/></clipPath><g clip-path="url(#aic)"><rect x="0" y="-2" width="12" height="11" fill="#6b6440"/><rect x="0" y="-2" width="12" height="3.4" fill="#4a4630"/><ellipse cx="5.6" cy="3.6" rx="4" ry="2.1" fill="#d9d3a4"/><circle cx="4.2" cy="3.4" r="1.2" fill="#f6f4e6"/><circle cx="7" cy="3.8" r="1.1" fill="#efe9b8"/><circle cx="5.6" cy="2.6" r="0.8" fill="#e8c04a"/><rect x="0" y="5.6" width="12" height="3" fill="#3f7a2c"/></g><circle cx="5.6" cy="3.2" r="4.9" fill="none" stroke="#3d3a28" stroke-width="0.6"/>
<text x="13.8" y="6.1" font-size="8.2" fill="#101010" text-anchor="start" textLength="222.0" lengthAdjust="spacingAndGlyphs" >Realtime Landscaping Pro 2018 by Idea Spectrum - Bara terassen.rlp</text>
<text x="4.2" y="18.9" font-size="8.4" fill="#101018" text-anchor="start" textLength="10.8" lengthAdjust="spacingAndGlyphs" >File</text>
<text x="23.8" y="18.9" font-size="8.4" fill="#101018" text-anchor="start" textLength="12.4" lengthAdjust="spacingAndGlyphs" >Edit</text>
<text x="45.0" y="18.9" font-size="8.4" fill="#101018" text-anchor="start" textLength="13.8" lengthAdjust="spacingAndGlyphs" >Add</text>
<text x="67.5" y="18.9" font-size="8.4" fill="#101018" text-anchor="start" textLength="26.3" lengthAdjust="spacingAndGlyphs" >Settings</text>
<text x="102.5" y="18.9" font-size="8.4" fill="#101018" text-anchor="start" textLength="15.5" lengthAdjust="spacingAndGlyphs" >View</text>
<text x="127.0" y="18.9" font-size="8.4" fill="#101018" text-anchor="start" textLength="17.5" lengthAdjust="spacingAndGlyphs" >Tools</text>
<text x="153.0" y="18.9" font-size="8.4" fill="#101018" text-anchor="start" textLength="15.8" lengthAdjust="spacingAndGlyphs" >Help</text>
<rect x="0" y="22" width="1024" height="15.8" fill="url(#tabstrip)"/>
<path d="M4.3 37.8 V26.2 Q4.3 24.4 6.1 24.4 H24.4 Q26.2 24.4 26.2 26.2 V37.8 Z" fill="url(#maintab)"/>
<text x="8.0" y="33.5" font-size="7.6" fill="#1a1a2a" text-anchor="start" textLength="14.0" lengthAdjust="spacingAndGlyphs" >Main</text>
<text x="31.8" y="33.5" font-size="7.6" fill="#eef0f4" text-anchor="start" textLength="22.7" lengthAdjust="spacingAndGlyphs" >Building</text>
<text x="64.5" y="33.5" font-size="7.6" fill="#eef0f4" text-anchor="start" textLength="20.5" lengthAdjust="spacingAndGlyphs" >Terrain</text>
<text x="94.5" y="33.5" font-size="7.6" fill="#eef0f4" text-anchor="start" textLength="32.5" lengthAdjust="spacingAndGlyphs" >Landscape</text>
<text x="136.8" y="33.5" font-size="7.6" fill="#eef0f4" text-anchor="start" textLength="45.2" lengthAdjust="spacingAndGlyphs" >Water Features</text>
<text x="191.8" y="33.5" font-size="7.6" fill="#eef0f4" text-anchor="start" textLength="44.4" lengthAdjust="spacingAndGlyphs" >Swimming Pool</text>
<text x="245.8" y="33.5" font-size="7.6" fill="#eef0f4" text-anchor="start" textLength="19.7" lengthAdjust="spacingAndGlyphs" >Utilities</text>
<text x="276.0" y="33.5" font-size="7.6" fill="#eef0f4" text-anchor="start" textLength="26.2" lengthAdjust="spacingAndGlyphs" >Modeling</text>
<rect x="0" y="37.8" width="1024" height="48.6" fill="url(#ribbon)"/>
<line x1="59.3" y1="41" x2="59.3" y2="82.4" stroke="#b4b7c4" stroke-width="0.8"/><line x1="60.199999999999996" y1="41" x2="60.199999999999996" y2="82.4" stroke="#f4f6fa" stroke-width="0.8"/>
<line x1="172.7" y1="41" x2="172.7" y2="82.4" stroke="#b4b7c4" stroke-width="0.8"/><line x1="173.6" y1="41" x2="173.6" y2="82.4" stroke="#f4f6fa" stroke-width="0.8"/>
<line x1="261.1" y1="41" x2="261.1" y2="82.4" stroke="#b4b7c4" stroke-width="0.8"/><line x1="262.0" y1="41" x2="262.0" y2="82.4" stroke="#f4f6fa" stroke-width="0.8"/>
<line x1="322" y1="41" x2="322" y2="82.4" stroke="#b4b7c4" stroke-width="0.8"/><line x1="322.9" y1="41" x2="322.9" y2="82.4" stroke="#f4f6fa" stroke-width="0.8"/>
<text x="8.0" y="71.6" font-size="7.6" fill="#27325a" text-anchor="start" textLength="15.2" lengthAdjust="spacingAndGlyphs" >Undo</text>
<text x="36.5" y="71.6" font-size="7.6" fill="#a4a6ae" text-anchor="start" textLength="15.5" lengthAdjust="spacingAndGlyphs" >Redo</text>
<text x="67.0" y="71.6" font-size="7.6" fill="#27325a" text-anchor="start" textLength="16.5" lengthAdjust="spacingAndGlyphs" >Open</text>
<text x="96.5" y="71.6" font-size="7.6" fill="#27325a" text-anchor="start" textLength="15.0" lengthAdjust="spacingAndGlyphs" >Save</text>
<text x="122.0" y="71.8" font-size="7.6" fill="#27325a" text-anchor="start" textLength="45.9" lengthAdjust="spacingAndGlyphs" >Print Top-Down</text>
<text x="137.8" y="79.6" font-size="7.6" fill="#27325a" text-anchor="start" textLength="13.9" lengthAdjust="spacingAndGlyphs" >View</text>
<text x="182.8" y="71.6" font-size="7.6" fill="#a4a6ae" text-anchor="start" textLength="9.9" lengthAdjust="spacingAndGlyphs" >Cut</text>
<text x="208.8" y="71.6" font-size="7.6" fill="#a4a6ae" text-anchor="start" textLength="15.2" lengthAdjust="spacingAndGlyphs" >Copy</text>
<text x="237.0" y="71.6" font-size="7.6" fill="#a4a6ae" text-anchor="start" textLength="15.8" lengthAdjust="spacingAndGlyphs" >Paste</text>
<text x="266.0" y="71.7" font-size="7.6" fill="#a4a6ae" text-anchor="start" textLength="21.5" lengthAdjust="spacingAndGlyphs" >Bring to</text>
<text x="269.5" y="79.5" font-size="7.6" fill="#a4a6ae" text-anchor="start" textLength="14.1" lengthAdjust="spacingAndGlyphs" >Front</text>
<text x="295.0" y="71.7" font-size="7.6" fill="#a4a6ae" text-anchor="start" textLength="22.0" lengthAdjust="spacingAndGlyphs" >Send to</text>
<text x="298.8" y="79.5" font-size="7.6" fill="#a4a6ae" text-anchor="start" textLength="14.1" lengthAdjust="spacingAndGlyphs" >Back</text>
<text x="329.7" y="71.7" font-size="7.6" fill="#a4a6ae" text-anchor="start" textLength="16.0" lengthAdjust="spacingAndGlyphs" >Mirror</text>
<text x="360.4" y="71.7" font-size="7.6" fill="#a4a6ae" text-anchor="start" textLength="11.6" lengthAdjust="spacingAndGlyphs" >Add</text>
<text x="355.5" y="79.5" font-size="7.6" fill="#a4a6ae" text-anchor="start" textLength="21.5" lengthAdjust="spacingAndGlyphs" >shapes</text>
<text x="383.8" y="71.7" font-size="7.6" fill="#a4a6ae" text-anchor="start" textLength="24.4" lengthAdjust="spacingAndGlyphs" >Subtract</text>
<text x="385.7" y="79.5" font-size="7.6" fill="#a4a6ae" text-anchor="start" textLength="21.1" lengthAdjust="spacingAndGlyphs" >shapes</text>
<text x="415.0" y="71.7" font-size="7.6" fill="#a4a6ae" text-anchor="start" textLength="24.8" lengthAdjust="spacingAndGlyphs" >Intersect</text>
<text x="416.6" y="79.5" font-size="7.6" fill="#a4a6ae" text-anchor="start" textLength="21.3" lengthAdjust="spacingAndGlyphs" >shapes</text>
<path d="M5.6 60.4 L8.4 48.6 L11.4 51.6 C15 47 21 45.4 24.4 49.4 C26 52 25.2 56 23.4 58.6 C23.6 55 22.4 52.4 19.8 52.2 C17.4 52.2 15.6 53.8 14.6 55.4 L17 58 Z" fill="#ededed" stroke="#b2b2b6" stroke-width="0.8" stroke-linejoin="round"/>
<g transform="translate(59.6 0) scale(-1 1)" opacity="0.7"><path d="M5.6 60.4 L8.4 48.6 L11.4 51.6 C15 47 21 45.4 24.4 49.4 C26 52 25.2 56 23.4 58.6 C23.6 55 22.4 52.4 19.8 52.2 C17.4 52.2 15.6 53.8 14.6 55.4 L17 58 Z" fill="#e4e4e6" stroke="#bcbcc0" stroke-width="0.8" stroke-linejoin="round"/></g>
<path d="M69 47.2 L75 46.2 L76.4 47.8 L85 46.6 L85.6 60.8 L70.4 59 Z" fill="#e8d86a" stroke="#c9b94c" stroke-width="0.5"/>
<path d="M66.2 51.4 L81.6 50.2 L85.6 60.8 L70.6 59.4 Z" fill="#f3ea8e" stroke="#cfc25a" stroke-width="0.5"/>
<path d="M79.4 49.6 C75.4 50.2 72.8 52 72.2 54.4 L69.6 53.4 L71.4 60 L77.8 56.6 L75.4 55.6 C75.8 53.4 77.2 51.4 79.4 49.6 Z" fill="#62c43c" stroke="#3f9f26" stroke-width="0.4"/>
<path d="M99.6 53.2 L113.6 53.8 L109.6 63 L94.4 61.2 Z" fill="#2a2a2c"/>
<path d="M101.2 53.6 L110.8 54 L109.4 57.4 L99.6 56.8 Z" fill="#f0a0a0"/>
<path d="M98.6 58.8 L106.2 59.4 L105 62.2 L97.2 61.4 Z" fill="#f4f4f4"/>
<path d="M102 44.2 H107.4 V49.6 H110 L104.8 55 L99.4 49.6 H102 Z" fill="#6acb48" stroke="#3f9f26" stroke-width="0.4"/>
<path d="M142.4 44.2 L151.4 45 L150.2 51.6 L140.4 50.8 Z" fill="#f4f4f5" stroke="#bdbdc1" stroke-width="0.5"/>
<path d="M143.6 46 L150.8 46.6 L150.2 49 L143 48.4 Z" fill="#d9d9dc"/>
<path d="M139.6 50 L152.4 51 Q154.4 53 154 57 L152.8 60.2 L148.4 63 L136 60.6 L136.4 55.2 Z" fill="#e9e9eb" stroke="#a2a2a6" stroke-width="0.5"/>
<path d="M139.2 50.8 L150.6 51.8 L149.6 56.4 L137 55.2 Z" fill="#4a4a4e"/>
<path d="M138.6 52.6 L150 53.6" stroke="#8a8a8e" stroke-width="0.6"/>
<path d="M138.6 57.6 L148.8 58.6 L147 62.4 L136.6 60.4 Z" fill="#fbfbfb" stroke="#8e8e92" stroke-width="0.4"/>
<g fill="none" stroke="#b9b9be" stroke-width="1.1"><path d="M186.8 44.6 L190.4 57"/><path d="M178.4 50.4 L191.6 55"/><ellipse cx="190.2" cy="60" rx="1.8" ry="2.8" transform="rotate(-12 190.2 60)"/><ellipse cx="194.6" cy="54.6" rx="2.8" ry="1.8" transform="rotate(-20 194.6 54.6)"/></g>
<path d="M208.6 45 H217.4 L220 47.4 V59 H208.6 Z" fill="#e2e2e4" stroke="#c2c2c6" stroke-width="0.6"/>
<path d="M213.8 48.4 H223 L225.6 50.8 V62.8 H213.8 Z" fill="#e6e6e8" stroke="#c2c2c6" stroke-width="0.6"/>
<path d="M215.6 52.6 H223.6 M215.6 54.8 H223.6 M215.6 57 H223.6 M215.6 59.2 H223.6" stroke="#cbcbcf" stroke-width="0.6"/>
<path d="M241.6 46 H254.2 V62.6 H241.6 Z" fill="#a9a9ad" stroke="#98989c" stroke-width="0.5"/>
<rect x="245.4" y="44.8" width="5.2" height="2.6" fill="#8e8e92"/>
<path d="M236.8 50.6 H246.6 V62.8 H236.8 Z" fill="#e8e8ea" stroke="#c2c2c6" stroke-width="0.6"/>
<path d="M238.4 53.2 H245 M238.4 55.4 H245 M238.4 57.6 H245 M238.4 59.8 H245" stroke="#cfcfd3" stroke-width="0.6"/>
<path d="M267.4 57 L273 52.8 L286.4 54.6 L281.4 59.6 Z" fill="#e0e0e3" stroke="#c6c6ca" stroke-width="0.5"/>
<path d="M267.4 60.2 L273 56.4 L286.4 58 L281.4 62.6 Z" fill="#e9e9ec" stroke="#c6c6ca" stroke-width="0.5" fill-opacity="0.9"/>
<path d="M267.6 52.6 L273.4 48.6 L286.4 50.2 L281.6 55 Z" fill="#d3d3d7" stroke="#c2c2c6" stroke-width="0.5"/>
<path d="M277.4 55.6 V46.4" stroke="#55555a" stroke-width="1"/><path d="M275.4 47.2 L277.4 44.4 L279.4 47.2 Z" fill="#55555a"/>
<path d="M296.2 51 L302.6 45 L315.4 46.2 L309.8 52.8 Z" fill="#dcdce0" stroke="#c2c2c6" stroke-width="0.5"/>
<path d="M296.2 54.6 L302.6 48.6 L315.4 49.8 L309.8 56.4 Z" fill="#e6e6e9" stroke="#c6c6ca" stroke-width="0.5" fill-opacity="0.92"/>
<path d="M305.4 54 V61" stroke="#6a6a70" stroke-width="1"/><path d="M303.4 60.2 L305.4 63.2 L307.4 60.2 Z" fill="#6a6a70"/>
<path d="M327.8 48.6 L335.6 53.6 L327.8 58.6 Z" fill="#cfcfd3" stroke="#c4c4c8" stroke-width="0.5"/>
<path d="M347.2 48.6 L339.4 53.6 L347.2 58.6 Z" fill="#cfcfd3" stroke="#c4c4c8" stroke-width="0.5"/>
<line x1="337.5" y1="43.8" x2="337.5" y2="63.2" stroke="#8a8a90" stroke-width="0.9"/>
<g fill="#cdcdd1" stroke="#c6c6ca" stroke-width="0.5"><circle cx="362.4" cy="53.6" r="6"/><circle cx="370" cy="53.6" r="6"/></g><circle cx="362.4" cy="53.6" r="5.7" fill="#cdcdd1"/>
<g stroke="#c4c4c8" stroke-width="0.5"><circle cx="392" cy="53.6" r="6" fill="#cbcbcf"/><circle cx="400.2" cy="53.6" r="6" fill="#d3d3d7"/></g>
<g stroke="#c4c4c8" stroke-width="0.5"><circle cx="424" cy="53.6" r="6" fill="#cfcfd3"/><circle cx="431.6" cy="53.6" r="6" fill="#cfcfd3" fill-opacity="0.7"/></g><path d="M427.8 49 A6 6 0 0 1 427.8 58.2 A6 6 0 0 1 427.8 49 Z" fill="#d6d6da" stroke="#bcbcc0" stroke-width="0.5"/>
<rect x="27.5" y="607.3" width="996.5" height="19.7" fill="url(#btab)"/>
<rect x="0" y="596.6" width="27.5" height="30.4" fill="url(#ltool)"/>
<path d="M73.4 607.3 H117.6 V617.6 Q117.6 619.8 115.4 619.8 H75.6 Q73.4 619.8 73.4 617.6 Z" fill="url(#ptab)" stroke="#a9b0cc" stroke-width="0.7"/>
<path d="M119 607.3 H169 V617.6 Q169 619.8 166.8 619.8 H121.2 Q119 619.8 119 617.6 Z" fill="url(#ptab)" stroke="#a9b0cc" stroke-width="0.7"/>
<path d="M27.8 607.3 H72.4 V620 Q72.4 622.2 70.2 622.2 H30 Q27.8 622.2 27.8 620 Z" fill="#f6f6f8" stroke="#55585f" stroke-width="0.8"/>
<rect x="28.2" y="606.6" width="43.8" height="1.6" fill="#f3f3f4"/>
<line x1="27.6" y1="607" x2="27.6" y2="612" stroke="#333" stroke-width="1"/>
<text x="34.7" y="618.4" font-size="7.6" fill="#15151f" text-anchor="start" textLength="30.1" lengthAdjust="spacingAndGlyphs" >Top-Down</text>
<text x="77.7" y="617.2" font-size="7.6" fill="#15151f" text-anchor="start" textLength="34.3" lengthAdjust="spacingAndGlyphs" >Perspective</text>
<text x="125.0" y="617.2" font-size="7.6" fill="#15151f" text-anchor="start" textLength="38.5" lengthAdjust="spacingAndGlyphs" >Walkthrough</text>
<rect x="922.3" y="609.3" width="65.3" height="13.2" fill="#ffffff" stroke="#7a7a7a" stroke-width="0.8"/>
<text x="924.4" y="618.7" font-size="7.8" fill="#101010" text-anchor="start" textLength="21.2" lengthAdjust="spacingAndGlyphs" >Layer 1</text>
<path d="M979.6 615 L982 617.6 L984.4 615" fill="none" stroke="#444" stroke-width="0.9"/>
<rect x="989.8" y="609.3" width="16.8" height="13.2" rx="1.5" fill="#d2e6fa" stroke="#6f9fd6" stroke-width="0.9"/>
<g fill="#f6f8fb" stroke="#555" stroke-width="0.5"><path d="M993.4 619.4 L996.6 617 L1003 617.8 L1000 620.4 Z"/><path d="M993.4 617.2 L996.6 614.8 L1003 615.6 L1000 618.2 Z"/><path d="M993.4 615 L996.6 612.6 L1003 613.4 L1000 616 Z"/></g>
<rect x="1008.4" y="609.3" width="18" height="13.2" rx="1.5" fill="#d2e6fa" stroke="#6f9fd6" stroke-width="0.9"/>
<path d="M1014.6 614.6 L1016.8 617 L1019 614.6" fill="none" stroke="#222" stroke-width="1.2"/>
<linearGradient id="tb" x1="0" y1="0" x2="0" y2="1"><stop offset="0" stop-color="#4a525e"/><stop offset="0.35" stop-color="#2f3640"/><stop offset="1" stop-color="#272d36"/></linearGradient><rect x="0" y="627" width="1024" height="6" fill="url(#tb)"/>
<line x1="17.6" y1="629" x2="17.6" y2="633" stroke="#9aa0a8" stroke-width="0.6"/><line x1="68.6" y1="629" x2="68.6" y2="633" stroke="#9aa0a8" stroke-width="0.6"/>
<path d="M29 630.6 L32.4 630.2 L34 633 M31 631.6 Q35 629.4 37.4 632.6" stroke="#c2c8d0" stroke-width="0.7" fill="none"/>
<rect x="72.8" y="630.6" width="12.4" height="3" rx="0.8" fill="#3b8fd0"/></svg></body></html>
